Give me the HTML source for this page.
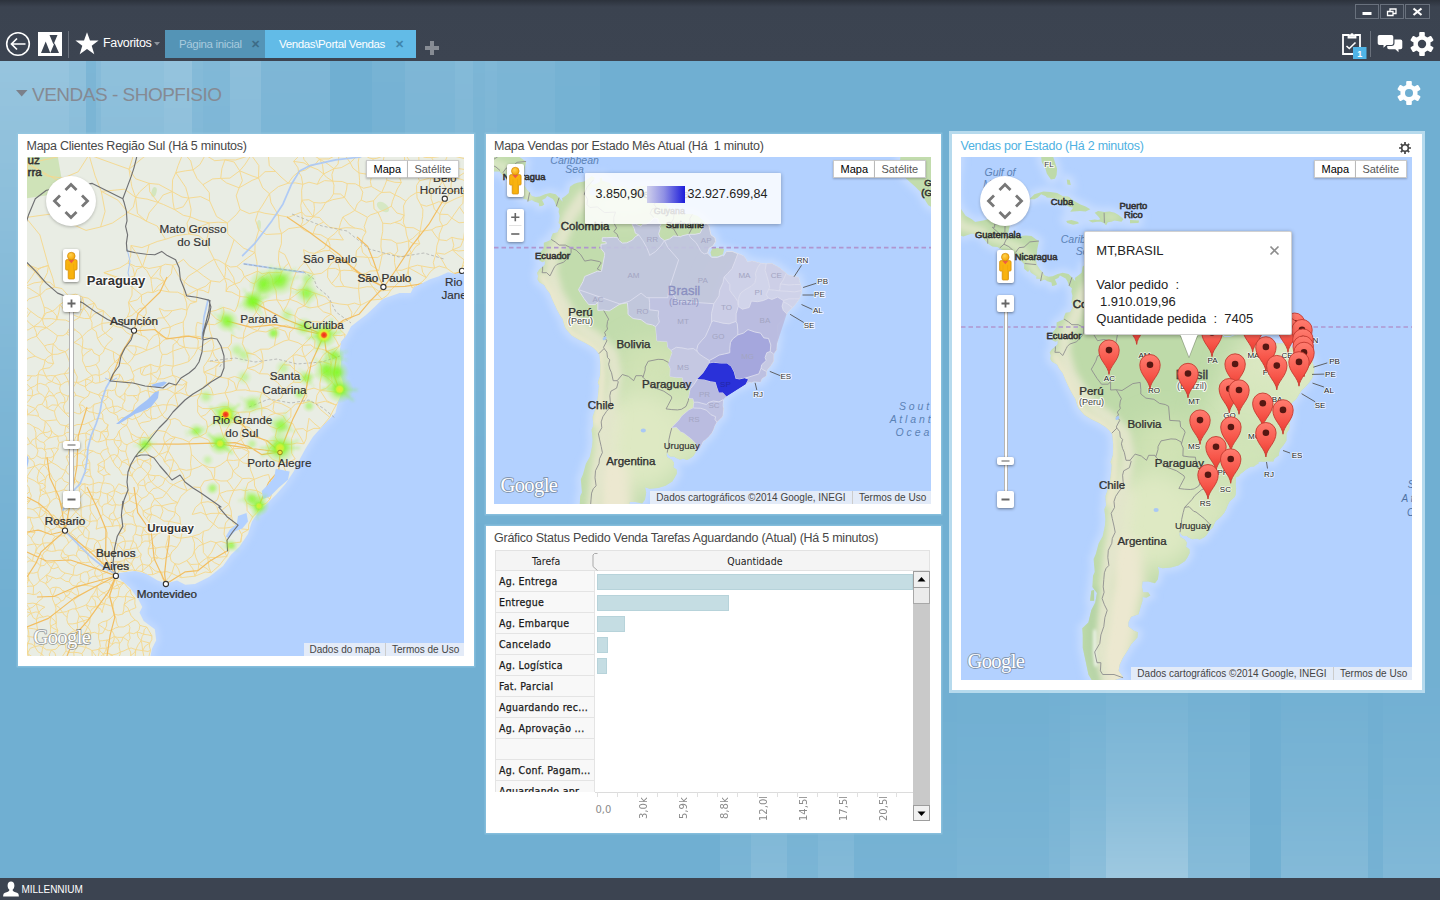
<!DOCTYPE html>
<html lang="pt-BR"><head><meta charset="utf-8"><title>Vendas - Portal Vendas</title>
<style>
*{box-sizing:border-box;margin:0;padding:0}
html,body{width:1440px;height:900px;overflow:hidden}
body{background:#70afd2;font-family:"Liberation Sans",sans-serif;position:relative}
#bgtl{position:absolute;left:0;top:61px;width:760px;height:560px;
 background:linear-gradient(90deg,rgba(255,255,255,0.27) 0px 69px,rgba(255,255,255,0.22) 69px 86px,rgba(255,255,255,0.09) 86px 96px,rgba(255,255,255,0.16) 96px 101px,rgba(255,255,255,0.22) 101px 164px,rgba(255,255,255,0.26) 164px 192px,rgba(255,255,255,0.15) 192px 203px,rgba(255,255,255,0.12) 203px 230px,rgba(255,255,255,0.2) 230px 261px,rgba(255,255,255,0.1) 261px 330px,rgba(255,255,255,0) 330px 372px,rgba(255,255,255,0.05) 372px 405px,rgba(255,255,255,0.1) 405px 455px,rgba(255,255,255,0.14) 455px 473px,rgba(255,255,255,0.09) 473px 485px,rgba(255,255,255,0.115) 485px 497px,rgba(255,255,255,0.085) 497px 555px,rgba(255,255,255,0.045) 555px 600px,rgba(255,255,255,0) 600px 760px);
 -webkit-mask-image:linear-gradient(180deg,#000 0,rgba(0,0,0,.75) 25%,rgba(0,0,0,.3) 65%,transparent 100%);mask-image:linear-gradient(180deg,#000 0,rgba(0,0,0,.75) 25%,rgba(0,0,0,.3) 65%,transparent 100%)}
#bgbr{position:absolute;left:700px;top:560px;width:740px;height:318px;
 background:linear-gradient(90deg,rgba(255,255,255,0) 0 20px,rgba(255,255,255,.08) 20px 51px,rgba(255,255,255,.16) 51px 87px,rgba(255,255,255,.08) 87px 118px,rgba(255,255,255,.14) 118px 154px,rgba(255,255,255,.05) 154px 257px,rgba(255,255,255,.08) 257px 349px,rgba(255,255,255,.12) 349px 370px,rgba(255,255,255,.2) 370px 406px,rgba(255,255,255,.32) 406px 488px,rgba(255,255,255,.16) 488px 550px,rgba(255,255,255,.02) 550px 581px,rgba(255,255,255,.14) 581px 668px,rgba(255,255,255,.04) 668px 683px,rgba(255,255,255,.12) 683px 740px);
 -webkit-mask-image:linear-gradient(0deg,#000 0,rgba(0,0,0,.55) 25%,rgba(0,0,0,.2) 55%,transparent 100%);mask-image:linear-gradient(0deg,#000 0,rgba(0,0,0,.55) 25%,rgba(0,0,0,.2) 55%,transparent 100%)}
#hdr{position:absolute;left:0;top:0;width:1440px;height:61px;background:linear-gradient(180deg,#2c323c 0,#3b4350 7px,#3c4451 100%)}
#hdr svg{position:absolute}
.tab{position:absolute;top:30px;height:28px;font-size:11.5px;line-height:28px;white-space:nowrap;letter-spacing:-.36px}
#tab1{left:165px;width:100px;background:#5494b6;color:#a9cbde}
#tab2{left:265px;width:151px;background:#62bbe7;color:#fff}
.tab span{position:absolute;top:0}
.tab i{position:absolute;top:0;font-style:normal;font-size:11px;color:#3d6c87;font-weight:bold}
#fav{position:absolute;left:103px;top:35px;color:#fff;font-size:12.5px;line-height:16px;letter-spacing:-.33px}
#ttl{position:absolute;left:32px;top:83px;font-size:19px;line-height:24px;color:#858a93;letter-spacing:-.5px;white-space:nowrap}
#footer{position:absolute;left:0;top:878px;width:1440px;height:22px;background:#3c4451;color:#fff;font-size:10px}
#footer svg{position:absolute;left:3px;top:3px}
#footer span{position:absolute;left:21.500px;top:6px;line-height:12px;letter-spacing:-0.05px}
.panel{position:absolute;background:#fff;box-shadow:0 0 0 1.5px rgba(150,200,228,.55)}
.panel.sel{box-shadow:0 0 0 3px rgba(205,232,245,.75)}
#p1{left:18px;top:133.500px;width:455.500px;height:532px}
#p2{left:485.500px;top:133.500px;width:455.500px;height:380px}
#p3{left:952px;top:133.500px;width:470px;height:556px}
#p4{left:485.500px;top:525.500px;width:455.500px;height:307px}
.ptitle{position:absolute;left:8.500px;top:4px;font-size:12.5px;line-height:16px;color:#484848;white-space:nowrap;letter-spacing:-0.25px}
#p3 .ptitle{color:#4eb1e2}
.map{position:absolute;overflow:hidden;background:#b3d1ff}
#m1{left:9px;top:23.500px;width:437px;height:499px}
#m2{left:8.500px;top:23.500px;width:437px;height:347px}
#m3{left:9px;top:23.500px;width:451px;height:523px}
.map>svg{position:absolute;left:0;top:0}
.gm{font-family:"Liberation Sans",sans-serif}
.mtype{position:absolute;top:3px;height:18px;background:#fff;border:1px solid #c9c9c9;box-shadow:0 1px 2px rgba(0,0,0,.25);font-size:11px;line-height:16px;text-align:center;color:#565656}
.mtype b{color:#000;font-weight:normal}
.attr{position:absolute;bottom:0;height:13.500px;background:rgba(245,245,245,.72);font-size:10px;line-height:13px;color:#444;white-space:nowrap;padding:0 6px}
.zb{position:absolute;width:17px;height:17px;background:#fff;border-radius:2px;box-shadow:0 1px 3px rgba(0,0,0,.45)}
.zb svg{position:absolute;left:0;top:0}
#iw{position:absolute;left:123.300px;top:74.300px;width:208px;height:103.500px;background:#fff;border-radius:2px;box-shadow:0 1px 4px rgba(0,0,0,.35);border:1px solid rgba(0,0,0,.18)}
#iwc{position:absolute;left:11px;top:9.700px;font-size:13px;line-height:17px;color:#222;white-space:nowrap;letter-spacing:0}
#lg{position:absolute;left:90.500px;top:15.500px;width:196px;height:51px;background:rgba(255,255,255,.84);box-shadow:0 1px 4px rgba(0,0,0,.3);border-radius:1px}
#lg span{position:absolute;top:13.500px;font-size:12.5px;line-height:16px;color:#222;white-space:nowrap}
#chart{position:absolute;width:434.500px;height:275px;font-family:"DejaVu Sans Condensed","DejaVu Sans","Liberation Sans",sans-serif;font-size:10.5px;color:#1a1a1a}
#chd{position:absolute;left:0;top:0;width:434.500px;height:21.500px;background:#f4f4f4;border:1px solid #e2e2e2}
#chd span{position:absolute;top:0;line-height:21px;text-align:center}
#crows{position:absolute;left:0;top:21.500px;width:434.500px;height:220.500px;overflow:hidden}
.crow{position:absolute;left:0;width:99.500px;height:21px;background:#f8f8f8;border:1px solid #e4e4e4;border-top:0}
.crow span{position:absolute;left:2.500px;top:0;line-height:20px;white-space:nowrap;letter-spacing:.3px;-webkit-text-stroke:.25px #1a1a1a}
.cbar{position:absolute;left:101.900px;height:16.500px;background:#c5dde3;border:1px solid #b7d3da}
#cax{position:absolute;left:99.500px;top:242px;width:318px;height:1px;background:#dcdcdc}
#chart>i{position:absolute;top:242px;width:1px;height:5px;background:#e0e0e0}
.xl0{position:absolute;top:254.500px;font-family:"DejaVu Sans","Liberation Sans",sans-serif;font-size:10px;color:#8a8a8a;line-height:12px}
.xl{position:absolute;top:247px;width:14px;height:24px;font-family:"DejaVu Sans","Liberation Sans",sans-serif;font-size:10px;color:#8a8a8a;line-height:14px;writing-mode:vertical-rl;transform:rotate(180deg);white-space:nowrap;overflow:hidden;text-align:right}
#csb{position:absolute;left:417.700px;top:21.700px;width:16.700px;height:250px;background:#c9c9c9}
.sbb{position:absolute;left:0;width:16.700px;height:16.500px;background:#f0f0f0;border:1px solid #9d9d9d}
.sbb svg{position:absolute;left:0;top:0}
.sbt{position:absolute;left:0;top:16.500px;width:16.700px;height:16px;background:#ebebeb;border:1px solid #a8a8a8;border-top:0}

</style></head><body>
<div id="bgtl"></div><div id="bgbr"></div>
<div id="hdr">
<svg style="left:5px;top:31px" width="26" height="26" viewBox="0 0 26 26"><circle cx="13" cy="13" r="11.300" fill="none" stroke="#fff" stroke-width="1.600"/><path d="M20.500 13H7M12 7.500L6.500 13l5.500 5.500" fill="none" stroke="#fff" stroke-width="1.700"/></svg>
<svg style="left:38px;top:32px" width="24" height="24" viewBox="0 0 24 24"><rect width="24" height="24" fill="#fff"/><path d="M11.500 3h8l-4 9.500zM3 21l4.700-11.500L12.300 21zM12.300 21l4.200-10 4.500 10z" fill="#3c4451"/></svg>
<svg style="left:67.500px;top:31px" width="1" height="27"><rect width="1" height="27" fill="#6a717c"/></svg>
<svg style="left:74px;top:31px" width="26" height="25" viewBox="0 0 26 25"><path d="M13 1.200l3 8.300h8.600l-6.900 5.200 2.600 8.500L13 18l-7.300 5.200 2.600-8.500L1.400 9.500H10z" fill="#fff"/></svg>
<div id="fav">Favoritos</div>
<svg style="left:153.500px;top:42px" width="6" height="4" viewBox="0 0 6 4"><path d="M0 0h6L3 3.500z" fill="#8e949c"/></svg>
<div class="tab" id="tab1"><span style="left:14px">Página inicial</span><i style="left:86px">✕</i></div>
<div class="tab" id="tab2"><span style="left:14px">Vendas\Portal Vendas</span><i style="left:130px;color:#3f86ad">✕</i></div>
<svg style="left:425px;top:41px" width="14" height="14" viewBox="0 0 14 14"><path d="M5 0h4v5h5v4H9v5H5V9H0V5h5z" fill="#878c94"/></svg>
<!-- window buttons -->
<svg style="left:1355px;top:4px" width="76" height="16" viewBox="0 0 76 16"><g fill="none" stroke="#69717d"><rect x=".5" y=".5" width="23" height="14"/><rect x="25.500" y=".5" width="23" height="14"/><rect x="50.500" y=".5" width="24" height="14"/></g><rect x="7.500" y="8" width="9" height="3" fill="#fff"/><path d="M32.500 7.500h5.500v4h-5.500zM35 7V5h6v4.500h-2.500" fill="none" stroke="#fff" stroke-width="1.300"/><path d="M58.500 4.500l8 6.500M66.500 4.500l-8 6.500" stroke="#fff" stroke-width="2.200"/></svg>
<!-- clipboard -->
<svg style="left:1341px;top:30px" width="28" height="30" viewBox="0 0 28 30"><path d="M2 5h5.500v2.500h7V5H19v19H2z" fill="none" stroke="#fff" stroke-width="1.800"/><path d="M8 4.500h1.300a1.800 1.800 0 0 1 3.400 0H14v2.300H8z" fill="#fff"/><path d="M5.500 16l2.800 2.500 6.200-6" fill="none" stroke="#fff" stroke-width="1.600"/><rect x="12" y="17" width="13.500" height="12" fill="#4fb4e6"/><text x="18.700" y="26.500" font-family="Liberation Sans,sans-serif" font-size="9" font-weight="bold" fill="#fff" text-anchor="middle">1</text></svg>
<svg style="left:1370px;top:31px" width="1" height="26"><rect width="1" height="26" fill="#6a717c"/></svg>
<!-- chat -->
<svg style="left:1377px;top:34px" width="26" height="20" viewBox="0 0 26 20"><path d="M2.500 1h12a1.800 1.800 0 0 1 1.800 1.800v6.400a1.800 1.800 0 0 1-1.800 1.800H9.500L6.500 13.800V11H2.500A1.800 1.800 0 0 1 .7 9.200V2.800A1.800 1.800 0 0 1 2.500 1z" fill="#fff"/><path d="M17.500 5.500h6a1.800 1.800 0 0 1 1.800 1.800v6.200a1.800 1.800 0 0 1-1.800 1.800h-2v2.900l-3.200-2.900H12a1.800 1.800 0 0 1-1.800-1.800V12h4.300a3 3 0 0 0 3-3z" fill="#fff"/></svg>
<!-- gear -->
<svg style="left:1410px;top:32px" width="24" height="24" viewBox="-12 -12 24 24"><g fill="#fff"><circle r="8.600"/><g id="tth"><rect x="-2.800" y="-12" width="5.600" height="6" rx="1"/></g><use href="#tth" transform="rotate(60)"/><use href="#tth" transform="rotate(120)"/><use href="#tth" transform="rotate(180)"/><use href="#tth" transform="rotate(240)"/><use href="#tth" transform="rotate(300)"/></g><circle r="4.200" fill="#3c4451"/></svg>
</div>
<svg style="position:absolute;left:16px;top:90px" width="12" height="7" viewBox="0 0 12 7"><path d="M0 0h11.500L5.700 6.500z" fill="#7b808a"/></svg>
<div id="ttl">VENDAS - SHOPFISIO</div>
<svg style="position:absolute;left:1397px;top:81px" width="24" height="24" viewBox="-12 -12 24 24"><g fill="#fff"><circle r="8.600"/><use href="#tth"/><use href="#tth" transform="rotate(60)"/><use href="#tth" transform="rotate(120)"/><use href="#tth" transform="rotate(180)"/><use href="#tth" transform="rotate(240)"/><use href="#tth" transform="rotate(300)"/></g><circle r="4" fill="#70afd2"/></svg>

<div class="panel" id="p1"><div class="ptitle">Mapa Clientes Região Sul (Há 5 minutos)</div><div class="map" id="m1"><svg width="437" height="499" viewBox="0 0 437 499" font-family="Liberation Sans,sans-serif"><defs><clipPath id="land1"><path d="M442.0 115.0L437.0 115.3L428.0 116.7L421.0 115.3L411.4 119.4L403.0 122.2L394.8 126.4L386.4 130.6L383.7 136.0L372.6 136.0L364.0 139.0L356.0 141.7L347.6 150.0L339.0 158.0L331.0 164.0L324.0 169.4L319.8 177.8L314.0 184.7L312.8 194.4L314.0 205.6L312.8 216.7L315.5 224.0L316.7 231.0L311.0 245.0L308.4 256.0L296.0 268.6L286.0 279.7L279.0 290.8L273.7 300.6L266.7 314.4L258.4 327.0L248.7 338.0L237.6 349.0L230.6 356.0L225.0 364.4L221.0 377.0L212.6 389.4L204.0 397.8L196.0 409.0L182.0 420.0L168.0 427.0L158.3 427.8L150.0 423.6L138.9 426.4L130.6 423.6L119.4 416.7L108.3 413.9L97.2 415.3L88.9 416.7L94.4 423.6L102.8 430.6L111.0 441.7L115.3 450.0L112.5 455.6L116.7 463.9L127.8 472.2L129.2 483.3L125.0 491.7L122.2 505.0L-5.0 505.0L-5.0 -5.0L442.0 -5.0Z"/></clipPath><radialGradient id="hg"><stop offset="0" stop-color="#7cff1c" stop-opacity="1"/><stop offset=".3" stop-color="#86f52c" stop-opacity=".85"/><stop offset=".65" stop-color="#97f446" stop-opacity=".35"/><stop offset="1" stop-color="#a4f25a" stop-opacity="0"/></radialGradient><radialGradient id="hy"><stop offset="0" stop-color="#ffe23a" stop-opacity="1"/><stop offset=".6" stop-color="#e6f23a" stop-opacity=".8"/><stop offset="1" stop-color="#b8f23a" stop-opacity="0"/></radialGradient><radialGradient id="hr"><stop offset="0" stop-color="#f0241a" stop-opacity="1"/><stop offset=".6" stop-color="#f5531f" stop-opacity=".95"/><stop offset="1" stop-color="#ffb52a" stop-opacity="0"/></radialGradient></defs><path d="M442.0 115.0L437.0 115.3L428.0 116.7L421.0 115.3L411.4 119.4L403.0 122.2L394.8 126.4L386.4 130.6L383.7 136.0L372.6 136.0L364.0 139.0L356.0 141.7L347.6 150.0L339.0 158.0L331.0 164.0L324.0 169.4L319.8 177.8L314.0 184.7L312.8 194.4L314.0 205.6L312.8 216.7L315.5 224.0L316.7 231.0L311.0 245.0L308.4 256.0L296.0 268.6L286.0 279.7L279.0 290.8L273.7 300.6L266.7 314.4L258.4 327.0L248.7 338.0L237.6 349.0L230.6 356.0L225.0 364.4L221.0 377.0L212.6 389.4L204.0 397.8L196.0 409.0L182.0 420.0L168.0 427.0L158.3 427.8L150.0 423.6L138.9 426.4L130.6 423.6L119.4 416.7L108.3 413.9L97.2 415.3L88.9 416.7L94.4 423.6L102.8 430.6L111.0 441.7L115.3 450.0L112.5 455.6L116.7 463.9L127.8 472.2L129.2 483.3L125.0 491.7L122.2 505.0L-5.0 505.0L-5.0 -5.0L442.0 -5.0Z" fill="none" stroke="#c3daff" stroke-width="7" filter="url(#blur3)"/><path d="M442.0 115.0L437.0 115.3L428.0 116.7L421.0 115.3L411.4 119.4L403.0 122.2L394.8 126.4L386.4 130.6L383.7 136.0L372.6 136.0L364.0 139.0L356.0 141.7L347.6 150.0L339.0 158.0L331.0 164.0L324.0 169.4L319.8 177.8L314.0 184.7L312.8 194.4L314.0 205.6L312.8 216.7L315.5 224.0L316.7 231.0L311.0 245.0L308.4 256.0L296.0 268.6L286.0 279.7L279.0 290.8L273.7 300.6L266.7 314.4L258.4 327.0L248.7 338.0L237.6 349.0L230.6 356.0L225.0 364.4L221.0 377.0L212.6 389.4L204.0 397.8L196.0 409.0L182.0 420.0L168.0 427.0L158.3 427.8L150.0 423.6L138.9 426.4L130.6 423.6L119.4 416.7L108.3 413.9L97.2 415.3L88.9 416.7L94.4 423.6L102.8 430.6L111.0 441.7L115.3 450.0L112.5 455.6L116.7 463.9L127.8 472.2L129.2 483.3L125.0 491.7L122.2 505.0L-5.0 505.0L-5.0 -5.0L442.0 -5.0Z" fill="#e9ede4"/><g clip-path="url(#land1)"><path d="M-5 -5H30L36 30 22 38-5 42z" fill="#cfe3b8"/><ellipse cx="127" cy="35" rx="2.500" ry="5" fill="#d3e6bf" transform="rotate(15 127 35)"/><ellipse cx="236" cy="125" rx="3" ry="5" fill="#d6e8c4"/><ellipse cx="356" cy="50" rx="7" ry="4" fill="#d6e8c4" transform="rotate(35 356 50)"/><ellipse cx="232" cy="68" rx="2" ry="5" fill="#d6e8c4"/><path d="M196.7 280.5L202.0 287.5 205.5 291.8M196.7 280.5L191.9 284.7 185.2 290.1M196.7 280.5L198.6 274.3 203.8 265.2M196.7 280.5L193.2 269.3 191.2 264.2M222.1 294.9L221.0 300.4 223.3 307.2M222.1 294.9L216.8 299.8 212.3 302.8M222.1 294.9L217.6 288.3 214.2 282.6M222.1 294.9L214.7 291.3 205.5 291.8M74.4 255.7L75.8 258.0 75.9 262.2M74.4 255.7L76.0 253.5 79.4 251.1M33.0 147.5L28.1 152.3 25.5 154.1M33.0 147.5L37.3 144.6 41.4 138.8M33.0 147.5L37.2 153.0 43.9 156.0M33.0 147.5L31.9 155.1 29.8 162.6M31.4 410.2L30.7 408.3 27.6 404.7M31.4 410.2L26.8 411.7 24.2 411.1M31.4 410.2L34.0 413.9 37.9 416.0M306.9 11.7L302.9 13.8 296.6 17.0M306.9 11.7L304.9 17.6 305.8 24.2M306.9 11.7L311.1 7.0 312.1 -3.4M62.0 -2.2L51.2 14.8 36.2 21.1M62.0 -2.2L68.0 18.5 74.3 34.4M62.0 -2.2L88.8 7.5 102.0 12.2M231.5 20.9L238.0 14.7 248.6 14.4M231.5 20.9L235.7 30.9 242.5 36.7M231.5 20.9L225.2 19.0 212.7 13.8M231.5 20.9L225.2 23.3 212.1 30.8M76.9 115.6L92.7 110.9 101.0 105.8M76.9 115.6L97.1 122.3 107.7 118.8M76.9 115.6L86.2 119.5 105.1 130.2M3.7 230.8L7.5 229.2 10.4 227.0M3.7 230.8L5.6 233.4 5.3 238.9M227.2 322.3L227.6 328.8 230.0 333.7M227.2 322.3L222.1 321.2 215.4 321.6M227.2 322.3L221.0 325.9 218.4 333.8M227.2 322.3L236.4 318.7 241.6 317.5M218.4 333.8L213.6 332.6 206.9 333.4M218.4 333.8L222.7 332.5 230.0 333.7M218.4 333.8L217.8 341.9 219.8 345.9M199.0 134.4L201.6 129.8 207.9 126.9M199.0 134.4L199.5 126.7 197.5 121.2M199.0 134.4L204.6 135.1 212.8 139.5M134.1 109.2L138.4 107.2 145.6 108.1M134.1 109.2L132.9 117.8 137.1 124.6M134.1 109.2L127.8 116.8 123.9 121.2M134.1 109.2L121.9 111.5 115.5 109.7M122.1 26.4L112.6 34.9 108.6 40.4M122.1 26.4L122.8 34.8 130.9 45.4M122.1 26.4L131.7 27.3 145.2 34.6M23.4 316.7L19.8 318.6 18.6 321.9M23.4 316.7L25.6 321.4 28.8 325.0M23.4 316.7L19.9 311.2 17.4 308.0M345.8 130.0L339.9 129.7 331.5 131.4M345.8 130.0L351.0 137.6 355.0 142.1M345.8 130.0L339.9 122.0 338.5 116.6M29.8 162.6L29.4 158.6 25.5 154.1M29.8 162.6L26.9 165.5 19.6 170.7M29.8 162.6L38.7 163.1 43.3 165.3M29.8 162.6L24.5 161.6 15.3 161.8M36.2 21.1L20.0 19.0 1.0 6.6M354.2 82.2L353.9 90.0 355.3 97.3M354.2 82.2L364.3 83.1 369.7 86.3M354.2 82.2L355.7 74.5 355.7 66.2M245.6 222.2L241.3 217.0 232.4 216.7M245.6 222.2L250.6 225.5 257.7 233.4M77.1 369.9L72.1 371.2 69.1 372.2M77.1 369.9L80.2 369.6 85.7 369.3M49.9 324.1L46.7 326.4 42.5 326.3M49.9 324.1L51.6 326.8 52.3 331.5M49.9 324.1L47.1 320.3 44.3 318.2M43.2 208.4L46.9 211.6 48.0 215.1M43.2 208.4L41.4 211.8 37.2 216.8M43.2 208.4L42.1 203.6 38.3 194.6M86.3 194.6L83.3 193.4 77.7 191.1M86.3 194.6L92.0 198.3 94.9 199.3M86.3 194.6L86.8 200.9 87.8 204.9M35.9 503.4L32.4 502.2 29.1 500.7M35.9 503.4L35.7 499.0 39.0 493.9M35.9 503.4L42.5 503.3 47.9 503.8M35.9 503.4L30.7 500.9 22.9 502.7M31.2 292.4L30.9 290.3 32.2 285.6M31.2 292.4L28.4 290.8 23.9 291.6M31.2 292.4L29.4 295.0 26.8 299.2M101.1 302.1L96.8 303.5 94.8 304.9M101.1 302.1L101.5 305.4 102.6 308.9M101.1 302.1L100.0 299.5 98.7 294.4M159.9 225.2L155.6 228.1 149.0 227.5M159.9 225.2L158.5 233.5 160.5 238.4M159.9 225.2L150.7 220.0 145.9 218.4M159.9 225.2L156.7 230.8 147.9 236.7M73.6 70.0L85.5 66.0 100.9 55.5M73.6 70.0L78.1 54.5 74.3 34.4M104.0 88.5L103.7 98.9 101.0 105.8M104.0 88.5L114.9 90.6 122.0 87.8M104.0 88.5L110.3 97.9 115.5 109.7M79.8 483.1L83.1 485.6 85.0 487.5M79.8 483.1L75.5 483.7 72.4 484.0M79.8 483.1L78.8 488.0 79.4 491.2M182.6 43.9L182.3 35.7 175.9 27.7M182.6 43.9L173.6 39.6 161.7 41.1M7.7 489.6L5.3 487.1 0.8 486.5M7.7 489.6L12.3 488.7 15.7 490.2M7.7 489.6L7.6 484.5 10.3 480.5M99.0 355.7L102.7 358.4 106.3 359.9M99.0 355.7L103.4 355.6 107.3 353.0M99.0 355.7L97.6 352.9 96.0 347.4M99.0 355.7L94.6 359.6 89.6 362.2M262.6 142.3L263.9 134.9 263.7 130.8M262.6 142.3L255.4 143.8 249.8 142.8M262.6 142.3L259.9 148.3 256.5 154.3M262.6 142.3L270.1 144.8 277.4 149.0M70.2 363.9L65.6 364.0 63.1 364.8M70.2 363.9L70.1 367.3 69.1 372.2M21.4 108.5L14.8 110.4 7.9 114.9M21.4 108.5L20.4 115.7 15.9 124.7M21.4 108.5L25.9 121.4 27.7 130.1M21.4 108.5L10.9 111.6 -1.9 106.6M409.2 95.9L409.9 88.7 411.9 82.7M409.2 95.9L406.3 105.5 407.6 111.1M-2.4 129.7L2.2 131.3 13.1 138.3M-2.4 129.7L4.9 119.7 7.9 114.9M-2.4 129.7L-3.6 136.2 -3.1 147.9M-2.4 129.7L7.0 125.9 15.9 124.7M193.7 21.4L185.7 21.9 175.9 27.7M193.7 21.4L194.9 11.6 197.9 2.8M193.7 21.4L202.9 21.1 212.7 13.8M193.7 21.4L199.5 25.9 212.1 30.8M70.5 181.4L75.4 177.7 78.4 176.2M70.5 181.4L69.2 174.7 64.9 171.5M70.5 181.4L74.7 188.3 77.7 191.1M251.5 58.3L252.3 70.3 254.5 76.7M251.5 58.3L237.8 56.3 231.3 54.5M251.5 58.3L244.0 45.8 242.5 36.7M251.5 58.3L261.9 60.2 274.7 55.0M-1.8 462.4L0.7 458.7 4.2 456.3M-1.8 462.4L-2.9 458.7 -2.3 453.6M-1.8 462.4L-1.8 466.4 0.7 471.1M-0.3 320.2L0.5 324.2 -0.9 326.9M-0.3 320.2L-0.8 316.4 -4.3 311.3M-0.3 320.2L7.1 323.5 11.2 326.3M-0.3 320.2L4.2 313.1 7.6 309.2M210.4 369.1L214.7 371.9 221.5 372.6M210.4 369.1L206.1 365.9 204.5 359.0M210.4 369.1L203.5 370.3 197.6 371.1M210.4 369.1L214.9 378.2 213.7 385.1M24.4 273.4L24.7 276.1 22.1 281.0M24.4 273.4L20.9 275.2 16.3 275.7M24.4 273.4L26.7 276.5 31.2 279.2M24.4 273.4L23.2 270.2 18.2 264.0M150.8 345.6L148.2 350.5 148.3 355.2M150.8 345.6L145.5 343.1 139.4 335.6M150.8 345.6L153.8 339.4 160.2 333.6M150.8 345.6L142.9 346.8 134.4 348.9M180.6 400.3L176.1 403.5 171.8 407.1M180.6 400.3L176.4 395.6 176.1 387.2M180.6 400.3L187.4 405.6 192.7 408.1M275.6 188.4L275.1 192.9 277.6 199.9M275.6 188.4L283.7 187.9 287.5 191.0M275.6 188.4L281.3 183.0 284.5 179.2M256.3 306.0L263.4 304.3 268.2 302.0M256.3 306.0L257.0 310.2 260.4 318.6M256.3 306.0L245.9 302.7 240.4 296.9M28.3 379.4L26.0 382.2 25.9 386.2M28.3 379.4L24.8 377.5 23.7 373.2M3.6 302.1L7.0 301.2 9.7 298.7M3.6 302.1L1.8 298.8 -2.1 296.9M3.6 302.1L7.0 305.1 7.6 309.2M3.6 302.1L0.1 301.3 -4.5 303.1M209.8 109.5L203.6 110.0 198.3 107.4M209.8 109.5L215.1 113.8 217.3 119.7M309.1 248.1L314.1 240.5 314.4 235.8M309.1 248.1L306.8 252.1 302.7 260.2M309.1 248.1L298.2 244.2 288.7 246.5M309.1 248.1L299.8 243.8 293.0 233.3M106.9 -4.1L105.2 2.4 102.0 12.2M106.9 -4.1L115.6 -2.6 125.3 -2.7M127.6 342.0L125.6 337.6 122.2 335.9M127.6 342.0L124.8 346.5 123.9 350.7M127.6 342.0L131.1 345.1 134.4 348.9M139.4 335.6L135.1 332.9 131.0 330.6M139.4 335.6L143.5 330.1 146.4 327.7M139.4 335.6L135.6 340.5 127.6 342.0M80.7 213.6L82.8 216.8 82.8 221.4M80.7 213.6L75.4 217.0 72.1 218.4M80.7 213.6L82.8 210.1 87.8 204.9M256.5 154.3L261.2 157.0 267.8 158.6M256.5 154.3L253.8 149.0 249.8 142.8M52.2 247.7L56.2 248.5 58.7 251.9M52.2 247.7L54.7 243.8 57.8 241.2M52.2 247.7L54.1 252.9 53.2 256.9M87.8 204.9L91.2 202.1 94.9 199.3M276.0 246.3L282.2 244.4 288.7 246.5M276.0 246.3L268.5 247.0 264.0 251.7M388.9 11.5L389.7 17.2 392.5 23.8M388.9 11.5L392.0 5.5 391.7 -2.0M388.9 11.5L382.5 11.0 374.2 11.7M131.2 400.8L126.8 400.5 124.5 401.3M131.2 400.8L128.2 396.9 128.8 391.1M131.2 400.8L126.6 402.9 122.1 408.3M131.2 400.8L135.6 402.0 143.1 398.9M-1.3 60.5L24.0 57.0 38.4 64.2M-1.3 60.5L-2.6 83.8 -1.9 106.6M-1.3 60.5L12.9 77.9 21.4 108.5M197.9 2.8L207.1 5.0 212.7 13.8M197.9 2.8L187.7 3.7 178.3 -2.0M369.2 113.2L373.1 118.9 376.7 122.9M369.2 113.2L374.7 113.3 381.5 110.7M277.5 221.7L280.4 227.3 279.2 233.1M277.5 221.7L278.7 218.2 281.5 210.9M277.5 221.7L273.9 225.5 266.5 225.2M277.5 221.7L274.0 217.1 267.5 212.8M302.8 93.5L302.9 87.6 300.9 82.0M302.8 93.5L305.7 95.7 312.8 102.1M207.1 82.7L200.8 77.0 200.4 65.9M207.1 82.7L216.8 91.3 227.9 95.5M207.1 82.7L201.9 97.8 198.3 107.4M316.4 83.0L312.1 76.4 312.0 71.8M316.4 83.0L308.9 82.4 300.9 82.0M114.5 169.4L113.0 172.8 114.8 178.6M114.5 169.4L115.8 165.3 117.0 160.1M114.5 169.4L119.4 167.7 126.3 165.1M404.2 35.3L404.1 41.5 406.0 47.1M404.2 35.3L398.9 36.0 389.7 35.4M404.2 35.3L402.1 28.6 403.8 20.8M404.2 35.3L410.2 32.6 415.5 24.3M49.4 225.4L46.8 225.2 41.5 224.4M49.4 225.4L47.1 229.0 44.7 233.2M49.4 225.4L52.9 225.1 58.5 222.3M162.2 285.2L165.9 281.2 172.9 279.6M162.2 285.2L163.8 292.0 164.4 297.2M287.7 96.3L282.4 95.7 276.6 92.7M287.7 96.3L283.9 100.7 278.0 104.6M287.7 96.3L296.8 93.8 302.8 93.5M287.7 96.3L297.6 90.8 300.9 82.0M87.5 457.1L89.1 461.5 89.2 464.0M87.5 457.1L86.5 452.6 86.0 449.2M87.5 457.1L91.0 458.1 95.7 457.1M87.5 457.1L83.0 462.0 79.9 463.7M27.8 218.8L26.5 221.3 24.9 224.6M27.8 218.8L23.7 218.5 18.9 219.2M27.8 218.8L34.1 217.1 37.2 216.8M359.8 23.2L359.1 15.7 359.4 11.0M359.8 23.2L357.8 28.4 354.7 35.5M143.1 398.9L144.0 403.8 148.0 406.8M143.1 398.9L141.0 396.2 138.6 390.0M143.1 398.9L144.8 394.9 149.7 390.3M423.8 34.6L419.2 41.9 418.9 46.4M423.8 34.6L430.9 34.3 436.3 38.7M423.8 34.6L418.6 30.6 415.5 24.3M423.8 34.6L424.2 26.0 426.9 20.6M91.2 263.3L90.4 258.7 86.8 256.4M91.2 263.3L95.4 267.5 99.5 268.2M91.2 263.3L94.3 260.7 100.6 260.8M122.6 368.3L119.7 370.2 116.2 370.6M122.6 368.3L121.6 364.3 119.6 361.9M122.6 368.3L121.8 373.2 122.0 377.6M122.6 368.3L122.4 363.7 124.6 357.4M282.0 261.3L281.0 267.2 279.8 274.6M282.0 261.3L286.9 266.2 293.4 271.4M132.4 187.9L133.0 193.1 135.2 197.4M132.4 187.9L135.7 183.8 140.6 181.1M85.2 431.6L83.7 428.2 81.6 425.4M85.2 431.6L88.1 431.8 92.5 430.8M85.2 431.6L83.9 435.2 82.4 440.1M85.2 431.6L79.6 434.3 77.0 435.8M251.9 94.3L257.8 97.5 261.8 106.2M251.9 94.3L254.4 86.8 254.5 76.7M251.9 94.3L251.4 103.6 254.5 115.6M234.9 251.1L234.6 258.4 238.3 262.8M234.9 251.1L229.6 252.2 222.8 254.9M234.9 251.1L242.3 248.6 247.2 244.8M266.6 4.4L271.0 10.8 271.5 14.9M266.6 4.4L270.3 0.7 275.7 -4.9M266.6 4.4L277.0 5.9 283.3 9.7M247.2 244.8L246.0 252.6 248.4 256.4M247.2 244.8L254.2 241.1 257.7 233.4M305.8 24.2L299.6 20.3 296.6 17.0M305.8 24.2L307.0 28.3 306.5 36.8M305.8 24.2L315.2 24.5 320.2 26.6M236.2 204.7L235.6 211.0 232.4 216.7M236.2 204.7L235.1 196.9 233.6 192.2M236.2 204.7L227.7 209.3 220.3 211.2M236.2 204.7L228.3 197.9 219.7 195.9M113.0 235.6L110.2 238.5 105.8 238.6M113.0 235.6L113.1 231.6 110.5 227.8M113.0 235.6L118.5 233.5 121.1 234.0M48.0 215.1L50.3 219.8 49.4 225.4M48.0 215.1L44.5 215.4 37.2 216.8M207.8 154.6L203.7 152.4 196.5 150.3M207.8 154.6L210.4 149.1 212.8 139.5M77.5 310.7L77.2 307.4 77.4 303.7M77.5 310.7L74.4 309.8 70.7 307.4M77.5 310.7L74.9 313.2 70.9 314.9M412.8 57.2L412.7 63.7 415.7 68.9M412.8 57.2L407.3 52.1 406.0 47.1M346.1 1.8L349.7 1.4 357.3 -1.5M346.1 1.8L342.1 1.0 333.1 -4.9M346.1 1.8L345.0 9.9 344.9 17.7M304.0 157.2L307.2 159.9 312.2 165.9M304.0 157.2L303.4 150.3 303.2 145.1M304.0 157.2L298.9 160.2 294.4 165.3M304.0 157.2L296.4 154.8 290.9 149.7M152.4 311.7L149.4 313.4 143.6 314.1M152.4 311.7L150.3 307.4 146.7 302.9M152.4 311.7L156.1 317.3 157.6 322.1M37.9 369.3L39.6 367.1 41.9 362.7M37.9 369.3L35.2 365.4 32.3 363.2M37.9 369.3L34.3 371.0 29.5 369.9M46.1 254.9L46.4 258.2 45.0 261.4M46.1 254.9L50.7 256.7 53.2 256.9M232.4 216.7L227.6 213.4 220.3 211.2M161.7 204.6L162.2 199.3 157.5 190.2M161.7 204.6L154.9 206.8 146.2 209.2M161.7 204.6L167.4 197.7 170.8 191.2M231.9 72.9L228.5 63.2 231.3 54.5M231.9 72.9L239.1 77.5 254.5 76.7M231.9 72.9L228.1 85.1 227.9 95.5M83.3 317.7L80.8 317.3 76.8 318.7M83.3 317.7L79.1 314.9 77.5 310.7M381.5 110.7L380.5 116.2 376.7 122.9M381.5 110.7L390.3 108.2 394.6 109.0M395.6 59.5L395.9 52.7 393.7 47.6M395.6 59.5L394.0 68.8 393.1 74.4M99.4 367.1L96.5 366.8 92.7 368.7M99.4 367.1L97.9 370.0 98.1 374.1M108.6 40.4L106.3 50.0 100.9 55.5M108.6 40.4L120.1 42.1 130.9 45.4M108.6 40.4L110.5 56.5 119.3 64.2M351.0 55.4L343.7 57.8 340.4 60.3M351.0 55.4L353.8 61.6 355.7 66.2M351.0 55.4L347.0 51.8 346.5 43.8M351.0 55.4L358.2 52.6 364.3 49.2M174.1 345.6L181.0 344.7 186.2 345.9M174.1 345.6L176.4 350.2 178.8 357.7M174.1 345.6L168.5 350.3 165.2 357.5M432.5 49.9L435.9 46.3 436.3 38.7M432.5 49.9L427.1 57.6 424.7 61.1M219.8 345.9L225.0 348.7 233.2 348.5M219.8 345.9L220.1 353.5 225.6 360.1M18.3 483.8L17.7 486.4 15.7 490.2M18.3 483.8L19.6 480.0 23.2 478.4M201.2 386.9L194.2 384.4 189.0 385.7M201.2 386.9L201.9 394.7 199.8 399.5M201.2 386.9L209.2 385.6 213.7 385.1M201.2 386.9L197.0 377.2 197.6 371.1M139.4 232.4L142.7 233.5 147.9 236.7M139.4 232.4L132.3 233.1 129.0 234.9M139.4 232.4L145.7 228.9 149.0 227.5M72.8 225.6L72.6 221.0 72.1 218.4M72.8 225.6L68.2 226.3 65.3 224.9M224.2 -2.0L230.3 -4.8 241.3 -2.4M224.2 -2.0L217.7 7.9 212.7 13.8M224.2 -2.0L231.9 8.6 231.5 20.9M224.2 -2.0L208.5 3.0 197.9 2.8M277.6 199.9L280.1 204.8 281.5 210.9M277.6 199.9L269.7 197.7 265.9 198.4M264.0 251.7L263.8 260.0 259.5 264.5M264.0 251.7L258.9 256.0 248.4 256.4M264.0 251.7L254.5 246.6 247.2 244.8M108.0 463.0L110.7 464.4 112.9 468.3M108.0 463.0L104.2 465.0 101.5 467.2M108.0 463.0L104.1 458.6 102.1 453.8M320.2 26.6L328.4 26.8 332.6 29.2M320.2 26.6L319.6 32.1 317.5 40.4M96.1 480.3L98.5 482.0 101.5 484.1M96.1 480.3L94.6 484.3 92.6 486.2M96.1 480.3L99.6 476.8 102.1 475.7M96.1 480.3L90.4 480.4 87.3 479.4M294.4 165.3L287.6 164.5 280.4 165.2M233.6 192.2L241.7 192.1 247.4 188.7M233.6 192.2L225.4 196.5 219.7 195.9M437.9 1.8L441.0 7.0 441.2 13.1M437.9 1.8L429.6 -0.3 420.9 -2.2M107.3 198.4L109.3 193.2 108.7 189.1M107.3 198.4L104.6 202.8 100.4 206.9M161.7 41.1L155.0 40.0 145.2 34.6M161.7 41.1L156.2 49.8 147.4 52.5M161.7 41.1L164.1 52.5 163.2 59.8M10.6 472.7L9.1 477.0 10.3 480.5M10.6 472.7L6.5 471.7 0.7 471.1M10.6 472.7L9.8 468.2 9.4 462.6M63.1 234.8L59.7 233.1 58.3 229.7M63.1 234.8L61.0 239.2 57.8 241.2M63.1 234.8L66.4 236.1 71.4 237.8M67.3 247.2L71.2 246.2 75.1 244.8M67.3 247.2L66.1 250.1 66.0 255.4M67.3 247.2L63.6 250.8 58.7 251.9M157.1 138.3L156.9 130.2 157.2 124.7M157.1 138.3L163.9 144.0 169.6 144.7M157.1 138.3L161.7 137.3 170.5 132.6M157.1 138.3L150.7 135.2 142.3 135.0M119.6 361.9L121.6 358.6 124.6 357.4M119.6 361.9L116.3 358.2 116.1 353.9M125.3 -2.7L117.1 -0.2 102.0 12.2M102.0 12.2L108.7 21.8 122.1 26.4M102.0 12.2L104.8 29.7 108.6 40.4M61.6 381.7L57.5 379.9 55.8 377.1M61.6 381.7L60.0 385.5 58.8 389.8M61.6 381.7L66.5 381.8 70.7 383.9M61.6 381.7L62.2 374.8 58.7 370.5M332.0 16.0L340.7 17.3 344.9 17.7M332.0 16.0L332.6 23.5 332.6 29.2M23.6 460.0L27.0 456.8 28.5 455.4M23.6 460.0L20.9 458.8 16.3 460.0M23.6 460.0L27.5 463.5 29.3 466.1M186.3 237.9L190.4 237.0 198.0 235.8M186.3 237.9L181.1 237.4 173.9 236.6M186.3 237.9L184.1 231.2 179.6 226.6M231.3 54.5L222.3 56.6 213.1 52.5M192.4 336.6L190.4 342.7 186.2 345.9M192.4 336.6L196.5 343.4 202.0 347.4M192.4 336.6L199.8 334.0 206.9 333.4M256.1 207.7L263.1 208.1 267.5 212.8M256.1 207.7L260.6 202.6 265.9 198.4M256.1 207.7L249.7 216.9 245.6 222.2M325.6 113.7L317.1 113.2 313.1 113.9M325.6 113.7L334.4 117.4 338.5 116.6M325.6 113.7L329.1 107.7 328.9 99.7M325.6 113.7L320.9 104.9 312.8 102.1M42.0 453.3L45.6 451.9 48.7 451.9M42.0 453.3L39.5 454.6 35.4 455.3M42.0 453.3L40.4 457.5 40.2 460.2M260.4 318.6L252.1 321.7 248.4 329.6M334.3 88.5L329.4 93.8 328.9 99.7M334.3 88.5L335.6 95.5 341.3 100.6M103.8 498.5L104.4 502.5 105.8 504.9M103.8 498.5L103.6 494.9 101.6 491.6M103.8 498.5L107.7 495.4 108.8 492.6M113.8 210.7L113.4 215.3 114.6 217.6M113.8 210.7L109.7 212.5 105.2 214.8M274.9 43.2L273.7 48.5 274.7 55.0M274.9 43.2L281.8 42.7 286.8 45.5M274.9 43.2L274.6 33.3 275.8 27.3M274.9 43.2L279.4 50.5 286.3 59.8M29.5 341.0L29.0 337.4 28.4 334.1M29.5 341.0L32.3 342.9 34.3 346.7M29.5 341.0L25.8 342.5 22.8 345.9M241.6 317.5L243.8 325.2 248.4 329.6M160.5 238.4L153.5 235.8 147.9 236.7M160.5 238.4L165.3 239.4 173.9 236.6M86.3 168.4L90.2 169.8 95.4 170.9M86.3 168.4L81.9 173.1 78.4 176.2M341.3 100.6L337.0 100.0 328.9 99.7M341.3 100.6L350.8 100.4 355.3 97.3M183.9 123.9L182.9 127.9 181.5 136.0M183.9 123.9L192.9 125.1 197.5 121.2M183.9 123.9L179.0 129.1 170.5 132.6M183.9 123.9L176.6 118.9 170.0 113.7M138.7 274.7L132.0 273.6 128.3 273.9M138.7 274.7L136.5 281.1 137.6 285.8M138.7 274.7L144.7 279.3 148.6 280.3M185.4 181.6L186.9 189.6 185.5 193.7M185.4 181.6L182.7 173.3 182.2 167.3M185.4 181.6L175.1 180.2 168.9 179.1M185.4 181.6L175.2 188.9 170.8 191.2M34.3 444.2L37.0 442.8 38.9 439.1M34.3 444.2L30.5 447.1 28.0 448.0M34.3 444.2L31.6 440.6 25.7 438.8M303.2 145.1L299.2 146.5 290.9 149.7M303.2 145.1L312.7 147.0 320.7 147.8M303.2 145.1L298.6 139.9 287.7 136.0M344.4 29.5L343.4 24.6 344.9 17.7M344.4 29.5L336.6 31.2 332.6 29.2M344.4 29.5L347.5 31.4 354.7 35.5M87.5 333.6L87.0 337.3 85.7 340.3M87.5 333.6L91.1 335.3 94.3 337.0M87.5 333.6L86.4 329.3 83.4 327.1M119.3 64.2L112.8 60.4 100.9 55.5M119.3 64.2L122.1 55.9 130.9 45.4M153.5 366.8L148.9 365.8 142.3 364.3M153.5 366.8L152.8 359.9 148.3 355.2M153.5 366.8L156.0 371.6 154.0 381.1M135.2 197.4L140.0 197.3 145.8 194.1M135.2 197.4L134.2 201.4 132.7 210.1M103.5 177.7L99.4 175.4 95.4 170.9M103.5 177.7L109.5 176.2 114.8 178.6M157.1 178.6L152.6 180.2 150.0 184.9M157.1 178.6L156.3 182.6 157.5 190.2M157.1 178.6L162.6 179.4 168.9 179.1M170.8 191.2L171.3 183.8 168.9 179.1M170.8 191.2L162.7 191.1 157.5 190.2M170.8 191.2L176.4 194.6 185.5 193.7M79.1 282.6L82.5 282.8 86.7 282.4M79.1 282.6L75.5 284.0 71.4 285.0M79.1 282.6L81.5 277.8 80.9 274.3M79.1 282.6L79.6 288.4 81.1 291.4M70.7 383.9L73.1 388.2 73.6 391.0M70.7 383.9L74.6 383.3 80.0 379.7M70.7 383.9L67.7 387.5 66.7 394.2M0.2 257.6L-0.7 260.6 -2.3 266.1M0.2 257.6L0.5 253.6 -1.9 247.5M0.2 257.6L2.5 256.3 8.6 251.6M0.2 257.6L7.5 258.4 11.4 259.2M238.7 284.5L245.5 283.5 250.5 284.3M238.7 284.5L241.5 291.2 240.4 296.9M238.7 284.5L233.3 281.0 226.2 275.4M55.8 377.1L57.2 372.8 58.7 370.5M55.8 377.1L51.9 378.9 49.8 381.9M286.6 117.4L294.5 116.3 300.8 111.7M286.6 117.4L282.7 111.7 278.0 104.6M286.6 117.4L276.2 114.0 269.0 115.5M286.6 117.4L280.4 123.4 275.8 132.2M90.7 387.2L88.5 386.0 83.9 385.6M90.7 387.2L95.9 384.5 98.2 384.2M90.7 387.2L95.2 392.3 96.5 394.2M170.2 165.3L175.3 166.9 182.2 167.3M170.2 165.3L169.0 170.3 168.9 179.1M215.6 268.9L211.5 266.1 203.8 265.2M215.6 268.9L222.5 270.5 226.2 275.4M215.6 268.9L213.5 276.3 214.2 282.6M182.1 65.9L191.5 65.2 200.4 65.9M182.1 65.9L182.0 72.3 179.2 85.1M182.1 65.9L172.7 63.7 163.2 59.8M161.6 77.0L160.0 66.1 163.2 59.8M161.6 77.0L172.0 78.7 179.2 85.1M161.6 77.0L169.4 71.3 182.1 65.9M161.6 77.0L149.5 78.6 138.5 82.3M123.5 493.3L122.3 489.1 122.9 486.1M123.5 493.3L120.9 494.5 115.7 493.6M123.5 493.3L121.8 499.8 115.5 503.9M17.1 150.1L20.9 151.4 25.5 154.1M17.1 150.1L17.7 155.9 15.3 161.8M17.1 150.1L15.5 145.1 13.1 138.3M42.5 326.3L42.4 322.8 44.3 318.2M42.5 326.3L40.0 328.0 36.9 332.7M42.5 326.3L37.1 324.2 34.7 320.7M18.5 228.1L21.4 230.7 22.1 233.8M18.5 228.1L20.8 225.7 24.9 224.6M261.8 106.2L264.3 112.3 269.0 115.5M261.8 106.2L258.0 109.4 254.5 115.6M109.0 450.6L104.4 452.5 102.1 453.8M109.0 450.6L107.8 446.7 108.0 441.2M115.5 503.9L110.4 505.4 105.8 504.9M115.5 503.9L116.8 499.0 115.7 493.6M159.8 403.5L165.6 398.8 167.3 394.1M159.8 403.5L152.1 407.3 148.0 406.8M159.8 403.5L163.9 407.5 171.8 407.1M137.1 124.6L138.1 128.6 142.3 135.0M137.1 124.6L129.9 121.1 123.9 121.2M137.1 124.6L131.1 128.9 125.9 135.6M111.8 267.4L111.1 265.4 108.9 261.3M111.8 267.4L114.8 265.5 119.0 264.8M111.8 267.4L114.4 271.9 117.5 274.5M58.8 389.8L59.1 394.2 60.7 397.4M58.8 389.8L56.2 390.0 51.3 392.8M58.8 389.8L62.5 391.9 66.7 394.2M27.7 130.1L23.2 125.3 15.9 124.7M27.7 130.1L35.1 131.6 41.4 138.8M317.5 40.4L313.5 37.0 306.5 36.8M209.4 233.2L204.1 234.9 198.0 235.8M209.4 233.2L211.6 225.3 214.4 221.7M209.4 233.2L218.5 232.9 223.0 234.0M367.6 98.2L370.8 93.9 369.7 86.3M367.6 98.2L363.3 95.8 355.3 97.3M367.6 98.2L367.5 105.4 369.2 113.2M367.6 98.2L375.6 99.8 384.3 96.2M238.3 262.8L243.4 257.9 248.4 256.4M238.3 262.8L242.3 269.0 250.0 271.9M62.0 421.8L66.0 419.4 68.7 419.3M62.0 421.8L60.9 426.3 59.3 428.5M62.0 421.8L62.0 419.4 60.3 414.8M132.3 151.3L133.8 155.3 136.7 160.8M132.3 151.3L137.6 153.8 145.2 153.7M38.3 194.6L42.2 191.7 47.2 185.6M38.3 194.6L30.8 197.2 25.1 197.4M38.3 194.6L31.9 192.7 26.3 186.9M-4.4 185.7L-3.7 188.9 -3.9 195.3M-4.4 185.7L-4.3 177.7 -4.6 172.9M-4.4 185.7L4.4 181.0 9.6 179.3M-4.4 185.7L1.0 193.2 8.1 199.2M161.8 270.1L155.3 268.2 152.4 263.5M161.8 270.1L167.0 272.4 172.9 279.6M126.3 165.1L121.9 164.5 117.0 160.1M126.3 165.1L131.2 161.1 136.7 160.8M324.3 161.0L316.0 165.2 312.2 165.9M324.3 161.0L324.8 155.4 320.7 147.8M324.3 161.0L327.3 156.9 333.6 148.2M367.9 37.9L365.4 44.4 364.3 49.2M367.9 37.9L372.8 40.1 378.8 44.2M367.9 37.9L363.1 35.1 354.7 35.5M367.9 37.9L370.2 32.1 374.3 25.5M72.2 198.8L72.3 204.2 69.1 207.5M72.2 198.8L76.4 195.1 77.7 191.1M72.2 198.8L66.9 196.1 65.0 192.2M175.9 27.7L170.1 21.6 166.0 12.9M178.3 -2.0L172.9 7.6 166.0 12.9M-1.5 161.8L0.7 158.9 3.8 154.4M-1.5 161.8L2.7 166.4 6.8 169.5M-1.5 161.8L-2.7 168.2 -4.6 172.9M146.4 327.7L142.6 326.3 138.2 321.8M146.4 327.7L150.2 325.6 157.6 322.1M151.1 249.7L145.0 247.7 140.0 248.0M151.1 249.7L149.7 244.4 147.9 236.7M54.8 360.3L51.2 357.1 48.8 354.7M54.8 360.3L59.4 363.0 63.1 364.8M276.6 92.7L277.5 98.3 278.0 104.6M46.7 495.3L41.7 495.5 39.0 493.9M46.7 495.3L47.9 493.3 51.1 488.8M46.7 495.3L50.9 495.6 54.9 496.6M52.0 459.2L54.5 461.1 56.6 463.8M52.0 459.2L51.1 462.7 50.2 466.0M52.0 459.2L51.4 456.4 48.7 451.9M52.0 459.2L58.6 459.7 63.1 461.2M246.1 127.2L245.4 121.7 242.2 115.4M246.1 127.2L251.6 122.9 254.5 115.6M246.1 127.2L249.0 133.8 249.8 142.8M46.1 418.0L43.3 421.0 42.2 424.7M46.1 418.0L50.0 418.4 53.8 416.8M46.1 418.0L43.3 417.2 37.9 416.0M100.1 287.7L99.6 290.4 98.7 294.4M100.1 287.7L97.2 286.9 94.3 283.7M369.7 86.3L373.8 86.0 381.6 83.9M290.9 149.7L282.9 150.9 277.4 149.0M290.9 149.7L290.3 142.8 287.7 136.0M164.4 297.2L163.5 306.2 164.3 312.6M164.4 297.2L171.8 304.8 175.7 307.7M357.3 -1.5L356.3 3.2 359.4 11.0M81.2 232.9L84.6 233.8 88.0 232.7M81.2 232.9L80.3 237.5 81.0 240.0M81.2 232.9L75.4 234.3 71.4 237.8M55.3 190.5L54.8 194.9 55.8 199.6M55.3 190.5L52.6 188.1 47.2 185.6M55.3 190.5L60.6 192.1 65.0 192.2M55.3 190.5L55.9 183.3 55.0 179.8M227.5 126.8L223.4 125.3 217.3 119.7M227.5 126.8L229.3 122.2 230.5 114.1M227.5 126.8L226.2 133.1 224.1 142.6M283.3 9.7L288.4 7.1 292.5 2.0M283.3 9.7L278.6 12.9 271.5 14.9M283.3 9.7L291.0 12.7 296.6 17.0M296.6 65.1L292.5 60.5 286.3 59.8M296.6 65.1L288.9 68.8 286.1 76.7M296.6 65.1L303.2 70.4 312.0 71.8M204.7 203.5L199.9 204.0 192.8 205.9M204.7 203.5L203.5 194.7 201.0 190.7M176.9 215.2L176.7 209.6 180.5 204.2M176.9 215.2L179.3 219.1 179.6 226.6M176.9 215.2L183.1 217.0 188.6 219.2M176.9 215.2L186.5 210.9 192.8 205.9M333.6 148.2L327.5 146.1 320.7 147.8M333.6 148.2L332.6 142.7 331.5 131.4M261.2 26.2L268.4 25.9 275.8 27.3M261.2 26.2L266.2 19.3 271.5 14.9M261.2 26.2L254.0 20.0 248.6 14.4M219.7 195.9L215.4 186.7 216.4 181.0M219.7 195.9L221.6 203.8 220.3 211.2M13.7 350.7L15.4 353.3 18.6 355.0M13.7 350.7L10.7 350.5 6.0 352.5M230.5 114.1L235.2 116.8 242.2 115.4M230.5 114.1L223.2 117.4 217.3 119.7M91.4 377.5L95.4 376.0 98.1 374.1M91.4 377.5L93.5 374.3 92.7 368.7M91.4 377.5L96.1 379.6 98.2 384.2M35.0 401.2L38.1 403.0 40.7 405.3M35.0 401.2L39.4 400.5 41.8 398.7M35.0 401.2L33.9 398.5 35.7 393.1M46.6 269.0L45.2 272.4 43.9 275.1M46.6 269.0L50.0 267.6 53.5 267.4M101.5 145.3L104.9 150.0 108.9 154.9M101.5 145.3L102.8 154.1 100.3 160.0M101.5 145.3L110.4 142.8 114.6 137.9M4.2 456.3L0.8 455.1 -2.3 453.6M4.2 456.3L8.5 455.0 11.9 455.2M4.2 456.3L6.1 460.6 9.4 462.6M130.7 248.7L127.3 249.3 123.8 250.3M130.7 248.7L126.9 244.6 123.2 243.5M130.7 248.7L135.8 247.7 140.0 248.0M77.5 446.8L78.8 442.1 82.4 440.1M77.5 446.8L74.6 445.3 71.2 440.6M315.9 60.0L313.7 65.5 312.0 71.8M315.9 60.0L322.5 56.6 327.8 53.4M160.2 333.6L157.1 326.7 157.6 322.1M160.2 333.6L166.5 330.0 173.4 330.5M160.2 333.6L152.7 330.9 146.4 327.7M116.5 322.1L118.2 319.7 120.8 316.8M116.5 322.1L117.8 324.8 118.0 328.8M191.2 264.2L186.1 266.3 180.6 270.3M191.2 264.2L199.4 265.8 203.8 265.2M191.2 264.2L189.3 258.8 184.1 251.7M104.7 406.9L105.2 404.7 107.6 400.7M104.7 406.9L101.8 409.9 101.4 413.5M104.7 406.9L106.8 411.6 108.4 413.8M104.7 406.9L100.4 404.3 98.7 401.5M117.5 274.5L115.9 276.5 113.7 280.6M117.5 274.5L119.0 276.6 122.1 281.3M75.2 455.6L73.5 451.8 68.9 449.6M75.2 455.6L76.0 451.3 77.5 446.8M302.7 260.2L299.0 264.8 293.4 271.4M302.7 260.2L293.3 252.4 288.7 246.5M424.8 80.3L430.9 81.8 436.5 82.4M424.8 80.3L426.8 88.2 425.5 92.9M97.8 243.9L94.2 241.0 92.1 240.1M97.8 243.9L98.0 240.7 97.6 236.0M97.8 243.9L95.7 247.4 95.9 251.5M91.1 291.1L91.6 295.1 90.4 298.8M91.1 291.1L93.8 287.9 94.3 283.7M-1.9 247.5L1.6 244.0 5.3 238.9M-1.9 247.5L1.5 248.7 8.6 251.6M188.6 219.2L183.3 224.9 179.6 226.6M250.0 271.9L255.0 268.6 259.5 264.5M250.0 271.9L248.2 279.8 250.5 284.3M351.8 113.5L342.8 114.1 338.5 116.6M351.8 113.5L344.1 108.2 341.3 100.6M351.8 113.5L353.9 103.5 355.3 97.3M56.8 151.4L53.8 156.5 52.5 160.4M56.8 151.4L56.7 145.5 55.6 140.0M56.8 151.4L61.4 148.0 67.5 146.2M111.0 295.5L109.5 298.9 110.4 302.2M111.0 295.5L115.6 295.5 118.1 293.2M63.0 348.5L63.8 345.1 64.0 341.7M63.0 348.5L63.3 352.8 64.3 355.4M63.0 348.5L58.7 349.2 54.1 350.7M63.0 348.5L69.2 346.5 71.7 342.8M17.9 203.1L17.6 206.3 15.6 211.9M17.9 203.1L20.1 200.6 25.1 197.4M17.9 203.1L21.1 205.8 26.6 206.6M156.5 102.3L149.6 107.1 145.6 108.1M156.5 102.3L162.3 108.9 170.0 113.7M213.7 385.1L215.0 376.3 221.5 372.6M440.7 65.0L432.0 65.8 424.7 61.1M440.7 65.0L438.7 59.1 432.5 49.9M440.7 65.0L437.9 72.2 436.5 82.4M7.9 114.9L10.8 118.3 15.9 124.7M7.9 114.9L2.9 110.5 -1.9 106.6M169.6 144.7L169.9 139.0 170.5 132.6M169.6 144.7L163.0 146.8 160.0 153.2M242.2 115.4L248.2 115.6 254.5 115.6M242.2 115.4L233.6 120.7 227.5 126.8M156.3 164.9L159.2 158.4 160.0 153.2M156.3 164.9L156.3 169.3 157.1 178.6M8.1 199.2L14.2 202.0 17.9 203.1M8.1 199.2L0.7 201.3 -2.4 206.0M73.9 275.2L77.1 274.7 80.9 274.3M73.9 275.2L71.3 274.1 65.8 272.2M73.9 275.2L76.7 278.0 79.1 282.6M88.0 232.7L89.5 229.0 89.5 224.4M131.0 222.1L126.4 218.3 123.7 216.6M131.0 222.1L128.5 226.0 122.6 226.5M384.3 96.2L381.9 91.6 381.6 83.9M384.3 96.2L388.6 89.7 392.8 86.9M384.3 96.2L382.3 105.1 381.5 110.7M305.9 178.3L313.8 178.6 318.1 177.5M305.9 178.3L309.3 183.4 312.1 189.2M305.9 178.3L309.4 174.3 312.2 165.9M316.8 129.4L308.5 129.7 304.6 126.7M316.8 129.4L326.7 131.0 331.5 131.4M316.8 129.4L313.4 123.2 313.1 113.9M404.5 0.6L398.3 0.5 391.7 -2.0M404.5 0.6L411.0 -0.2 420.9 -2.2M404.5 0.6L409.1 7.9 417.4 12.7M28.0 448.0L29.0 451.3 28.5 455.4M28.0 448.0L25.5 442.1 25.7 438.8M138.6 390.0L134.4 390.0 128.8 391.1M138.6 390.0L144.3 388.7 149.7 390.3M170.0 113.7L161.3 119.1 157.2 124.7M132.7 210.1L127.5 208.9 123.6 207.4M132.7 210.1L130.0 214.9 123.7 216.6M132.7 210.1L133.6 216.0 131.0 222.1M88.8 347.7L92.5 348.2 96.0 347.4M88.8 347.7L87.5 352.4 86.6 355.1M88.8 347.7L86.3 342.8 85.7 340.3M88.8 347.7L85.1 348.4 80.7 346.6M185.5 193.7L183.4 199.6 180.5 204.2M185.5 193.7L187.5 199.1 192.8 205.9M17.5 189.0L20.4 187.8 26.3 186.9M17.5 189.0L20.4 193.9 25.1 197.4M17.5 189.0L13.4 184.0 9.6 179.3M140.0 248.0L139.1 253.2 135.2 257.9M140.0 248.0L142.2 242.8 147.9 236.7M173.9 236.6L174.9 231.9 179.6 226.6M173.9 236.6L170.5 242.8 170.7 248.5M66.2 335.2L66.0 338.7 64.0 341.7M66.2 335.2L69.1 336.0 73.6 334.3M66.2 335.2L66.0 330.6 66.3 326.8M66.2 335.2L62.1 335.1 57.5 335.9M146.2 209.2L144.8 212.5 145.9 218.4M146.2 209.2L137.5 207.9 132.7 210.1M146.2 209.2L146.3 202.3 145.8 194.1M58.9 292.4L61.7 293.1 66.1 294.0M58.9 292.4L55.7 293.5 52.6 296.4M58.9 292.4L58.5 288.3 58.4 284.9M15.0 247.2L16.4 248.8 20.1 251.2M15.0 247.2L17.0 244.1 18.2 241.0M257.7 233.4L262.8 227.5 266.5 225.2M109.7 336.7L111.3 338.6 114.9 341.5M109.7 336.7L105.6 336.9 101.1 335.7M109.7 336.7L111.5 331.3 110.6 327.7M109.7 336.7L104.9 339.3 102.4 343.5M131.0 177.0L135.2 179.6 140.6 181.1M131.0 177.0L132.7 182.2 132.4 187.9M131.0 177.0L126.6 178.7 122.2 184.0M131.0 177.0L126.9 169.3 126.3 165.1M300.8 111.7L308.4 111.3 313.1 113.9M133.2 361.6L137.0 364.1 142.3 364.3M133.2 361.6L129.2 359.1 124.6 357.4M62.9 312.6L62.8 310.3 62.8 305.8M62.9 312.6L63.4 317.4 64.3 319.9M62.9 312.6L61.2 314.4 56.8 317.6M214.2 282.6L210.3 285.1 205.5 291.8M138.5 82.3L130.2 84.5 122.0 87.8M138.5 82.3L130.2 69.0 119.3 64.2M36.7 355.8L40.0 357.7 41.9 362.7M36.7 355.8L34.2 358.9 32.3 363.2M36.7 355.8L35.9 351.7 34.3 346.7M41.5 224.4L38.2 225.1 33.7 228.1M41.5 224.4L38.9 219.3 37.2 216.8M41.5 224.4L42.4 228.8 44.7 233.2M64.3 439.6L68.0 439.0 71.2 440.6M64.3 439.6L62.2 444.0 59.4 447.7M64.3 439.6L67.3 435.8 69.9 430.2M64.3 439.6L68.1 443.9 68.9 449.6M106.0 253.4L107.4 257.8 108.9 261.3M106.0 253.4L102.4 258.7 100.6 260.8M106.0 253.4L100.6 254.3 95.9 251.5M47.2 185.6L52.0 182.0 55.0 179.8M304.2 207.6L298.8 205.7 292.5 204.0M304.2 207.6L301.6 213.2 294.7 217.5M304.2 207.6L302.0 198.7 301.2 194.0M304.2 207.6L303.4 214.3 305.3 225.2M12.3 360.2L15.9 358.8 18.6 355.0M12.3 360.2L6.9 361.0 3.0 360.3M12.3 360.2L12.7 356.0 13.7 350.7M12.3 360.2L10.2 356.3 6.0 352.5M119.7 193.3L119.8 190.1 122.2 184.0M119.7 193.3L115.5 191.2 108.7 189.1M119.7 193.3L113.4 196.1 107.3 198.4M119.7 193.3L125.4 191.3 132.4 187.9M355.7 66.2L363.6 66.8 367.8 65.4M213.1 52.5L209.6 57.4 200.4 65.9M275.8 132.2L270.3 133.2 263.7 130.8M275.8 132.2L282.3 134.3 287.7 136.0M275.8 132.2L267.5 138.6 262.6 142.3M275.8 132.2L276.9 140.3 277.4 149.0M157.2 124.7L162.0 128.6 170.5 132.6M82.4 440.1L79.4 438.0 77.0 435.8M16.3 275.7L18.2 278.8 22.1 281.0M16.3 275.7L12.4 277.3 8.9 281.1M116.6 477.3L115.2 479.3 114.1 483.7M116.6 477.3L113.1 475.8 110.0 475.0M154.0 381.1L153.4 384.4 149.7 390.3M154.0 381.1L160.9 380.2 165.1 379.4M154.0 381.1L150.0 380.6 141.7 376.0M300.9 82.0L308.1 76.3 312.0 71.8M300.9 82.0L293.9 77.8 286.1 76.7M38.4 64.2L59.0 73.4 73.6 70.0M114.9 341.5L113.2 343.8 110.8 347.1M114.9 341.5L119.7 339.2 122.2 335.9M42.2 424.7L45.4 428.4 49.4 429.1M42.2 424.7L38.9 424.4 33.4 420.9M305.3 225.2L299.7 220.2 294.7 217.5M305.3 225.2L309.8 231.7 314.4 235.8M305.3 225.2L298.9 231.6 293.0 233.3M264.5 287.3L269.9 286.0 276.9 286.8M264.5 287.3L255.6 287.3 250.5 284.3M264.5 287.3L264.7 296.4 268.2 302.0M264.5 287.3L264.6 281.6 268.5 272.2M415.7 68.9L408.9 70.2 404.7 72.8M415.7 68.9L420.1 67.1 424.7 61.1M415.7 68.9L412.3 77.3 411.9 82.7M47.9 503.8L52.7 503.0 56.2 504.0M47.9 503.8L47.2 500.3 46.7 495.3M6.8 169.5L9.3 175.5 9.6 179.3M6.8 169.5L12.5 165.4 15.3 161.8M6.8 169.5L1.2 172.9 -4.6 172.9M22.9 502.7L25.6 500.8 29.1 500.7M22.9 502.7L22.4 497.2 24.5 493.0M22.9 502.7L18.0 501.1 14.6 496.7M80.1 336.9L82.0 338.0 85.7 340.3M80.1 336.9L75.8 335.9 73.6 334.3M80.1 336.9L84.6 334.5 87.5 333.6M145.2 153.7L141.1 158.3 136.7 160.8M56.8 317.6L59.5 318.8 64.3 319.9M184.1 415.7L186.6 413.5 192.7 408.1M184.1 415.7L179.9 411.6 171.8 407.1M184.1 415.7L182.1 410.8 180.6 400.3M148.3 355.2L146.9 359.3 142.3 364.3M148.3 355.2L141.3 353.5 134.4 348.9M181.5 136.0L176.3 133.5 170.5 132.6M123.9 350.7L123.6 353.8 124.6 357.4M123.9 350.7L119.6 352.6 116.1 353.9M399.2 120.6L395.6 115.1 394.6 109.0M399.2 120.6L403.4 114.7 407.6 111.1M399.2 120.6L395.2 124.8 385.4 131.0M399.2 120.6L386.9 113.6 381.5 110.7M182.2 167.3L181.1 160.4 182.4 154.9M182.2 167.3L187.6 167.7 194.4 164.2M35.4 455.3L37.5 458.2 40.2 460.2M35.4 455.3L31.1 455.9 28.5 455.4M35.4 455.3L32.3 450.5 28.0 448.0M30.4 178.7L28.7 184.0 26.3 186.9M30.4 178.7L36.1 178.7 39.3 176.6M30.4 178.7L26.2 175.4 19.6 170.7M204.4 177.7L211.0 181.1 216.4 181.0M204.4 177.7L204.4 186.0 201.0 190.7M173.4 330.5L175.2 340.4 174.1 345.6M173.4 330.5L177.2 324.1 186.7 322.1M89.7 503.7L88.5 502.0 84.9 498.0M89.7 503.7L92.9 505.3 98.2 504.4M89.7 503.7L93.0 497.7 93.3 495.1M85.7 182.0L80.9 178.6 78.4 176.2M85.7 182.0L80.0 187.5 77.7 191.1M66.3 326.8L66.1 322.9 64.3 319.9M66.3 326.8L62.1 328.1 58.0 326.8M44.7 233.2L47.3 234.9 49.0 238.3M44.7 233.2L44.1 235.3 41.2 239.3M-2.8 436.2L-1.7 433.1 -0.5 429.6M-2.8 436.2L2.8 436.7 6.2 437.6M-2.8 436.2L-3.7 441.9 -1.2 447.0M46.9 284.7L42.6 283.4 39.8 283.7M46.9 284.7L48.7 279.9 50.8 277.7M46.9 284.7L43.6 289.4 42.1 292.3M224.1 142.6L220.0 140.2 212.8 139.5M224.1 142.6L229.6 142.3 236.1 145.5M224.1 142.6L228.1 151.2 229.2 155.2M89.5 224.4L94.0 223.9 96.7 225.0M89.5 224.4L87.1 223.6 82.8 221.4M89.5 224.4L92.3 220.6 92.6 217.0M378.8 44.2L376.5 48.9 377.1 58.0M378.8 44.2L382.8 39.7 389.7 35.4M378.5 70.4L373.2 66.9 367.8 65.4M378.5 70.4L376.3 65.8 377.1 58.0M378.5 70.4L379.6 77.9 381.6 83.9M378.5 70.4L386.7 70.8 393.1 74.4M175.7 307.7L181.8 310.3 187.8 310.6M175.7 307.7L171.8 309.9 164.3 312.6M175.7 307.7L183.9 314.5 186.7 322.1M60.3 414.8L57.4 414.9 53.8 416.8M60.3 414.8L64.6 412.6 68.8 411.0M61.5 265.6L63.8 264.6 67.7 262.5M61.5 265.6L64.0 269.6 65.8 272.2M61.5 265.6L57.2 267.5 53.5 267.4M41.1 466.9L39.8 462.8 40.2 460.2M41.1 466.9L45.8 466.9 50.2 466.0M41.1 466.9L45.0 471.3 48.4 473.7M12.7 423.7L14.6 424.5 18.6 426.5M12.7 423.7L10.1 426.8 6.6 429.1M12.7 423.7L16.6 420.5 19.3 418.1M18.2 264.0L14.2 262.2 11.4 259.2M18.2 264.0L25.0 263.3 29.8 262.9M18.2 264.0L17.9 268.7 16.3 275.7M160.0 153.2L154.7 151.7 145.2 153.7M160.0 153.2L159.6 145.9 157.1 138.3M105.1 130.2L105.9 123.4 107.7 118.8M105.1 130.2L109.3 133.7 114.6 137.9M105.1 130.2L105.0 138.2 101.5 145.3M135.0 415.2L131.4 415.4 125.7 417.6M135.0 415.2L139.9 414.6 144.8 416.4M135.0 415.2L135.3 421.2 137.8 424.8M135.0 415.2L128.2 414.0 122.1 408.3M15.9 386.3L12.6 388.0 7.7 386.9M15.9 386.3L17.7 390.9 20.1 393.5M15.9 386.3L15.5 381.9 18.2 377.0M15.9 386.3L19.9 385.8 25.9 386.2M11.9 314.2L10.3 311.5 7.6 309.2M11.9 314.2L14.6 310.0 17.4 308.0M11.9 314.2L16.0 317.6 18.6 321.9M43.9 156.0L44.8 162.0 43.3 165.3M43.9 156.0L48.1 158.7 52.5 160.4M43.9 156.0L51.1 154.1 56.8 151.4M46.4 443.5L48.2 442.2 51.5 438.7M46.4 443.5L43.8 441.7 38.9 439.1M46.4 443.5L49.1 449.2 48.7 451.9M167.3 394.1L171.7 388.9 176.1 387.2M167.3 394.1L169.0 400.8 171.8 407.1M66.1 294.0L69.5 295.9 73.3 296.9M66.1 294.0L61.6 296.7 58.6 300.1M64.9 171.5L65.0 165.5 63.3 161.5M64.9 171.5L71.7 168.1 74.8 166.4M64.9 171.5L60.1 174.6 55.0 179.8M109.4 369.1L112.8 369.1 116.2 370.6M109.4 369.1L109.0 374.0 108.1 377.0M109.4 369.1L107.5 365.8 106.3 359.9M109.4 369.1L104.5 367.0 99.4 367.1M19.3 418.1L21.9 419.1 25.7 420.4M19.3 418.1L20.5 423.2 18.6 426.5M19.3 418.1L22.7 415.3 24.2 411.1M187.8 310.6L187.7 317.9 186.7 322.1M187.8 310.6L193.4 308.0 200.1 303.0M334.2 43.1L330.3 46.9 327.8 53.4M334.2 43.1L339.2 45.2 346.5 43.8M6.0 352.5L2.3 351.7 -0.4 351.7M81.1 267.7L80.2 271.6 80.9 274.3M81.1 267.7L77.6 265.8 75.9 262.2M81.1 267.7L78.9 272.4 73.9 275.2M123.9 121.2L119.8 113.6 115.5 109.7M114.6 137.9L120.8 135.1 125.9 135.6M114.6 137.9L114.4 145.3 118.8 150.6M116.9 254.3L120.8 253.4 123.8 250.3M116.9 254.3L113.7 258.8 108.9 261.3M268.5 272.2L276.2 271.6 279.8 274.6M268.5 272.2L265.9 266.6 259.5 264.5M96.7 225.0L100.6 226.1 102.2 229.1M96.7 225.0L95.2 220.7 92.6 217.0M96.7 225.0L99.9 224.1 106.4 221.7M248.7 171.0L241.7 167.1 238.4 164.8M248.7 171.0L258.3 174.2 261.8 182.9M248.7 171.0L249.3 177.3 247.4 188.7M248.7 171.0L239.0 175.0 230.7 173.8M40.4 478.1L42.8 480.7 45.5 483.0M40.4 478.1L45.1 474.7 48.4 473.7M40.4 478.1L40.8 481.3 38.1 487.0M290.3 27.3L292.9 21.8 296.6 17.0M290.3 27.3L282.0 25.2 275.8 27.3M290.3 27.3L297.6 23.6 305.8 24.2M3.6 286.3L-0.8 288.2 -3.0 289.1M3.6 286.3L5.0 283.2 8.9 281.1M230.7 173.8L233.9 168.9 238.4 164.8M230.7 173.8L224.2 171.2 219.9 167.7M230.7 173.8L224.2 176.4 216.4 181.0M212.1 30.8L215.4 23.7 212.7 13.8M212.1 30.8L209.2 38.8 213.1 52.5M1.0 6.6L-1.9 38.9 -1.3 60.5M1.0 6.6L38.9 -2.1 62.0 -2.2M1.0 6.6L31.0 23.6 38.4 64.2M143.3 170.0L140.2 165.5 136.7 160.8M143.3 170.0L142.3 176.3 140.6 181.1M143.3 170.0L147.6 167.8 156.3 164.9M143.3 170.0L134.8 171.8 131.0 177.0M-3.2 389.7L-3.7 394.6 -4.2 397.1M-3.2 389.7L1.6 388.0 7.7 386.9M97.1 447.7L100.9 450.9 102.1 453.8M97.1 447.7L98.3 444.3 98.6 439.3M97.1 447.7L96.8 452.2 95.7 457.1M105.8 238.6L108.1 240.0 110.8 243.8M105.8 238.6L100.2 238.7 97.6 236.0M98.9 329.6L100.9 332.5 101.1 335.7M98.9 329.6L95.7 328.7 91.7 326.8M108.9 261.3L105.2 262.5 100.6 260.8M25.9 386.2L27.4 389.8 28.4 394.0M25.9 386.2L22.6 388.6 20.1 393.5M52.0 342.0L55.1 338.2 57.5 335.9M52.0 342.0L54.1 347.6 54.1 350.7M52.0 342.0L52.4 335.6 52.3 331.5M148.8 15.6L158.7 13.8 166.0 12.9M148.8 15.6L145.6 22.9 145.2 34.6M148.8 15.6L151.1 8.6 156.4 -4.5M148.8 15.6L158.7 30.3 161.7 41.1M63.3 161.5L57.6 161.5 52.5 160.4M63.3 161.5L60.3 155.7 56.8 151.4M249.8 142.8L240.7 143.7 236.1 145.5M200.1 303.0L206.5 303.5 212.3 302.8M200.1 303.0L204.6 310.5 206.1 313.8M200.1 303.0L201.7 296.1 205.5 291.8M90.4 404.8L87.6 404.8 83.9 405.2M90.4 404.8L92.7 405.8 96.7 408.0M90.4 404.8L95.3 404.0 98.7 401.5M-3.1 147.9L-1.2 149.8 3.8 154.4M-3.1 147.9L0.0 155.1 -1.5 161.8M-3.1 147.9L1.8 141.9 13.1 138.3M206.1 313.8L204.8 320.7 200.1 323.9M206.1 313.8L209.7 317.5 215.4 321.6M180.6 270.3L178.9 276.1 172.9 279.6M180.6 270.3L179.4 263.8 173.8 259.6M407.6 111.1L412.1 109.1 419.6 111.2M407.6 111.1L403.0 110.5 394.6 109.0M393.1 74.4L397.6 73.8 404.7 72.8M393.1 74.4L390.9 82.2 392.8 86.9M393.1 74.4L385.7 81.4 381.6 83.9M34.3 346.7L38.9 344.6 41.4 343.4M148.6 280.3L142.7 282.0 137.6 285.8M148.6 280.3L155.6 282.2 162.2 285.2M148.6 280.3L144.7 284.7 141.2 294.1M113.0 288.0L109.2 285.7 106.6 284.5M113.0 288.0L116.6 291.8 118.1 293.2M113.0 288.0L113.1 283.6 113.7 280.6M31.1 248.2L28.5 251.8 27.5 254.3M31.1 248.2L33.5 245.9 38.0 245.4M31.1 248.2L29.5 242.4 26.9 239.0M220.3 211.2L216.3 218.1 214.4 221.7M219.9 167.7L216.9 175.5 216.4 181.0M219.9 167.7L226.1 159.9 229.2 155.2M101.5 467.2L102.9 470.5 102.1 475.7M101.5 467.2L96.8 469.9 91.8 470.0M19.5 336.3L17.7 332.6 18.4 329.4M19.5 336.3L15.1 333.7 13.0 333.0M19.5 336.3L14.8 337.7 12.5 340.5M19.5 336.3L24.1 335.4 28.4 334.1M75.0 350.3L76.9 347.3 80.7 346.6M75.0 350.3L75.6 354.8 76.0 357.2M274.7 55.0L278.5 59.0 286.3 59.8M274.7 55.0L275.7 64.7 273.2 70.0M75.6 326.2L77.0 322.8 76.8 318.7M75.6 326.2L78.4 326.0 83.4 327.1M75.6 326.2L74.6 329.7 73.6 334.3M75.6 326.2L71.8 325.3 66.3 326.8M142.3 135.0L131.7 133.0 125.9 135.6M6.2 437.6L9.3 437.1 12.9 434.4M6.2 437.6L6.4 433.0 6.6 429.1M234.7 235.5L229.1 234.4 223.0 234.0M234.7 235.5L238.6 238.4 247.2 244.8M234.7 235.5L232.9 241.8 234.9 251.1M81.1 291.4L81.1 294.6 83.3 298.5M81.1 291.4L75.7 293.4 73.3 296.9M100.3 160.0L104.8 158.5 108.9 154.9M100.3 160.0L96.3 163.5 95.4 170.9M152.4 263.5L147.8 261.4 143.4 262.6M97.6 236.0L94.9 238.8 92.1 240.1M97.6 236.0L99.1 232.7 102.2 229.1M58.7 276.1L61.8 273.3 65.8 272.2M58.7 276.1L54.3 276.7 50.8 277.7M58.7 276.1L59.3 281.8 58.4 284.9M58.7 276.1L63.3 277.9 65.2 282.2M91.0 439.3L96.0 440.0 98.6 439.3M91.0 439.3L87.5 440.9 82.4 440.1M91.0 439.3L91.9 433.5 92.5 430.8M107.6 400.7L110.9 400.3 114.3 397.3M107.6 400.7L104.3 401.3 98.7 401.5M128.8 391.1L125.2 391.3 121.2 391.9M128.8 391.1L124.7 386.3 122.3 384.2M198.0 235.8L201.6 244.2 201.2 249.7M198.0 235.8L201.5 228.2 201.1 221.5M-2.4 206.0L-4.7 199.7 -3.9 195.3M-2.4 206.0L-2.5 210.0 -2.9 218.4M79.9 463.7L79.5 469.1 77.9 472.1M79.9 463.7L75.4 464.9 71.4 467.4M17.3 292.6L20.5 291.9 23.9 291.6M17.3 292.6L18.1 288.4 16.9 285.6M17.3 292.6L14.8 291.2 9.9 291.3M17.3 292.6L19.0 295.5 18.5 301.1M122.1 408.3L119.3 408.1 115.3 407.0M122.1 408.3L124.5 405.4 124.5 401.3M122.1 408.3L117.2 412.2 115.2 414.7M110.8 243.8L111.3 238.9 113.0 235.6M110.8 243.8L107.5 247.4 106.0 253.4M86.6 355.1L87.1 357.3 89.6 362.2M441.1 105.9L435.9 109.0 433.6 115.7M441.1 105.9L438.8 100.0 441.1 93.1M441.1 105.9L431.2 98.2 425.5 92.9M91.8 311.6L93.6 314.4 95.5 317.9M91.8 311.6L93.9 308.5 94.8 304.9M91.8 311.6L88.9 309.3 86.1 304.8M58.7 490.4L62.7 492.2 64.9 493.5M58.7 490.4L59.1 487.8 61.6 484.0M58.7 490.4L57.2 493.1 54.9 496.6M58.7 490.4L54.4 489.4 51.1 488.8M145.9 218.4L148.9 221.4 149.0 227.5M145.9 218.4L136.9 221.7 131.0 222.1M312.8 102.1L311.0 106.3 313.1 113.9M312.8 102.1L304.6 106.1 300.8 111.7M18.6 426.5L19.8 428.4 22.9 432.5M-0.4 351.7L-3.5 348.6 -4.7 346.1M122.1 281.3L121.9 283.6 124.0 288.3M131.9 297.3L128.9 299.8 123.9 300.6M131.9 297.3L135.7 300.6 137.5 304.9M131.9 297.3L135.5 296.5 141.2 294.1M131.9 297.3L127.8 292.3 124.0 288.3M189.0 385.7L183.8 384.1 176.1 387.2M189.0 385.7L184.6 395.2 180.6 400.3M5.6 404.1L2.0 403.9 -0.8 405.8M5.6 404.1L6.1 400.2 8.4 395.5M5.6 404.1L10.3 405.8 13.5 408.9M417.4 12.7L414.8 19.6 415.5 24.3M417.4 12.7L422.2 14.9 426.9 20.6M417.4 12.7L418.5 3.4 420.9 -2.2M417.4 12.7L412.5 16.1 403.8 20.8M247.4 188.7L257.2 183.9 261.8 182.9M25.7 438.8L24.2 436.6 22.9 432.5M25.7 438.8L27.3 435.5 29.4 430.1M41.4 138.8L48.4 137.2 55.6 140.0M58.4 284.9L60.7 282.4 65.2 282.2M165.2 357.5L173.8 355.4 178.8 357.7M137.5 304.9L141.3 303.0 146.7 302.9M182.4 154.9L189.0 153.3 196.5 150.3M182.4 154.9L189.4 162.1 194.4 164.2M179.2 85.1L182.3 92.6 187.2 102.3M147.4 52.5L156.3 58.3 163.2 59.8M147.4 52.5L136.5 47.5 130.9 45.4M147.4 52.5L146.0 45.1 145.2 34.6M121.2 391.9L123.1 387.8 122.3 384.2M279.2 233.1L279.9 239.5 276.0 246.3M110.4 302.2L113.1 302.3 116.9 303.9M110.4 302.2L110.9 306.2 114.1 310.1M222.8 254.9L215.1 255.1 211.3 255.4M222.8 254.9L221.5 262.9 215.6 268.9M122.6 226.5L120.9 229.0 121.1 234.0M122.6 226.5L124.2 222.9 123.7 216.6M58.2 209.7L55.5 203.8 55.8 199.6M58.2 209.7L59.8 213.9 64.9 218.3M58.2 209.7L63.1 209.3 69.1 207.5M23.6 469.3L25.8 467.9 29.3 466.1M23.6 469.3L26.0 471.1 30.9 473.5M23.6 469.3L23.5 472.3 23.2 478.4M23.6 469.3L23.0 466.1 23.6 460.0M8.6 251.6L10.6 248.1 15.0 247.2M8.6 251.6L11.1 256.3 11.4 259.2M103.7 276.4L105.0 281.5 106.6 284.5M103.7 276.4L101.4 271.5 99.5 268.2M103.7 276.4L109.9 280.1 113.7 280.6M284.5 179.2L288.0 183.7 287.5 191.0M284.5 179.2L284.5 169.8 280.4 165.2M48.8 354.7L50.8 352.5 54.1 350.7M48.8 354.7L46.7 352.2 44.3 349.7M106.4 384.0L106.1 379.4 108.1 377.0M106.4 384.0L109.0 386.8 110.2 391.0M106.4 384.0L103.4 384.0 98.2 384.2M323.2 5.7L325.9 11.1 332.0 16.0M323.2 5.7L318.3 -1.3 312.1 -3.4M323.2 5.7L327.2 1.9 333.1 -4.9M323.2 5.7L314.3 10.6 306.9 11.7M-3.1 225.3L-3.9 221.9 -2.9 218.4M-3.1 225.3L-0.7 226.6 3.7 230.8M-3.1 225.3L2.0 222.8 4.7 218.9M47.6 409.3L50.0 406.6 54.4 405.3M47.6 409.3L43.6 407.5 40.7 405.3M47.6 409.3L46.9 412.1 46.1 418.0M31.2 279.2L30.8 282.0 32.2 285.6M31.2 279.2L35.2 278.7 37.5 277.4M225.6 360.1L221.7 367.4 221.5 372.6M225.6 360.1L230.4 355.0 233.2 348.5M227.9 95.5L229.8 104.5 230.5 114.1M227.9 95.5L216.3 104.1 209.8 109.5M298.7 45.4L303.1 42.3 306.5 36.8M298.7 45.4L293.4 46.0 286.8 45.5M298.7 45.4L294.8 52.3 286.3 59.8M298.7 45.4L305.6 42.7 317.5 40.4M436.5 82.4L439.7 86.7 441.1 93.1M95.7 457.1L98.0 454.9 102.1 453.8M48.3 173.0L45.6 169.9 43.3 165.3M48.3 173.0L53.3 176.7 55.0 179.8M3.8 154.4L11.1 159.8 15.3 161.8M52.6 296.4L55.8 297.1 58.6 300.1M52.6 296.4L48.8 297.8 46.8 300.4M52.6 296.4L46.6 296.1 42.1 292.3M76.3 153.7L70.1 151.5 67.5 146.2M76.3 153.7L76.2 158.2 74.8 166.4M76.3 153.7L67.3 156.8 63.3 161.5M76.3 153.7L84.2 161.3 86.3 168.4M13.1 138.3L13.1 129.3 15.9 124.7M13.1 138.3L19.0 132.4 27.7 130.1M123.6 207.4L124.2 213.2 123.7 216.6M123.6 207.4L120.3 208.7 113.8 210.7M123.6 207.4L117.7 210.8 114.6 217.6M145.6 108.1L144.3 116.7 137.1 124.6M145.6 108.1L151.5 118.9 157.2 124.7M12.7 236.6L15.2 237.6 18.2 241.0M12.7 236.6L10.0 237.0 5.3 238.9M65.2 282.2L69.1 284.7 71.4 285.0M65.2 282.2L66.4 278.1 65.8 272.2M27.0 358.1L23.8 361.0 22.3 363.5M27.0 358.1L28.9 360.7 32.3 363.2M27.0 358.1L23.1 358.1 18.6 355.0M5.3 238.9L1.1 238.4 -4.8 236.4M200.1 323.9L203.0 327.6 206.9 333.4M200.1 323.9L193.9 324.0 186.7 322.1M267.1 171.4L262.8 175.1 261.8 182.9M267.1 171.4L268.5 164.8 267.8 158.6M267.1 171.4L275.1 170.3 280.4 165.2M267.1 171.4L259.2 168.0 248.7 171.0M85.7 369.3L88.5 368.7 92.7 368.7M85.7 369.3L86.4 364.5 89.6 362.2M85.7 369.3L84.4 365.4 81.7 361.4M374.2 11.7L371.8 18.6 374.3 25.5M374.2 11.7L365.5 9.3 359.4 11.0M230.0 333.7L233.5 343.8 233.2 348.5M138.2 321.8L142.1 318.9 143.6 314.1M138.2 321.8L132.6 318.5 128.2 318.7M138.2 321.8L135.8 327.4 131.0 330.6M18.0 369.2L22.0 370.8 23.7 373.2M18.0 369.2L19.0 367.5 22.3 363.5M18.0 369.2L17.9 372.3 18.2 377.0M18.0 369.2L14.6 363.6 12.3 360.2M46.8 300.4L44.0 300.5 39.0 299.7M46.8 300.4L45.8 304.0 41.9 307.1M123.2 243.5L124.1 246.9 123.8 250.3M123.2 243.5L122.3 239.0 121.1 234.0M123.2 243.5L126.8 239.0 129.0 234.9M17.8 450.2L14.8 451.9 11.9 455.2M17.8 450.2L13.6 448.5 9.3 446.9M9.3 446.9L11.2 444.7 15.5 441.2M9.3 446.9L10.5 451.9 11.9 455.2M81.0 240.0L78.5 243.0 75.1 244.8M114.1 310.1L110.2 311.3 108.3 313.3M114.1 310.1L114.9 307.4 116.9 303.9M114.1 310.1L118.8 314.5 120.8 316.8M26.6 206.6L25.3 201.5 25.1 197.4M26.6 206.6L22.8 210.7 15.6 211.9M-3.0 289.1L-1.4 292.3 -2.1 296.9M-3.0 289.1L-4.0 284.3 -2.2 278.5M102.6 308.9L106.7 311.8 108.3 313.3M102.6 308.9L97.8 305.5 94.8 304.9M102.6 308.9L107.0 305.3 110.4 302.2M122.3 384.2L122.0 381.0 122.0 377.6M122.3 384.2L117.8 384.0 114.6 386.1M108.0 441.2L103.5 440.1 98.6 439.3M108.0 441.2L104.1 437.0 103.3 432.7M108.0 441.2L101.8 443.9 97.1 447.7M269.0 115.5L273.3 109.5 278.0 104.6M35.7 393.1L30.9 393.2 28.4 394.0M35.7 393.1L37.7 397.3 41.8 398.7M35.7 393.1L37.7 390.0 41.6 386.0M114.8 178.6L118.4 179.9 122.2 184.0M124.0 288.3L120.7 289.6 118.1 293.2M124.0 288.3L118.5 286.5 113.0 288.0M71.5 399.6L74.3 397.2 77.5 396.4M71.5 399.6L70.2 397.4 66.7 394.2M71.5 399.6L73.6 403.6 76.1 405.7M202.0 347.4L204.2 353.9 204.5 359.0M202.0 347.4L195.2 352.9 191.9 356.3M-2.1 296.9L-2.5 299.5 -4.5 303.1M279.8 274.6L279.1 281.9 276.9 286.8M279.8 274.6L286.8 271.4 293.4 271.4M66.0 255.4L67.1 258.8 67.7 262.5M66.0 255.4L61.9 254.7 58.7 251.9M66.0 255.4L71.0 256.9 74.4 255.7M263.7 130.8L266.6 121.3 269.0 115.5M11.2 326.3L13.2 328.8 13.0 333.0M11.2 326.3L16.1 326.5 18.4 329.4M11.2 326.3L15.0 323.6 18.6 321.9M11.2 326.3L10.2 320.9 11.9 314.2M212.8 139.5L212.6 133.4 207.9 126.9M106.3 359.9L105.6 357.2 107.3 353.0M364.0 133.0L360.4 138.2 355.0 142.1M364.0 133.0L371.5 125.6 376.7 122.9M364.0 133.0L351.6 134.1 345.8 130.0M28.8 325.0L31.7 322.2 34.7 320.7M28.8 325.0L28.4 329.7 28.4 334.1M346.5 43.8L351.5 37.8 354.7 35.5M38.0 245.4L40.2 243.6 41.2 239.3M38.0 245.4L36.2 249.9 38.2 256.2M38.0 245.4L37.7 240.9 33.5 235.1M327.7 71.0L335.2 72.3 339.0 75.1M327.7 71.0L318.8 70.7 312.0 71.8M327.7 71.0L322.3 67.9 315.9 60.0M-4.2 370.9L-2.9 372.6 -0.6 376.6M-4.2 370.9L-4.0 366.4 -3.6 364.0M96.5 394.2L98.8 392.7 103.3 392.3M96.5 394.2L98.5 396.9 98.7 401.5M96.5 394.2L98.2 387.6 98.2 384.2M75.9 262.2L72.2 261.4 67.7 262.5M267.5 212.8L267.8 219.7 266.5 225.2M156.4 -4.5L163.7 3.9 166.0 12.9M424.7 61.1L420.9 57.5 412.8 57.2M-1.2 447.0L-2.5 449.1 -2.3 453.6M-1.2 447.0L5.8 446.1 9.3 446.9M-1.2 447.0L1.9 450.3 4.2 456.3M122.2 335.9L119.6 333.6 118.0 328.8M83.9 385.6L83.2 382.8 80.0 379.7M83.9 385.6L85.9 390.8 86.0 395.7M101.5 484.1L100.7 487.5 101.6 491.6M101.5 484.1L103.2 481.3 102.1 475.7M57.5 335.9L55.0 332.6 52.3 331.5M57.5 335.9L62.1 339.1 64.0 341.7M2.7 416.0L1.2 418.4 1.9 422.5M2.7 416.0L0.3 416.2 -4.7 414.1M2.7 416.0L6.7 416.2 10.8 415.0M168.0 419.2L171.3 411.7 171.8 407.1M168.0 419.2L161.8 419.8 154.3 420.7M168.0 419.2L178.2 415.0 184.1 415.7M168.0 419.2L165.9 411.9 159.8 403.5M41.6 386.0L40.4 382.4 37.3 378.9M41.6 386.0L44.9 382.6 49.8 381.9M7.6 309.2L12.9 307.0 17.4 308.0M72.4 484.0L71.6 481.4 71.6 477.1M72.4 484.0L73.4 489.6 71.8 492.2M43.5 376.3L39.5 376.6 37.3 378.9M43.5 376.3L46.4 378.1 49.8 381.9M43.5 376.3L40.0 372.9 37.9 369.3M333.1 -4.9L331.2 5.1 332.0 16.0M201.1 221.5L193.1 220.2 188.6 219.2M201.1 221.5L207.5 219.5 214.4 221.7M201.1 221.5L207.3 225.5 209.4 233.2M294.7 217.5L294.3 209.6 292.5 204.0M15.3 398.7L17.1 395.1 20.1 393.5M15.3 398.7L11.1 396.3 8.4 395.5M15.3 398.7L17.1 403.5 19.7 405.4M125.7 417.6L125.0 413.8 122.1 408.3M125.7 417.6L120.7 417.8 115.2 414.7M22.1 281.0L18.3 283.8 16.9 285.6M22.1 281.0L28.0 279.4 31.2 279.2M108.1 377.0L111.6 378.2 114.4 378.8M83.3 298.5L84.8 302.6 86.1 304.8M83.3 298.5L87.4 297.5 90.4 298.8M287.5 191.0L280.3 197.5 277.6 199.9M90.4 298.8L87.4 302.1 86.1 304.8M90.4 298.8L93.1 302.2 94.8 304.9M69.1 207.5L72.1 213.3 72.1 218.4M41.9 362.7L36.9 363.5 32.3 363.2M41.9 362.7L44.2 360.2 48.8 354.7M32.0 309.8L34.1 311.7 38.6 313.6M32.0 309.8L29.0 307.7 24.5 305.4M436.3 38.7L439.3 30.2 440.4 25.0M436.3 38.7L429.3 41.4 418.9 46.4M48.0 309.6L45.9 308.6 41.9 307.1M48.0 309.6L51.2 308.4 55.7 308.6M48.0 309.6L46.8 314.4 44.3 318.2M205.5 291.8L207.9 296.3 212.3 302.8M197.5 121.2L202.0 122.5 207.9 126.9M69.9 430.2L73.1 426.4 74.9 424.2M69.9 430.2L73.7 434.5 77.0 435.8M69.9 430.2L70.2 436.1 71.2 440.6M69.9 430.2L62.9 428.9 59.3 428.5M85.0 487.5L82.7 490.0 79.4 491.2M292.5 2.0L295.5 7.7 296.6 17.0M292.5 2.0L301.1 7.2 306.9 11.7M292.5 2.0L286.8 -1.5 275.7 -4.9M110.2 391.0L112.9 389.2 114.6 386.1M110.2 391.0L107.0 391.1 103.3 392.3M110.2 391.0L111.6 394.1 114.3 397.3M185.2 290.1L181.6 283.1 172.9 279.6M7.0 269.9L2.7 267.0 -2.3 266.1M7.0 269.9L11.8 271.8 16.3 275.7M7.0 269.9L8.9 275.7 8.9 281.1M385.4 131.0L382.5 125.7 376.7 122.9M385.4 131.0L381.4 121.8 381.5 110.7M95.5 317.9L101.7 317.9 105.0 319.1M355.0 142.1L343.6 143.1 333.6 148.2M147.9 236.7L148.4 231.2 149.0 227.5M45.5 483.0L49.6 487.1 51.1 488.8M391.7 -2.0L384.5 -4.0 377.5 -3.6M58.0 326.8L54.6 327.9 52.3 331.5M58.0 326.8L54.8 327.0 49.9 324.1M58.0 326.8L58.2 332.8 57.5 335.9M377.5 -3.6L377.6 5.7 374.2 11.7M377.5 -3.6L384.7 6.8 388.9 11.5M63.1 461.2L64.3 457.7 63.4 454.5M63.1 461.2L60.8 462.4 56.6 463.8M63.1 461.2L62.6 466.2 60.6 469.9M88.5 422.5L85.2 423.1 81.6 425.4M88.5 422.5L91.7 424.5 96.9 425.9M88.5 422.5L90.5 428.1 92.5 430.8M22.1 233.8L24.9 235.8 26.9 239.0M22.1 233.8L19.5 238.1 18.2 241.0M173.8 259.6L170.6 254.9 170.7 248.5M114.1 483.7L119.9 485.3 122.9 486.1M114.1 483.7L111.1 480.0 110.0 475.0M71.4 285.0L73.2 281.2 73.9 275.2M71.7 342.8L68.3 342.2 64.0 341.7M71.7 342.8L72.0 347.8 75.0 350.3M112.9 468.3L115.8 469.2 119.8 470.0M112.9 468.3L112.1 472.8 110.0 475.0M286.1 76.7L277.7 73.6 273.2 70.0M392.5 23.8L396.9 22.7 403.8 20.8M392.5 23.8L389.5 28.5 389.7 35.4M105.0 319.1L106.0 315.7 108.3 313.3M105.0 319.1L108.4 324.4 110.6 327.7M105.0 319.1L102.1 312.6 102.6 308.9M50.2 466.0L53.7 464.6 56.6 463.8M102.1 475.7L106.7 476.7 110.0 475.0M87.3 479.4L86.7 476.8 84.6 473.2M87.3 479.4L82.2 482.6 79.8 483.1M87.3 479.4L87.1 482.5 85.0 487.5M180.5 204.2L184.7 204.3 192.8 205.9M128.3 273.9L124.2 278.0 122.1 281.3M178.8 357.7L181.3 362.6 186.6 367.0M184.1 251.7L178.9 257.6 173.8 259.6M184.1 251.7L175.6 251.5 170.7 248.5M86.7 282.4L89.3 283.5 94.3 283.7M86.7 282.4L87.8 286.2 91.1 291.1M286.3 59.8L287.5 51.6 286.8 45.5M2.5 334.6L-1.3 338.1 -3.7 339.1M2.5 334.6L2.0 330.7 -0.9 326.9M2.5 334.6L4.3 338.7 2.9 343.9M304.6 126.7L310.8 119.1 313.1 113.9M304.6 126.7L300.6 120.3 300.8 111.7M110.6 327.7L114.5 328.5 118.0 328.8M110.6 327.7L113.4 324.0 116.5 322.1M293.0 233.3L287.0 231.1 279.2 233.1M293.0 233.3L289.9 238.3 288.7 246.5M293.0 233.3L292.9 226.3 294.7 217.5M59.3 428.5L57.9 426.2 54.2 424.3M59.3 428.5L55.8 428.2 49.4 429.1M9.5 501.2L13.2 500.1 14.6 496.7M9.5 501.2L6.0 503.0 3.1 504.1M9.5 501.2L6.2 500.6 0.6 496.5M33.4 420.9L36.8 417.6 37.9 416.0M33.4 420.9L29.3 421.8 25.7 420.4M314.4 235.8L302.1 234.3 293.0 233.3M176.5 374.3L182.0 372.7 186.6 367.0M176.5 374.3L172.4 377.2 165.1 379.4M176.5 374.3L175.3 381.8 176.1 387.2M45.0 261.4L45.7 264.5 46.6 269.0M45.0 261.4L42.3 260.3 38.2 256.2M154.3 420.7L149.9 418.8 144.8 416.4M122.0 87.8L120.2 95.8 115.5 109.7M71.6 477.1L67.6 475.3 63.9 476.0M71.6 477.1L75.9 476.0 77.9 472.1M140.6 181.1L146.4 182.3 150.0 184.9M118.8 150.6L119.3 156.4 117.0 160.1M118.8 150.6L112.5 151.5 108.9 154.9M135.2 257.9L137.6 260.8 143.4 262.6M135.2 257.9L132.9 253.8 130.7 248.7M135.2 257.9L129.6 261.4 124.9 262.0M24.9 224.6L20.5 222.3 18.9 219.2M128.2 318.7L127.4 321.9 124.3 324.7M128.2 318.7L123.2 318.1 120.8 316.8M-0.6 376.6L1.0 377.7 4.4 381.2M-0.6 376.6L3.1 375.2 8.0 375.6M-0.6 376.6L3.0 374.8 5.9 369.4M42.1 292.3L41.5 297.4 39.0 299.7M42.1 292.3L42.3 289.4 39.8 283.7M42.1 292.3L45.1 295.3 46.8 300.4M273.2 70.0L278.8 66.7 286.3 59.8M2.9 343.9L-1.9 345.0 -4.7 346.1M2.9 343.9L-1.1 341.8 -3.7 339.1M2.9 343.9L-0.2 347.4 -0.4 351.7M86.0 249.4L81.9 251.2 79.4 251.1M86.0 249.4L87.2 251.9 86.8 256.4M86.0 249.4L90.4 249.2 95.9 251.5M86.0 249.4L85.3 243.4 81.0 240.0M248.4 329.6L245.3 334.6 243.1 341.9M115.5 109.7L109.9 112.3 107.7 118.8M86.0 395.7L83.1 397.2 77.5 396.4M86.0 395.7L89.7 391.9 90.7 387.2M86.0 395.7L84.6 401.4 83.9 405.2M134.4 348.9L127.7 348.1 123.9 350.7M134.4 348.9L136.0 354.2 133.2 361.6M70.7 501.2L67.9 503.7 64.2 503.7M70.7 501.2L74.1 499.0 76.5 497.1M70.7 501.2L72.1 495.6 71.8 492.2M42.8 336.9L40.9 339.3 41.4 343.4M42.8 336.9L40.9 334.3 36.9 332.7M9.7 298.7L11.0 293.9 9.9 291.3M9.7 298.7L14.5 301.3 18.5 301.1M201.2 249.7L204.3 254.2 211.3 255.4M201.2 249.7L200.0 257.2 203.8 265.2M201.2 249.7L195.1 249.7 184.1 251.7M114.6 217.6L117.7 218.4 123.7 216.6M77.5 396.4L74.9 392.7 73.6 391.0M77.5 396.4L75.5 400.5 76.1 405.7M70.9 314.9L74.5 317.5 76.8 318.7M70.9 314.9L71.8 310.0 70.7 307.4M84.9 498.0L80.3 496.0 76.5 497.1M84.9 498.0L80.7 496.0 79.4 491.2M84.9 498.0L89.6 497.0 93.3 495.1M-4.2 397.1L-2.9 401.6 -0.8 405.8M-4.2 397.1L-0.1 399.5 5.6 404.1M74.9 424.2L77.0 425.2 81.6 425.4M74.9 424.2L75.7 421.6 75.6 417.0M74.9 424.2L71.5 422.1 68.7 419.3M192.7 408.1L196.9 402.5 199.8 399.5M-4.7 477.6L-2.4 477.9 1.9 479.6M-4.7 477.6L-1.0 472.9 0.7 471.1M129.0 234.9L126.1 235.4 121.1 234.0M129.0 234.9L124.6 231.4 122.6 226.5M96.7 408.0L97.2 404.1 98.7 401.5M91.7 326.8L89.1 331.0 87.5 333.6M23.2 478.4L26.4 481.6 29.1 482.6M23.2 478.4L28.3 474.6 30.9 473.5M240.4 296.9L243.0 291.1 250.5 284.3M64.3 355.4L62.9 359.0 63.1 364.8M64.3 355.4L66.0 357.8 70.2 363.9M68.8 411.0L66.5 408.8 63.3 405.0M68.8 411.0L67.6 416.0 68.7 419.3M68.8 411.0L71.6 408.6 76.1 405.7M68.8 411.0L73.4 414.2 75.6 417.0M98.2 189.6L95.6 193.2 94.9 199.3M98.2 189.6L103.0 188.7 108.7 189.1M98.2 189.6L101.0 192.7 107.3 198.4M8.0 375.6L5.9 371.8 5.9 369.4M8.0 375.6L6.1 378.4 4.4 381.2M130.9 45.4L136.1 38.0 145.2 34.6M12.5 340.5L13.6 336.2 13.0 333.0M12.5 340.5L11.4 347.2 13.7 350.7M275.8 27.3L274.3 19.3 271.5 14.9M58.5 222.3L61.8 222.6 65.3 224.9M58.5 222.3L58.8 226.3 58.3 229.7M58.5 222.3L62.4 220.1 64.9 218.3M203.8 265.2L207.4 258.3 211.3 255.4M18.2 377.0L20.7 375.6 23.7 373.2M17.4 308.0L17.7 304.0 18.5 301.1M17.4 308.0L20.2 307.1 24.5 305.4M86.8 256.4L82.7 255.0 79.4 251.1M86.8 256.4L90.4 254.9 95.9 251.5M29.4 430.1L33.1 431.0 35.3 433.4M29.4 430.1L25.3 430.6 22.9 432.5M141.7 376.0L137.7 374.5 130.8 376.6M141.7 376.0L139.9 370.6 142.3 364.3M141.7 376.0L140.8 381.5 138.6 390.0M8.4 395.5L9.4 390.2 7.7 386.9M8.4 395.5L10.6 390.7 15.9 386.3M59.4 447.7L60.8 452.1 63.4 454.5M59.4 447.7L62.6 449.7 68.9 449.6M59.4 447.7L56.1 449.2 48.7 451.9M226.2 275.4L222.0 277.1 214.2 282.6M194.4 164.2L197.0 155.2 196.5 150.3M92.6 217.0L87.9 218.2 82.8 221.4M419.6 111.2L426.6 116.1 433.6 115.7M419.6 111.2L414.8 102.6 409.2 95.9M43.9 275.1L39.5 275.5 37.5 277.4M43.9 275.1L48.3 277.7 50.8 277.7M123.9 300.6L121.7 302.8 116.9 303.9M123.9 300.6L123.0 305.8 124.1 309.0M19.6 170.7L16.7 167.9 15.3 161.8M19.6 170.7L13.8 169.8 6.8 169.5M19.6 170.7L13.4 173.6 9.6 179.3M426.9 20.6L421.6 21.5 415.5 24.3M426.9 20.6L435.3 22.6 440.4 25.0M33.5 235.1L32.6 231.0 33.7 228.1M33.5 235.1L28.9 236.6 26.9 239.0M33.5 235.1L35.9 237.1 41.2 239.3M241.3 -2.4L242.3 8.8 248.6 14.4M327.8 53.4L334.6 57.0 340.4 60.3M327.8 53.4L322.5 47.5 317.5 40.4M43.6 434.2L41.8 437.8 38.9 439.1M43.6 434.2L46.9 430.6 49.4 429.1M84.6 473.2L81.5 473.7 77.9 472.1M84.6 473.2L88.3 471.0 91.8 470.0M406.0 47.1L399.5 49.2 393.7 47.6M406.0 47.1L411.8 44.7 418.9 46.4M38.9 439.1L38.1 437.2 35.3 433.4M137.6 285.8L140.9 289.8 141.2 294.1M137.6 285.8L134.9 292.6 131.9 297.3M165.1 379.4L171.0 381.9 176.1 387.2M165.1 379.4L167.5 386.2 167.3 394.1M102.4 343.5L99.0 345.6 96.0 347.4M102.4 343.5L102.7 339.8 101.1 335.7M102.4 343.5L107.6 346.2 110.8 347.1M38.2 256.2L42.3 256.1 46.1 254.9M38.2 256.2L33.9 251.5 31.1 248.2M186.7 322.1L192.2 327.8 192.4 336.6M81.7 361.4L78.9 359.5 76.0 357.2M81.7 361.4L86.2 363.0 89.6 362.2M81.7 361.4L83.3 357.2 86.6 355.1M60.7 397.4L63.3 394.8 66.7 394.2M60.7 397.4L61.1 401.0 63.3 405.0M18.6 355.0L20.0 359.8 22.3 363.5M0.7 471.1L1.7 475.0 1.9 479.6M-4.3 311.3L-4.9 306.0 -4.5 303.1M-4.3 311.3L1.8 311.1 7.6 309.2M56.7 477.7L60.5 475.7 63.9 476.0M56.7 477.7L60.2 481.0 61.6 484.0M56.7 477.7L58.6 474.1 60.6 469.9M41.2 239.3L46.0 240.0 49.0 238.3M124.6 357.4L120.9 357.1 116.1 353.9M312.1 -3.4L301.9 1.9 292.5 2.0M79.4 251.1L78.2 246.7 75.1 244.8M49.8 399.2L49.5 396.1 51.3 392.8M49.8 399.2L51.7 401.6 54.4 405.3M49.8 399.2L46.8 397.9 41.8 398.7M76.1 405.7L79.5 406.6 83.9 405.2M76.1 405.7L78.2 409.2 81.3 412.7M101.0 105.8L105.8 110.3 107.7 118.8M101.0 105.8L108.6 109.5 115.5 109.7M58.7 370.5L61.7 368.5 63.1 364.8M96.9 425.9L93.9 428.9 92.5 430.8M96.9 425.9L101.1 431.0 103.3 432.7M96.9 425.9L89.1 428.7 85.2 431.6M66.7 394.2L69.0 392.7 73.6 391.0M74.8 166.4L75.3 173.0 78.4 176.2M74.8 166.4L82.2 165.6 86.3 168.4M131.0 330.6L127.5 328.2 124.3 324.7M131.0 330.6L126.1 331.7 122.2 335.9M120.8 316.8L123.5 312.2 124.1 309.0M120.8 316.8L122.2 321.5 124.3 324.7M101.6 491.6L104.2 491.0 108.8 492.6M101.6 491.6L97.0 493.8 93.3 495.1M119.0 264.8L122.7 264.0 124.9 262.0M261.8 182.9L271.1 185.7 275.6 188.4M201.0 190.7L193.6 190.9 185.5 193.7M280.4 165.2L271.8 161.9 267.8 158.6M223.3 307.2L216.3 305.9 212.3 302.8M223.3 307.2L223.3 312.3 227.2 322.3M242.5 36.7L234.9 49.2 231.3 54.5M242.5 36.7L251.4 29.6 261.2 26.2M37.3 378.9L32.2 378.8 28.3 379.4M37.3 378.9L37.4 374.6 37.9 369.3M197.6 371.1L191.3 371.0 186.6 367.0M197.6 371.1L198.6 366.0 204.5 359.0M94.3 337.0L96.9 336.2 101.1 335.7M-4.7 357.4L-4.2 361.3 -3.6 364.0M-4.7 357.4L-3.4 355.5 -0.4 351.7M-4.7 357.4L-1.0 359.9 3.0 360.3M-4.7 357.4L-5.6 350.1 -4.7 346.1M24.5 493.0L29.0 492.1 31.8 489.0M24.5 493.0L28.0 496.2 29.1 500.7M24.5 493.0L19.6 492.8 15.7 490.2M229.2 155.2L232.0 149.3 236.1 145.5M229.2 155.2L234.5 160.5 238.4 164.8M41.8 398.7L41.3 401.9 40.7 405.3M243.1 341.9L239.2 346.4 233.2 348.5M243.1 341.9L238.7 339.0 230.0 333.7M287.7 136.0L283.8 139.5 277.4 149.0M-4.5 424.3L-1.4 427.5 -0.5 429.6M-4.5 424.3L-0.5 423.5 1.9 422.5M68.9 449.6L65.3 451.7 63.4 454.5M68.9 449.6L72.7 447.8 77.5 446.8M55.7 308.6L57.9 307.6 62.8 305.8M55.7 308.6L57.9 312.1 62.9 312.6M55.7 308.6L55.5 305.0 58.6 300.1M441.2 13.1L440.7 19.4 440.4 25.0M441.2 13.1L432.0 19.2 426.9 20.6M441.2 13.1L428.9 11.1 417.4 12.7M277.4 149.0L270.8 151.4 267.8 158.6M223.0 234.0L219.3 226.4 214.4 221.7M15.6 211.9L12.4 213.8 11.2 217.5M15.6 211.9L16.6 214.3 18.9 219.2M92.0 274.0L95.5 270.6 99.5 268.2M92.0 274.0L89.9 278.9 86.7 282.4M92.0 274.0L92.8 279.2 94.3 283.7M4.7 218.9L8.8 218.9 11.2 217.5M4.7 218.9L-0.0 218.6 -2.9 218.4M164.3 312.6L163.0 319.0 157.6 322.1M164.3 312.6L159.3 313.3 152.4 311.7M51.5 438.7L48.3 437.6 43.6 434.2M52.5 160.4L49.7 162.2 43.3 165.3M32.2 285.6L35.9 284.9 39.8 283.7M65.0 192.2L59.1 196.1 55.8 199.6M403.8 20.8L408.6 22.8 415.5 24.3M301.2 194.0L306.9 192.0 312.1 189.2M301.2 194.0L296.3 197.9 292.5 204.0M301.2 194.0L294.8 192.2 287.5 191.0M83.9 405.2L82.4 408.3 81.3 412.7M187.2 102.3L191.7 103.3 198.3 107.4M187.2 102.3L180.8 106.3 170.0 113.7M187.2 102.3L190.2 108.8 197.5 121.2M89.2 464.0L90.4 468.1 91.8 470.0M0.8 486.5L2.3 482.8 1.9 479.6M0.8 486.5L0.2 490.0 0.6 496.5M0.8 486.5L-3.7 481.0 -4.7 477.6M-2.3 266.1L-0.7 271.8 -2.2 278.5M389.7 35.4L390.1 41.0 393.7 47.6M10.3 480.5L6.1 480.2 1.9 479.6M144.8 416.4L146.8 409.8 148.0 406.8M63.9 476.0L62.7 472.7 60.6 469.9M63.9 476.0L62.7 481.4 61.6 484.0M27.6 404.7L26.3 407.5 24.2 411.1M27.6 404.7L22.5 405.9 19.7 405.4M39.0 299.7L40.9 304.1 41.9 307.1M265.9 198.4L272.2 191.7 275.6 188.4M265.9 198.4L267.3 207.5 267.5 212.8M145.8 194.1L146.1 187.9 150.0 184.9M26.8 299.2L26.1 302.6 24.5 305.4M26.8 299.2L26.7 296.7 23.9 291.6M26.8 299.2L23.4 300.7 18.5 301.1M25.1 197.4L25.7 191.1 26.3 186.9M5.9 369.4L3.9 364.3 3.0 360.3M56.2 504.0L55.7 499.2 54.9 496.6M56.2 504.0L60.8 503.0 64.2 503.7M33.7 228.1L27.8 226.1 24.9 224.6M33.7 228.1L32.4 224.8 27.8 218.8M70.7 307.4L75.3 304.5 77.4 303.7M34.7 320.7L36.4 317.7 38.6 313.6M37.5 277.4L39.6 280.7 39.8 283.7M89.6 362.2L91.9 365.9 92.7 368.7M331.5 131.4L332.3 123.9 338.5 116.6M73.3 296.9L75.6 301.2 77.4 303.7M392.8 86.9L386.2 86.5 381.6 83.9M211.3 255.4L214.1 263.6 215.6 268.9M124.9 478.9L124.8 482.6 122.9 486.1M124.9 478.9L120.9 477.8 116.6 477.3M124.9 478.9L121.7 473.4 119.8 470.0M110.5 227.8L107.2 225.8 106.4 221.7M340.4 60.3L337.2 69.6 339.0 75.1M19.7 405.4L17.4 408.4 13.5 408.9M19.7 405.4L23.1 409.5 24.2 411.1M425.5 92.9L433.6 89.6 436.5 82.4M425.5 92.9L431.4 94.0 441.1 93.1M425.5 92.9L417.7 97.2 409.2 95.9M-2.2 278.5L0.7 280.9 3.6 286.3M29.8 262.9L28.1 258.1 27.5 254.3M29.8 262.9L33.3 267.7 38.8 268.8M98.2 504.4L100.7 503.6 105.8 504.9M98.2 504.4L101.0 502.8 103.8 498.5M115.3 407.0L115.9 410.4 115.2 414.7M115.3 407.0L111.1 410.2 108.4 413.8M115.3 407.0L113.3 401.4 114.3 397.3M38.6 313.6L40.9 316.9 44.3 318.2M38.6 313.6L39.6 309.2 41.9 307.1M53.2 256.9L56.2 254.0 58.7 251.9M105.2 214.8L107.0 218.9 106.4 221.7M105.2 214.8L103.2 209.2 100.4 206.9M0.6 496.5L-0.2 498.9 -3.3 502.4M0.6 496.5L3.1 501.1 3.1 504.1M0.6 496.5L3.1 491.4 7.7 489.6M92.1 413.7L93.8 412.1 96.7 408.0M92.1 413.7L90.6 409.8 90.4 404.8M92.1 413.7L98.1 414.8 101.4 413.5M92.1 413.7L89.7 417.6 88.5 422.5M103.3 432.7L99.5 436.8 98.6 439.3M71.2 440.6L73.3 438.4 77.0 435.8M74.3 34.4L91.0 43.2 100.9 55.5M74.3 34.4L97.6 32.2 108.6 40.4M11.2 217.5L16.2 218.3 18.9 219.2M157.5 190.2L152.3 188.3 150.0 184.9M157.5 190.2L152.6 191.8 145.8 194.1M32.3 363.2L30.2 366.1 29.5 369.9M12.9 434.4L14.6 437.5 15.5 441.2M62.8 305.8L61.3 302.4 58.6 300.1M108.8 492.6L112.0 493.1 115.7 493.6M108.8 492.6L111.2 487.7 114.1 483.7M49.0 238.3L54.0 239.8 57.8 241.2M318.1 177.5L313.2 172.9 312.2 165.9M24.5 305.4L21.9 303.1 18.5 301.1M8.9 281.1L13.1 284.5 16.9 285.6M8.9 281.1L8.8 285.5 9.9 291.3M377.1 58.0L374.0 63.1 367.8 65.4M377.1 58.0L369.9 56.0 364.3 49.2M99.5 268.2L100.8 264.6 100.6 260.8M44.3 349.7L42.6 346.7 41.4 343.4M44.3 349.7L41.5 351.9 36.7 355.8M107.3 353.0L109.8 350.2 110.8 347.1M186.6 367.0L188.2 363.0 191.9 356.3M93.3 495.1L92.1 490.2 92.6 486.2M7.7 386.9L5.1 383.4 4.4 381.2M80.0 379.7L80.3 375.6 77.1 369.9M29.1 482.6L30.0 486.4 31.8 489.0M29.1 482.6L29.1 479.3 30.9 473.5M130.8 376.6L125.6 377.8 122.0 377.6M130.8 376.6L125.3 382.1 122.3 384.2M27.5 254.3L23.2 252.7 20.1 251.2M-1.9 106.6L-1.9 120.1 -2.4 129.7M-1.9 106.6L9.8 112.9 15.9 124.7M148.0 406.8L151.5 412.1 154.3 420.7M39.0 493.9L38.9 491.4 38.1 487.0M-0.8 405.8L-4.1 408.7 -4.7 414.1M54.4 405.3L58.4 405.7 63.3 405.0M125.9 135.6L124.5 126.4 123.9 121.2M114.4 378.8L115.2 382.6 114.6 386.1M114.4 378.8L117.6 377.6 122.0 377.6M82.8 221.4L76.5 224.2 72.8 225.6M20.1 251.2L19.7 245.0 18.2 241.0M20.1 251.2L25.0 247.9 31.1 248.2M30.9 473.5L29.1 469.2 29.3 466.1M374.3 25.5L367.8 25.3 359.8 23.2M98.1 374.1L96.7 371.6 92.7 368.7M143.6 314.1L142.5 310.3 137.5 304.9M143.6 314.1L145.1 309.7 146.7 302.9M236.1 145.5L239.1 158.4 238.4 164.8M339.0 75.1L336.0 79.9 334.3 88.5M25.7 420.4L21.8 424.7 18.6 426.5M71.8 492.2L74.2 495.3 76.5 497.1M71.8 492.2L69.0 492.9 64.9 493.5M71.8 492.2L75.1 491.2 79.4 491.2M80.7 346.6L83.0 344.0 85.7 340.3M80.7 346.6L80.9 342.9 80.1 336.9M18.4 329.4L16.3 331.7 13.0 333.0M18.4 329.4L17.9 327.0 18.6 321.9M16.3 460.0L13.6 458.0 11.9 455.2M22.8 345.9L19.9 351.0 18.6 355.0M22.8 345.9L18.8 349.6 13.7 350.7M22.8 345.9L22.7 342.2 19.5 336.3M29.3 466.1L29.2 460.7 28.5 455.4M31.8 489.0L34.3 487.5 38.1 487.0M108.9 154.9L112.5 157.5 117.0 160.1M100.4 206.9L96.5 202.1 94.9 199.3M100.4 206.9L93.7 206.3 87.8 204.9M411.9 82.7L408.2 78.1 404.7 72.8M411.9 82.7L419.6 83.6 424.8 80.3M332.6 29.2L335.8 35.1 334.2 43.1M26.9 239.0L22.4 238.5 18.2 241.0M71.4 467.4L75.9 470.5 77.9 472.1M71.4 467.4L72.2 472.9 71.6 477.1M54.2 424.3L50.9 426.0 49.4 429.1M54.2 424.3L53.1 421.2 53.8 416.8M92.1 240.1L89.2 238.0 88.0 232.7M6.6 429.1L2.3 429.2 -0.5 429.6M6.6 429.1L3.3 424.6 1.9 422.5M64.9 493.5L67.1 496.6 70.7 501.2M14.6 496.7L15.4 492.5 15.7 490.2M14.6 496.7L11.1 494.9 7.7 489.6M58.3 229.7L61.6 226.6 65.3 224.9M58.3 229.7L52.7 227.4 49.4 225.4M92.6 486.2L88.2 485.6 85.0 487.5M92.6 486.2L91.0 482.4 87.3 479.4M72.1 218.4L69.0 217.7 64.9 218.3M13.5 408.9L12.3 411.2 10.8 415.0M13.5 408.9L13.9 404.6 15.3 398.7M204.5 359.0L200.4 357.8 191.9 356.3M38.8 268.8L44.0 269.8 46.6 269.0M38.8 268.8L42.1 271.8 43.9 275.1M38.8 268.8L37.9 274.2 37.5 277.4M38.8 268.8L43.6 266.1 45.0 261.4M9.4 462.6L12.3 460.4 16.3 460.0M9.4 462.6L10.8 457.8 11.9 455.2M79.0 504.9L77.7 501.8 76.5 497.1M79.0 504.9L81.5 500.4 84.9 498.0M79.0 504.9L73.9 502.1 70.7 501.2M124.9 262.0L120.2 259.5 116.9 254.3M124.9 262.0L123.7 257.4 123.8 250.3M23.7 373.2L27.4 371.6 29.5 369.9M146.7 302.9L144.7 299.3 141.2 294.1M71.4 237.8L74.0 241.9 75.1 244.8M71.4 237.8L74.7 238.3 81.0 240.0M124.5 401.3L121.4 396.9 121.2 391.9M115.7 493.6L114.9 486.9 114.1 483.7M115.7 493.6L118.2 489.0 122.9 486.1M-3.7 339.1L-5.4 343.8 -4.7 346.1M124.3 324.7L120.4 325.7 118.0 328.8M106.6 284.5L102.6 286.3 100.1 287.7M276.9 286.8L274.1 281.3 268.5 272.2M54.1 350.7L54.1 356.9 54.8 360.3M418.9 46.4L415.6 50.8 412.8 57.2M217.3 119.7L213.3 125.1 207.9 126.9M81.3 412.7L79.6 415.5 75.6 417.0M124.1 309.0L121.8 306.3 116.9 303.9M76.5 497.1L78.3 494.5 79.4 491.2M86.0 449.2L83.3 448.7 77.5 446.8M86.0 449.2L84.5 445.0 82.4 440.1M86.0 449.2L86.6 445.0 91.0 439.3M192.8 205.9L188.9 210.6 188.6 219.2M73.6 334.3L73.6 337.9 71.7 342.8M199.8 399.5L197.3 394.0 189.0 385.7M199.8 399.5L188.2 400.5 180.6 400.3M-2.3 453.6L5.7 450.2 9.3 446.9M115.2 414.7L112.3 414.0 108.4 413.8M206.9 333.4L212.1 326.5 215.4 321.6M206.9 333.4L203.2 341.7 202.0 347.4M28.4 334.1L31.4 334.4 36.9 332.7M49.4 429.1L51.6 435.6 51.5 438.7M254.5 76.7L261.6 71.6 273.2 70.0M116.1 353.9L113.7 349.5 110.8 347.1M64.9 218.3L65.9 221.5 65.3 224.9M119.8 470.0L117.2 472.8 116.6 477.3M433.6 115.7L437.5 101.8 441.1 93.1M50.6 370.5L55.1 369.0 58.7 370.5M50.6 370.5L54.1 374.8 55.8 377.1M50.6 370.5L45.6 373.5 43.5 376.3M50.6 370.5L54.1 364.9 54.8 360.3M48.4 473.7L50.6 471.1 50.2 466.0M48.4 473.7L51.0 476.8 56.7 477.7M186.2 345.9L189.9 349.7 191.9 356.3M113.7 280.6L111.1 282.3 106.6 284.5M113.7 280.6L116.8 280.4 122.1 281.3M60.6 469.9L57.9 468.1 56.6 463.8M10.4 227.0L13.5 226.4 18.5 228.1M10.4 227.0L10.8 221.9 11.2 217.5M10.4 227.0L10.2 233.2 12.7 236.6M118.1 293.2L122.6 298.5 123.9 300.6M248.4 256.4L255.8 258.4 259.5 264.5M248.4 256.4L240.1 251.6 234.9 251.1M200.4 65.9L189.6 59.5 182.6 43.9M101.4 413.5L105.4 412.9 108.4 413.8M101.4 413.5L100.0 410.3 96.7 408.0M98.7 294.4L93.9 293.9 91.1 291.1M198.3 107.4L198.6 114.4 197.5 121.2M198.3 107.4L206.6 120.5 207.9 126.9M55.6 140.0L61.2 141.2 67.5 146.2M55.6 140.0L52.9 150.9 43.9 156.0M10.8 415.0L11.3 419.2 12.7 423.7M292.5 204.0L288.7 207.6 281.5 210.9M9.9 291.3L6.9 288.7 3.6 286.3M106.4 221.7L103.4 226.3 102.2 229.1M20.1 393.5L24.4 394.4 28.4 394.0M191.9 356.3L184.0 356.4 178.8 357.7M103.3 392.3L104.2 389.0 106.4 384.0M64.2 503.7L65.2 499.2 64.9 493.5M68.7 419.3L72.4 419.0 75.6 417.0M1.9 422.5L-0.0 426.8 -0.5 429.6M-4.8 236.4L1.0 233.2 3.7 230.8M-4.8 236.4L-2.3 228.9 -3.1 225.3M76.0 357.2L72.1 361.4 70.2 363.9M141.2 294.1L138.5 299.9 137.5 304.9M51.3 392.8L57.2 394.4 60.7 397.4M51.3 392.8L51.1 387.8 49.8 381.9M-4.7 414.1L-5.4 418.5 -4.5 424.3M-4.7 414.1L-1.9 419.0 1.9 422.5M39.3 176.6L43.5 174.2 48.3 173.0M39.3 176.6L45.1 180.2 47.2 185.6M39.3 176.6L43.3 170.0 43.3 165.3M35.3 433.4L39.6 435.1 43.6 434.2M312.1 189.2L317.5 181.5 318.1 177.5M312.1 189.2L306.5 196.2 304.2 207.6M116.2 370.6L116.0 373.9 114.4 378.8M116.2 370.6L118.0 374.2 122.0 377.6M275.7 -4.9L276.9 2.4 283.3 9.7M105.8 504.9L108.1 500.6 108.8 492.6M3.0 360.3L-1.2 361.6 -3.6 364.0M143.4 262.6L143.3 266.8 138.7 274.7M67.5 146.2L64.2 154.9 63.3 161.5M212.3 302.8L211.3 309.6 206.1 313.8M25.5 154.1L19.1 155.9 15.3 161.8M58.6 300.1L57.5 296.6 58.9 292.4M77.4 303.7L81.6 301.0 83.3 298.5M137.8 424.8L141.9 420.5 144.8 416.4M3.1 504.1L-1.2 503.3 -3.3 502.4M-3.3 502.4L1.3 503.1 9.5 501.2M-3.3 502.4L-2.8 493.7 0.8 486.5" fill="none" stroke="#f4d88e" stroke-width=".95" stroke-linejoin="round"/><path d="M89.0 419.0L75.5 406.4L62.7 394.5L53.3 386.5L38.0 374.0M89.0 419.0L67.1 425.0L49.3 429.8L27.4 439.3L10.0 440.0M89.0 419.0L81.5 434.8L60.6 463.8L49.3 476.5L40.0 499.0M89.0 419.0L82.6 438.3L87.8 460.4L83.1 478.1L80.0 499.0M89.0 419.0L78.6 401.5L79.0 372.4L70.3 351.3L60.0 330.0M89.0 419.0L70.9 412.1L43.4 403.0L19.6 404.0L0.0 395.0M89.0 419.0L69.3 429.3L47.0 441.4L21.4 461.4L0.0 470.0M38.0 374.0L32.6 369.7L21.4 354.5L11.7 346.2L0.0 340.0M38.0 374.0L34.8 352.0L31.7 339.4L22.8 320.4L20.0 300.0M38.0 374.0L44.8 338.0L49.9 309.5L51.2 279.1L60.0 250.0M38.0 374.0L24.1 386.0L14.0 395.1L8.8 406.4L0.0 420.0M38.0 374.0L23.7 377.5L14.9 374.2L11.1 373.1L0.0 375.0M357.0 130.0L343.1 144.1L331.9 157.3L316.3 163.3L297.0 178.0M357.0 130.0L352.8 122.4L346.3 103.3L340.7 89.5L330.0 80.0M357.0 130.0L371.2 109.5L384.5 89.1L402.5 66.3L417.0 42.0M357.0 130.0L378.0 129.4L397.1 126.5L412.8 122.9L435.0 114.0M357.0 130.0L343.7 123.7L330.8 114.4L317.4 104.1L300.0 100.0M357.0 130.0L329.8 114.9L312.7 97.8L280.7 74.1L260.0 60.0M297.0 178.0L277.7 169.9L258.5 162.2L246.5 156.1L226.0 145.0M297.0 178.0L284.3 205.9L277.9 238.0L265.8 262.2L253.0 295.0M297.0 178.0L299.1 194.0L309.4 200.5L306.7 217.4L312.0 232.0M297.0 178.0L270.1 171.9L248.2 167.6L223.0 170.2L200.0 164.0M253.0 295.0L239.8 283.5L224.8 278.6L215.0 266.9L198.0 257.0M253.0 295.0L234.6 297.6L221.4 289.3L207.9 285.6L193.0 286.0M253.0 295.0L251.8 313.5L241.5 325.6L236.5 338.0L232.0 349.0M253.0 295.0L219.3 290.8L187.1 286.2L151.2 287.2L118.0 287.0M107.0 174.0L127.5 172.5L139.6 181.9L161.8 179.2L175.0 182.0M107.0 174.0L111.0 156.6L118.7 149.1L132.9 135.2L140.0 120.0M107.0 174.0L103.0 182.0L93.3 198.4L87.6 213.6L84.0 224.0M139.0 427.0L137.6 416.9L139.1 402.1L141.7 386.5L143.0 370.0M139.0 427.0L158.3 414.8L170.8 413.7L182.6 404.2L200.0 394.0M139.0 427.0L127.3 402.0L124.2 375.0L110.7 355.6L107.0 330.0" fill="none" stroke="#f2be62" stroke-width="1.200" stroke-linejoin="round"/></g><path d="M248.7 311.7L262.6 314.4L261.0 322.8L251.4 331.0L243.0 339.4L236.0 342.0L234.8 334.0L241.7 327.0L247.3 320.0ZM211.0 359.0L219.5 356.0L221.0 364.4L215.3 371.4L208.4 374.0L201.4 381.0L198.7 379.7L202.8 372.8L209.8 367.0Z" fill="#b3d1ff"/><path d="M89.0 267.0L96.0 261.0L104.0 256.0L112.0 249.0L120.0 243.0L128.0 235.0L132.0 234.0L131.0 241.0L124.0 250.0L116.0 254.0L108.0 257.0L100.0 262.0L92.0 267.0ZM124.0 228.0L130.0 226.0L137.0 224.5L140.0 225.5L136.0 229.0L130.0 231.0Z" fill="#a3c3f7"/><path d="M-2 297q5 2 3 10t-3 10z" fill="#a3c3f7"/><path d="M215.6 98.6L228.1 86.1L244.8 63.9L255.9 47.2L264.2 27.8L272.6 13.9L283.7 8.3L308.7 2.8L333.7 0.0M217.0 106.9L244.8 111.1L276.7 115.3M83.0 224.0L79.0 231.0L75.0 243.0L73.0 255.0L69.0 267.0L64.0 279.0L61.0 291.0L60.0 303.0L58.0 315.0L53.0 327.0L47.0 333.0L40.0 345.0L36.0 353.0M38.9 375.0L50.0 386.1L63.9 400.0L77.8 411.1L88.3 416.7M175.0 182.0L177.0 160.0L181.0 143.0" fill="none" stroke="#a9c7f7" stroke-width="1.700" stroke-linejoin="round" stroke-linecap="round" stroke-opacity=".9"/><path d="M78 221l6 3 6-3M100 92l3 12 -2 12 4 14" fill="none" stroke="#a9c7f7" stroke-width="1"/><path d="M109.7 0.0L106.9 11.1L104.2 19.4L100.0 30.6L95.8 41.7L97.2 45.8L99.4 54.2L100.0 63.9L98.6 69.4L100.6 77.8L99.4 86.1L100.0 93.9L108.3 95.8L119.4 97.2L127.8 97.8L134.7 94.4L140.3 98.6L148.6 102.8L152.2 111.1L153.3 122.2L157.8 133.3L159.7 138.9L169.4 140.3L181.9 143.1L183.9 150.0L181.9 161.1L177.8 172.2L175.6 181.9M95.8 41.7L65.3 26.4L19.4 33.3L8.3 41.7L1.4 58.3L-2.8 72.2M-2.8 102.8L8.3 113.9L19.4 126.4L30.6 136.1L44.4 141.7L55.6 145.8L69.4 155.6L80.6 162.5L94.4 168.1L106.9 173.6M107.0 174.0L104.0 183.0L98.0 191.0L94.0 199.0L92.0 209.0L86.0 217.0L83.0 224.0L94.0 225.0L106.0 226.0L118.0 229.0L128.0 230.0L136.0 231.0L142.0 226.0L149.0 228.0L154.0 221.0L162.0 216.0L168.0 211.0L172.0 205.0L175.0 195.0L176.0 183.0M183.0 143.0L182.0 153.0L179.0 165.0L176.0 176.0L176.0 183.0M176.0 183.0L184.0 181.0L190.0 182.0L194.0 189.0L197.0 199.0L197.0 211.0L194.0 219.0L184.0 225.0L176.0 231.0L166.0 237.0L158.0 243.0L150.0 251.0L146.0 255.0L140.0 263.0L132.0 271.0L124.0 281.0L118.0 289.0L112.0 295.0L108.0 300.0M108.0 300.0L104.0 307.0L101.0 315.0L100.0 325.0L101.0 333.0L97.0 343.0L95.0 353.0L95.8 344.4L94.4 358.3L95.8 369.4L90.3 379.2L87.5 391.7L86.1 405.6L88.3 416.1M108.0 300.0L114.0 298.0L121.0 298.0L127.0 301.0L133.0 309.0L140.0 317.0L145.0 323.0L153.0 318.0L158.0 325.0L166.0 331.0L174.0 336.0L184.0 343.0L194.0 350.0L191.7 350.0L200.0 359.7L211.1 368.1L205.6 375.0L200.0 383.3L200.6 394.4" fill="none" stroke="#6f7072" stroke-width="1.150" stroke-linejoin="round"/><path d="M217 107l28 4 32 4 10 7 3 8 11 9 8 16 15 11M183 204l25 -3 20 4 22 -3 20 5 25 -2 18 -6M197 203l-5 8M222 250l20 -8 22 4 18 -3 14 8 12 10M265 57l30 12 25 5 22 18 30 8 25-4 20 6" fill="none" stroke="#9a9a9a" stroke-width=".8" stroke-dasharray="3 2" stroke-opacity=".75"/><circle cx="237" cy="127.2" r="15.8" fill="url(#hg)" opacity="0.85"/><path d="M244.4 109.0L229.6 145.4" stroke="#86f52c" stroke-width="1.600" stroke-opacity="0.38" stroke-linecap="round" filter="url(#blur1)"/><path d="M250.5 112.9L223.5 141.5" stroke="#86f52c" stroke-width="1.600" stroke-opacity="0.38" stroke-linecap="round" filter="url(#blur1)"/><circle cx="252.6" cy="123.6" r="15.8" fill="url(#hg)" opacity="0.85"/><path d="M268.3 111.8L236.9 135.4" stroke="#86f52c" stroke-width="1.600" stroke-opacity="0.38" stroke-linecap="round" filter="url(#blur1)"/><path d="M272.0 120.0L233.2 127.2" stroke="#86f52c" stroke-width="1.600" stroke-opacity="0.38" stroke-linecap="round" filter="url(#blur1)"/><circle cx="225.3" cy="143.6" r="10.5" fill="url(#hg)" opacity="0.70"/><path d="M234.3 134.0L216.3 153.2" stroke="#86f52c" stroke-width="1.600" stroke-opacity="0.30" stroke-linecap="round" filter="url(#blur1)"/><path d="M238.0 140.4L212.6 146.8" stroke="#86f52c" stroke-width="1.600" stroke-opacity="0.30" stroke-linecap="round" filter="url(#blur1)"/><circle cx="279.5" cy="136" r="12.2" fill="url(#hg)" opacity="0.70"/><path d="M264.3 134.6L294.7 137.4" stroke="#86f52c" stroke-width="1.600" stroke-opacity="0.30" stroke-linecap="round" filter="url(#blur1)"/><path d="M277.8 120.8L281.2 151.2" stroke="#86f52c" stroke-width="1.600" stroke-opacity="0.30" stroke-linecap="round" filter="url(#blur1)"/><circle cx="281" cy="122" r="8.8" fill="url(#hg)" opacity="0.40"/><circle cx="246" cy="176.4" r="7.0" fill="url(#hg)" opacity="0.50"/><circle cx="260" cy="158" r="8.8" fill="url(#hg)" opacity="0.35"/><circle cx="297" cy="178" r="14.0" fill="url(#hg)" opacity="1.00"/><path d="M314.2 174.9L279.8 181.1" stroke="#86f52c" stroke-width="1.600" stroke-opacity="0.55" stroke-linecap="round" filter="url(#blur1)"/><path d="M304.9 162.4L289.1 193.6" stroke="#86f52c" stroke-width="1.600" stroke-opacity="0.55" stroke-linecap="round" filter="url(#blur1)"/><circle cx="307.3" cy="198.6" r="10.5" fill="url(#hg)" opacity="0.70"/><path d="M319.8 194.6L294.8 202.6" stroke="#86f52c" stroke-width="1.600" stroke-opacity="0.30" stroke-linecap="round" filter="url(#blur1)"/><path d="M295.0 194.0L319.6 203.2" stroke="#86f52c" stroke-width="1.600" stroke-opacity="0.30" stroke-linecap="round" filter="url(#blur1)"/><circle cx="300.3" cy="213.9" r="14.0" fill="url(#hg)" opacity="0.88"/><path d="M298.6 196.5L302.0 231.3" stroke="#86f52c" stroke-width="1.600" stroke-opacity="0.39" stroke-linecap="round" filter="url(#blur1)"/><path d="M287.8 201.7L312.8 226.1" stroke="#86f52c" stroke-width="1.600" stroke-opacity="0.39" stroke-linecap="round" filter="url(#blur1)"/><circle cx="310" cy="215.5" r="12.2" fill="url(#hg)" opacity="0.88"/><path d="M312.1 200.3L307.9 230.7" stroke="#86f52c" stroke-width="1.600" stroke-opacity="0.39" stroke-linecap="round" filter="url(#blur1)"/><path d="M313.5 200.6L306.5 230.4" stroke="#86f52c" stroke-width="1.600" stroke-opacity="0.39" stroke-linecap="round" filter="url(#blur1)"/><circle cx="312.6" cy="232.3" r="14.0" fill="url(#hg)" opacity="1.00"/><path d="M295.1 231.6L330.1 233.0" stroke="#86f52c" stroke-width="1.600" stroke-opacity="0.50" stroke-linecap="round" filter="url(#blur1)"/><path d="M299.0 221.3L326.2 243.3" stroke="#86f52c" stroke-width="1.600" stroke-opacity="0.50" stroke-linecap="round" filter="url(#blur1)"/><circle cx="279.5" cy="220.8" r="8.8" fill="url(#hg)" opacity="0.60"/><path d="M272.5 212.4L286.5 229.2" stroke="#86f52c" stroke-width="1.600" stroke-opacity="0.25" stroke-linecap="round" filter="url(#blur1)"/><path d="M290.1 217.9L268.9 223.7" stroke="#86f52c" stroke-width="1.600" stroke-opacity="0.25" stroke-linecap="round" filter="url(#blur1)"/><circle cx="256" cy="211" r="8.8" fill="url(#hg)" opacity="0.35"/><circle cx="225" cy="247" r="10.5" fill="url(#hg)" opacity="0.60"/><path d="M234.7 238.2L215.3 255.8" stroke="#86f52c" stroke-width="1.600" stroke-opacity="0.25" stroke-linecap="round" filter="url(#blur1)"/><path d="M213.5 240.7L236.5 253.3" stroke="#86f52c" stroke-width="1.600" stroke-opacity="0.25" stroke-linecap="round" filter="url(#blur1)"/><circle cx="272.5" cy="237" r="7.0" fill="url(#hg)" opacity="0.50"/><circle cx="198.7" cy="257.5" r="14.0" fill="url(#hg)" opacity="1.00"/><path d="M212.8 247.1L184.6 267.9" stroke="#86f52c" stroke-width="1.600" stroke-opacity="0.55" stroke-linecap="round" filter="url(#blur1)"/><path d="M182.8 250.1L214.6 264.9" stroke="#86f52c" stroke-width="1.600" stroke-opacity="0.55" stroke-linecap="round" filter="url(#blur1)"/><circle cx="179" cy="239.4" r="8.8" fill="url(#hg)" opacity="0.40"/><circle cx="282" cy="249" r="7.0" fill="url(#hg)" opacity="0.50"/><circle cx="254" cy="268.6" r="12.2" fill="url(#hg)" opacity="0.70"/><path d="M259.5 254.3L248.5 282.9" stroke="#86f52c" stroke-width="1.600" stroke-opacity="0.30" stroke-linecap="round" filter="url(#blur1)"/><path d="M239.9 262.7L268.1 274.5" stroke="#86f52c" stroke-width="1.600" stroke-opacity="0.30" stroke-linecap="round" filter="url(#blur1)"/><circle cx="253" cy="291" r="15.8" fill="url(#hg)" opacity="1.00"/><path d="M233.3 290.9L272.7 291.1" stroke="#86f52c" stroke-width="1.600" stroke-opacity="0.45" stroke-linecap="round" filter="url(#blur1)"/><path d="M271.1 283.2L234.9 298.8" stroke="#86f52c" stroke-width="1.600" stroke-opacity="0.45" stroke-linecap="round" filter="url(#blur1)"/><circle cx="193" cy="286.5" r="12.2" fill="url(#hg)" opacity="0.95"/><path d="M180.9 277.1L205.1 295.9" stroke="#86f52c" stroke-width="1.600" stroke-opacity="0.42" stroke-linecap="round" filter="url(#blur1)"/><path d="M181.1 276.9L204.9 296.1" stroke="#86f52c" stroke-width="1.600" stroke-opacity="0.42" stroke-linecap="round" filter="url(#blur1)"/><circle cx="169.5" cy="274" r="8.8" fill="url(#hg)" opacity="0.60"/><path d="M180.4 273.4L158.6 274.6" stroke="#86f52c" stroke-width="1.600" stroke-opacity="0.25" stroke-linecap="round" filter="url(#blur1)"/><path d="M179.6 269.7L159.4 278.3" stroke="#86f52c" stroke-width="1.600" stroke-opacity="0.25" stroke-linecap="round" filter="url(#blur1)"/><circle cx="225" cy="342" r="10.5" fill="url(#hg)" opacity="0.70"/><path d="M216.9 331.7L233.1 352.3" stroke="#86f52c" stroke-width="1.600" stroke-opacity="0.30" stroke-linecap="round" filter="url(#blur1)"/><path d="M238.0 340.4L212.0 343.6" stroke="#86f52c" stroke-width="1.600" stroke-opacity="0.30" stroke-linecap="round" filter="url(#blur1)"/><circle cx="232" cy="349" r="10.5" fill="url(#hg)" opacity="0.90"/><path d="M233.6 336.0L230.4 362.0" stroke="#86f52c" stroke-width="1.600" stroke-opacity="0.40" stroke-linecap="round" filter="url(#blur1)"/><path d="M238.9 337.9L225.1 360.1" stroke="#86f52c" stroke-width="1.600" stroke-opacity="0.40" stroke-linecap="round" filter="url(#blur1)"/><circle cx="204" cy="388.5" r="7.0" fill="url(#hg)" opacity="0.60"/><path d="M197.0 383.3L211.0 393.7" stroke="#86f52c" stroke-width="1.600" stroke-opacity="0.25" stroke-linecap="round" filter="url(#blur1)"/><path d="M212.6 386.9L195.4 390.1" stroke="#86f52c" stroke-width="1.600" stroke-opacity="0.25" stroke-linecap="round" filter="url(#blur1)"/><circle cx="184.8" cy="332" r="7.0" fill="url(#hg)" opacity="0.35"/><circle cx="180.6" cy="303" r="7.0" fill="url(#hg)" opacity="0.30"/><circle cx="118" cy="287.5" r="8.8" fill="url(#hg)" opacity="0.70"/><path d="M124.2 278.5L111.8 296.5" stroke="#86f52c" stroke-width="1.600" stroke-opacity="0.30" stroke-linecap="round" filter="url(#blur1)"/><path d="M128.9 286.3L107.1 288.7" stroke="#86f52c" stroke-width="1.600" stroke-opacity="0.30" stroke-linecap="round" filter="url(#blur1)"/><circle cx="226" cy="145" r="12.2" fill="url(#hg)" opacity="0.80"/><path d="M240.5 140.0L211.5 150.0" stroke="#86f52c" stroke-width="1.600" stroke-opacity="0.35" stroke-linecap="round" filter="url(#blur1)"/><path d="M216.9 132.7L235.1 157.3" stroke="#86f52c" stroke-width="1.600" stroke-opacity="0.35" stroke-linecap="round" filter="url(#blur1)"/><circle cx="200" cy="164" r="12.2" fill="url(#hg)" opacity="0.80"/><path d="M193.5 150.1L206.5 177.9" stroke="#86f52c" stroke-width="1.600" stroke-opacity="0.35" stroke-linecap="round" filter="url(#blur1)"/><path d="M186.7 156.4L213.3 171.6" stroke="#86f52c" stroke-width="1.600" stroke-opacity="0.35" stroke-linecap="round" filter="url(#blur1)"/><circle cx="277" cy="170" r="10.5" fill="url(#hg)" opacity="0.60"/><path d="M265.2 164.2L288.8 175.8" stroke="#86f52c" stroke-width="1.600" stroke-opacity="0.25" stroke-linecap="round" filter="url(#blur1)"/><path d="M264.1 167.3L289.9 172.7" stroke="#86f52c" stroke-width="1.600" stroke-opacity="0.25" stroke-linecap="round" filter="url(#blur1)"/><circle cx="210" cy="193" r="8.8" fill="url(#hg)" opacity="0.35"/><circle cx="217" cy="198" r="8.8" fill="url(#hg)" opacity="0.35"/><circle cx="217" cy="220" r="8.8" fill="url(#hg)" opacity="0.35"/><circle cx="225" cy="287" r="7.0" fill="url(#hg)" opacity="0.35"/><circle cx="186" cy="330.6" r="7.0" fill="url(#hg)" opacity="0.35"/><circle cx="247" cy="176" r="7.0" fill="url(#hg)" opacity="0.50"/><circle cx="297" cy="178" r="7.6" fill="url(#hy)" opacity="1.00"/><circle cx="297" cy="178" r="4.0" fill="url(#hr)"/><circle cx="312.6" cy="232.3" r="5.0" fill="url(#hy)" opacity="0.90"/><circle cx="198.7" cy="257.5" r="7.6" fill="url(#hy)" opacity="1.00"/><circle cx="198.7" cy="257.5" r="4.0" fill="url(#hr)"/><circle cx="253" cy="291" r="5.6" fill="url(#hy)" opacity="0.80"/><circle cx="193" cy="286.5" r="4.3" fill="url(#hy)" opacity="0.75"/><circle cx="232" cy="349" r="3.7" fill="url(#hy)" opacity="0.70"/><text x="0.5" y="6.5" font-size="11.7" font-weight="normal" text-anchor="start" stroke="#333" stroke-width=".35" fill="none" stroke="#fff" stroke-width="2.2" stroke-linejoin="round" stroke-opacity="0.8">uz</text><text x="0.5" y="6.5" font-size="11.7" font-weight="normal" text-anchor="start" stroke="#333" stroke-width=".35" fill="#333">uz</text><text x="0.5" y="19.0" font-size="11.7" font-weight="normal" text-anchor="start" stroke="#333" stroke-width=".35" fill="none" stroke="#fff" stroke-width="2.2" stroke-linejoin="round" stroke-opacity="0.8">rra</text><text x="0.5" y="19.0" font-size="11.7" font-weight="normal" text-anchor="start" stroke="#333" stroke-width=".35" fill="#333">rra</text><text x="166.0" y="76.0" font-size="11.7" font-weight="normal" text-anchor="middle" stroke="#333" stroke-width=".1" fill="none" stroke="#fff" stroke-width="2.2" stroke-linejoin="round" stroke-opacity="0.8">Mato Grosso</text><text x="166.0" y="76.0" font-size="11.7" font-weight="normal" text-anchor="middle" stroke="#333" stroke-width=".1" fill="#333">Mato Grosso</text><text x="166.7" y="88.5" font-size="11.7" font-weight="normal" text-anchor="middle" stroke="#333" stroke-width=".1" fill="none" stroke="#fff" stroke-width="2.2" stroke-linejoin="round" stroke-opacity="0.8">do Sul</text><text x="166.7" y="88.5" font-size="11.7" font-weight="normal" text-anchor="middle" stroke="#333" stroke-width=".1" fill="#333">do Sul</text><text x="89.0" y="128.0" font-size="13" font-weight="bold" text-anchor="middle"  fill="none" stroke="#fff" stroke-width="2.6" stroke-linejoin="round" stroke-opacity="0.8">Paraguay</text><text x="89.0" y="128.0" font-size="13" font-weight="bold" text-anchor="middle"  fill="#333">Paraguay</text><text x="143.6" y="375.0" font-size="11.5" font-weight="bold" text-anchor="middle"  fill="none" stroke="#fff" stroke-width="2.6" stroke-linejoin="round" stroke-opacity="0.8">Uruguay</text><text x="143.6" y="375.0" font-size="11.5" font-weight="bold" text-anchor="middle"  fill="#333">Uruguay</text><text x="303.0" y="106.0" font-size="11.7" font-weight="normal" text-anchor="middle" stroke="#333" stroke-width=".1" fill="none" stroke="#fff" stroke-width="2.2" stroke-linejoin="round" stroke-opacity="0.8">São Paulo</text><text x="303.0" y="106.0" font-size="11.7" font-weight="normal" text-anchor="middle" stroke="#333" stroke-width=".1" fill="#333">São Paulo</text><text x="232.0" y="165.5" font-size="11.7" font-weight="normal" text-anchor="middle" stroke="#333" stroke-width=".1" fill="none" stroke="#fff" stroke-width="2.2" stroke-linejoin="round" stroke-opacity="0.8">Paraná</text><text x="232.0" y="165.5" font-size="11.7" font-weight="normal" text-anchor="middle" stroke="#333" stroke-width=".1" fill="#333">Paraná</text><text x="258.0" y="223.0" font-size="11.7" font-weight="normal" text-anchor="middle" stroke="#333" stroke-width=".1" fill="none" stroke="#fff" stroke-width="2.2" stroke-linejoin="round" stroke-opacity="0.8">Santa</text><text x="258.0" y="223.0" font-size="11.7" font-weight="normal" text-anchor="middle" stroke="#333" stroke-width=".1" fill="#333">Santa</text><text x="257.3" y="236.5" font-size="11.7" font-weight="normal" text-anchor="middle" stroke="#333" stroke-width=".1" fill="none" stroke="#fff" stroke-width="2.2" stroke-linejoin="round" stroke-opacity="0.8">Catarina</text><text x="257.3" y="236.5" font-size="11.7" font-weight="normal" text-anchor="middle" stroke="#333" stroke-width=".1" fill="#333">Catarina</text><text x="215.4" y="266.5" font-size="11.7" font-weight="normal" text-anchor="middle" stroke="#333" stroke-width=".1" fill="none" stroke="#fff" stroke-width="2.2" stroke-linejoin="round" stroke-opacity="0.8">Rio Grande</text><text x="215.4" y="266.5" font-size="11.7" font-weight="normal" text-anchor="middle" stroke="#333" stroke-width=".1" fill="#333">Rio Grande</text><text x="214.7" y="280.0" font-size="11.7" font-weight="normal" text-anchor="middle" stroke="#333" stroke-width=".1" fill="none" stroke="#fff" stroke-width="2.2" stroke-linejoin="round" stroke-opacity="0.8">do Sul</text><text x="214.7" y="280.0" font-size="11.7" font-weight="normal" text-anchor="middle" stroke="#333" stroke-width=".1" fill="#333">do Sul</text><text x="417.8" y="24.5" font-size="11.7" font-weight="normal" text-anchor="middle" stroke="#333" stroke-width=".1" fill="none" stroke="#fff" stroke-width="2.2" stroke-linejoin="round" stroke-opacity="0.8">Belo</text><text x="417.8" y="24.5" font-size="11.7" font-weight="normal" text-anchor="middle" stroke="#333" stroke-width=".1" fill="#333">Belo</text><text x="417.8" y="37.0" font-size="11.7" font-weight="normal" text-anchor="middle" stroke="#333" stroke-width=".1" fill="none" stroke="#fff" stroke-width="2.2" stroke-linejoin="round" stroke-opacity="0.8">Horizonte</text><text x="417.8" y="37.0" font-size="11.7" font-weight="normal" text-anchor="middle" stroke="#333" stroke-width=".1" fill="#333">Horizonte</text><circle cx="417.800" cy="41.700" r="2.600" fill="#fff" stroke="#333" stroke-width="1.100"/><circle cx="107" cy="173.6" r="2.600" fill="#fff" stroke="#333" stroke-width="1.100"/><text x="107.0" y="168.1" font-size="11.7" font-weight="normal" text-anchor="middle" stroke="#333" stroke-width=".2" fill="none" stroke="#fff" stroke-width="2.4" stroke-linejoin="round" stroke-opacity="0.8">Asunción</text><text x="107.0" y="168.1" font-size="11.7" font-weight="normal" text-anchor="middle" stroke="#333" stroke-width=".2" fill="#333">Asunción</text><circle cx="356.4" cy="130" r="2.600" fill="#fff" stroke="#333" stroke-width="1.100"/><text x="357.4" y="125.0" font-size="11.7" font-weight="normal" text-anchor="middle" stroke="#333" stroke-width=".2" fill="none" stroke="#fff" stroke-width="2.4" stroke-linejoin="round" stroke-opacity="0.8">São Paulo</text><text x="357.4" y="125.0" font-size="11.7" font-weight="normal" text-anchor="middle" stroke="#333" stroke-width=".2" fill="#333">São Paulo</text><circle cx="435" cy="113.9" r="2.600" fill="#fff" stroke="#333" stroke-width="1.100"/><text x="435.0" y="113.9" font-size="11.7" font-weight="normal" text-anchor="middle" stroke="#333" stroke-width=".2" fill="none" stroke="#fff" stroke-width="2.4" stroke-linejoin="round" stroke-opacity="0.8"></text><text x="435.0" y="113.9" font-size="11.7" font-weight="normal" text-anchor="middle" stroke="#333" stroke-width=".2" fill="#333"></text><text x="418.0" y="129.0" font-size="11.7" font-weight="normal" text-anchor="start" stroke="#333" stroke-width=".1" fill="none" stroke="#fff" stroke-width="2.2" stroke-linejoin="round" stroke-opacity="0.8">Rio de</text><text x="418.0" y="129.0" font-size="11.7" font-weight="normal" text-anchor="start" stroke="#333" stroke-width=".1" fill="#333">Rio de</text><text x="414.5" y="142.0" font-size="11.7" font-weight="normal" text-anchor="start" stroke="#333" stroke-width=".1" fill="none" stroke="#fff" stroke-width="2.2" stroke-linejoin="round" stroke-opacity="0.8">Janeiro</text><text x="414.5" y="142.0" font-size="11.7" font-weight="normal" text-anchor="start" stroke="#333" stroke-width=".1" fill="#333">Janeiro</text><text x="296.7" y="172.0" font-size="11.7" font-weight="normal" text-anchor="middle" stroke="#333" stroke-width=".1" fill="none" stroke="#fff" stroke-width="2.2" stroke-linejoin="round" stroke-opacity="0.8">Curitiba</text><text x="296.7" y="172.0" font-size="11.7" font-weight="normal" text-anchor="middle" stroke="#333" stroke-width=".1" fill="#333">Curitiba</text><circle cx="253" cy="295.500" r="2.300" fill="#f2e23a" stroke="#8a7a1a" stroke-width=".9"/><text x="252.3" y="309.5" font-size="11.7" font-weight="normal" text-anchor="middle" stroke="#333" stroke-width=".1" fill="none" stroke="#fff" stroke-width="2.2" stroke-linejoin="round" stroke-opacity="0.8">Porto Alegre</text><text x="252.3" y="309.5" font-size="11.7" font-weight="normal" text-anchor="middle" stroke="#333" stroke-width=".1" fill="#333">Porto Alegre</text><circle cx="38" cy="373.6" r="2.600" fill="#fff" stroke="#333" stroke-width="1.100"/><text x="38.0" y="368.1" font-size="11.7" font-weight="normal" text-anchor="middle" stroke="#333" stroke-width=".2" fill="none" stroke="#fff" stroke-width="2.4" stroke-linejoin="round" stroke-opacity="0.8">Rosario</text><text x="38.0" y="368.1" font-size="11.7" font-weight="normal" text-anchor="middle" stroke="#333" stroke-width=".2" fill="#333">Rosario</text><circle cx="88.9" cy="418.9" r="2.600" fill="#fff" stroke="#333" stroke-width="1.100"/><text x="88.9" y="400.1" font-size="11.7" font-weight="normal" text-anchor="middle" stroke="#333" stroke-width=".2" fill="none" stroke="#fff" stroke-width="2.4" stroke-linejoin="round" stroke-opacity="0.8">Buenos</text><text x="88.9" y="400.1" font-size="11.7" font-weight="normal" text-anchor="middle" stroke="#333" stroke-width=".2" fill="#333">Buenos</text><text x="88.9" y="412.9" font-size="11.7" font-weight="normal" text-anchor="middle" stroke="#333" stroke-width=".2" fill="none" stroke="#fff" stroke-width="2.4" stroke-linejoin="round" stroke-opacity="0.8">Aires</text><text x="88.9" y="412.9" font-size="11.7" font-weight="normal" text-anchor="middle" stroke="#333" stroke-width=".2" fill="#333">Aires</text><circle cx="138.9" cy="427" r="2.600" fill="#fff" stroke="#333" stroke-width="1.100"/><text x="139.9" y="440.5" font-size="11.7" font-weight="normal" text-anchor="middle" stroke="#333" stroke-width=".2" fill="none" stroke="#fff" stroke-width="2.4" stroke-linejoin="round" stroke-opacity="0.8">Montevideo</text><text x="139.9" y="440.5" font-size="11.7" font-weight="normal" text-anchor="middle" stroke="#333" stroke-width=".2" fill="#333">Montevideo</text></svg><svg style="position:absolute;left:16px;top:16px" width="56" height="58" viewBox="-28 -28 56 58"><circle r="25" cy="1.200" fill="rgba(0,0,0,.22)" filter="url(#blur1)"/><circle r="25" fill="#fff"/><g fill="none" stroke="#777" stroke-width="2.800"><path d="M-5.500 -11l5.500-5.500 5.500 5.500"/><path d="M-5.500 11l5.500 5.500 5.500-5.500"/><path d="M-11 -5.500l-5.500 5.500 5.500 5.500"/><path d="M11 -5.500l5.500 5.500-5.500 5.500"/></g></svg><div style="position:absolute;left:35.5px;top:92px;width:16.500px;height:33px;background:#fff;border-radius:2px;box-shadow:0 1px 3px rgba(0,0,0,.45)"><svg width="17" height="33" viewBox="0 0 17 33" style="position:absolute;left:0;top:0"><defs><radialGradient id="pgh" cx=".4" cy=".35" r=".7"><stop offset="0" stop-color="#ffd34d"/><stop offset="1" stop-color="#f5a000"/></radialGradient></defs><path d="M2.600 12.100q0-1.500 1.500-1.500h8.500q1.500 0 1.500 1.500v7.900q0 1.100-1.100 1.100h-1.500v8q0 .9-.9.900H6.100q-.9 0-.9-.9v-8H3.700q-1.100 0-1.100-1.100z" fill="#f9b30f" stroke="#d18a06" stroke-width=".7"/><path d="M5.300 10.800h6L8.300 14.200z" fill="#ee5a48"/><circle cx="8.300" cy="7.100" r="3.800" fill="url(#pgh)" stroke="#d18a06" stroke-width=".7"/><path d="M6 15v14M10.600 15v14" stroke="#e39c08" stroke-width=".6" opacity=".6"/></svg></div><div style="position:absolute;left:42.5px;top:153.5px;width:2.400px;height:181px;background:#fff;border-left:1px solid #b5b5b5;border-right:1px solid #b5b5b5;box-sizing:content-box;margin-left:-.2px"></div><div class="zb" style="left:35.5px;top:137.5px"><svg width="17" height="17"><path d="M4.500 8.500h8M8.500 4.500v8" stroke="#666" stroke-width="1.800"/></svg></div><div class="zb" style="left:35.5px;top:333.5px"><svg width="17" height="17"><path d="M4.500 8.500h8" stroke="#666" stroke-width="2"/></svg></div><div class="zb" style="left:35.5px;top:283.5px;height:8px"><svg width="17" height="8"><path d="M4.500 4h8" stroke="#777" stroke-width="1.200"/></svg></div><div class="mtype" style="left:339.3px;width:42px"><b>Mapa</b></div><div class="mtype" style="left:380.5px;width:51.500px;border-left:0">Satélite</div><div class="attr" style="right:79.500px;width:81px">Dados do mapa</div><div class="attr" style="right:0;width:79px;border-left:1px solid #ccc">Termos de Uso</div><svg style="position:absolute;left:4px;top:463px" width="70" height="34" viewBox="0 0 70 34"><text x="2.500" y="23.500" font-family="Liberation Serif,serif" font-size="20.500" fill="#fff" stroke="rgba(90,100,110,.55)" stroke-width="1.800" stroke-linejoin="round" paint-order="stroke" letter-spacing="-.6">Google</text></svg></div></div>
<div class="panel" id="p2"><div class="ptitle">Mapa Vendas por Estado Mês Atual (Há&nbsp;&nbsp;1 minuto)</div><div class="map" id="m2"><svg width="437" height="347" viewBox="0 0 437 347" font-family="Liberation Sans,sans-serif"><defs><clipPath id="land2"><path d="M65.1 40.7L68.6 44.7L68.0 41.3L71.4 39.0L74.8 36.1L75.9 29.8L79.9 26.9L83.3 25.7L90.2 24.5L94.7 21.6L97.6 19.0L101.0 21.0L99.6 22.8L96.1 24.0L98.1 27.7L101.5 26.9L105.5 25.1L106.1 23.7L105.5 21.6L107.8 20.5L108.4 24.0L111.2 24.5L116.3 26.3L117.5 29.8L124.3 29.8L129.4 29.8L135.1 32.6L139.7 31.5L142.5 29.5L148.8 29.2L153.3 29.2L149.3 31.5L151.0 33.8L155.0 34.4L159.6 37.3L164.1 41.9L165.3 43.0L172.7 48.8L174.4 51.6L180.1 56.2L186.9 56.8L192.0 56.8L198.3 57.3L203.9 59.1L207.9 62.5L211.3 65.9L214.8 68.2L217.0 77.9L221.0 80.7L221.6 84.7L218.7 89.3L215.3 91.0L213.6 96.1L217.6 100.4L223.3 100.4L228.4 98.4L229.5 98.9L232.4 94.4L238.1 94.4L243.8 96.7L249.5 98.9L251.7 101.8L253.4 105.2L258.0 104.1L266.5 106.3L272.2 106.9L277.9 106.6L283.6 109.8L286.4 111.5L292.1 116.6L295.0 118.6L300.7 119.5L304.6 120.6L305.2 123.5L306.3 127.5L307.5 130.9L307.2 136.1L305.2 141.8L302.4 145.8L298.4 150.5L295.0 153.4L292.7 156.8L289.3 162.7L286.4 165.0L283.6 167.9L283.6 175.5L284.2 181.4L283.0 185.6L282.5 192.7L279.6 196.9L279.6 204.1L276.8 208.4L273.4 212.6L272.2 216.3L272.2 218.7L267.7 221.8L266.5 224.9L260.3 224.6L257.4 225.2L255.1 224.9L252.9 224.9L251.2 226.1L251.7 227.1L249.5 228.0L247.2 229.9L244.3 229.9L242.1 231.1L239.2 233.0L236.9 234.9L233.5 237.4L232.4 239.2L230.7 240.5L229.5 239.6L229.0 242.7L229.0 244.9L228.7 248.7L229.3 251.3L229.0 255.1L228.7 258.4L227.8 260.3L225.0 262.9L222.7 264.9L220.7 268.8L219.3 272.7L217.6 276.0L214.8 279.4L211.3 282.7L209.1 284.1L207.4 287.4L205.9 290.8L202.2 294.2L201.1 296.3L199.4 299.0L197.1 300.8L192.9 303.0L189.7 301.8L185.7 302.6L182.3 301.1L180.1 299.4L176.4 299.5L174.4 297.7L173.2 295.6L172.4 297.0L172.7 299.0L173.5 300.4L177.8 302.8L180.1 306.0L179.2 310.2L182.6 312.6L182.9 316.5L180.6 320.8L178.3 324.4L171.5 328.8L164.1 331.0L155.6 331.7L151.0 330.2L152.2 335.4L151.0 342.8L148.2 346.6L141.4 345.0L135.7 345.0L135.1 350.3L136.2 355.7L141.4 355.7L143.6 358.8L139.7 361.1L135.7 360.3L135.7 364.2L134.0 369.7L131.7 377.7L124.3 380.1L121.5 385.8L121.5 389.9L127.1 394.1L131.1 395.7L130.6 400.8L124.3 407.6L120.9 413.7L115.8 421.6L112.9 427.9L111.8 434.2L116.3 440.7L110.1 442.6L102.7 445.4L101.5 454.9L95.9 453.0L87.3 447.3L81.6 437.9L78.8 424.3L75.9 411.1L75.9 398.3L75.4 391.6L81.6 385.8L84.5 373.7L88.5 365.8L90.2 356.4L85.6 350.3L86.2 339.1L87.9 335.4L86.8 322.3L89.0 317.3L91.9 306.7L95.9 299.7L98.1 289.5L98.7 282.7L97.6 272.7L99.3 268.8L98.7 259.7L102.1 250.0L103.8 240.5L105.0 228.6L103.8 225.5L106.1 218.7L106.4 207.8L105.5 197.5L102.1 193.3L98.7 190.3L91.9 186.2L84.5 182.6L77.7 178.5L72.0 172.0L70.8 169.7L68.6 162.1L66.6 159.2L63.4 153.4L60.6 147.6L58.3 142.4L56.0 136.6L52.1 131.5L50.3 128.0L45.2 125.2L43.5 122.3L44.1 118.9L43.0 116.0L45.2 112.6L48.6 109.8L50.9 107.5L50.9 104.1L48.6 105.2L45.2 103.5L45.8 98.9L45.2 96.4L48.1 93.2L49.8 90.4L49.8 85.8L52.6 84.7L56.6 83.0L57.2 80.2L58.9 76.2L63.4 75.6L66.3 69.9L66.8 68.2L64.6 65.9L65.7 59.1L64.6 55.1L65.1 51.6L62.3 49.3L60.6 44.7L58.9 41.9L53.2 39.0L51.5 41.3L48.1 43.0L50.3 47.6L48.1 49.0L45.2 49.3L44.7 45.9L40.7 44.7L37.8 43.0L33.8 44.5L33.3 42.4L29.3 41.9L29.9 39.6L24.2 36.1L22.5 33.2L21.3 35.5L17.4 32.1L17.4 27.4L13.4 23.4L8.2 17.6L6.5 15.8L5.4 14.6L0.3 14.6L-5.4 12.9L-9.4 10.5L-14.5 10.0L-19.1 7.0L-23.6 1.7L-29.3 -2.4L-35.0 -3.0L-43.5 -0.1L-52.1 -3.0L-63.4 -7.8L-86.2 -19.7L-86.2 -101.9L-48.1 -101.9L-47.5 -72.4L-49.8 -59.7L-50.9 -39.8L-47.5 -30.0L-41.2 -20.9L-35.0 -17.3L-31.6 -14.6L-23.6 -16.1L-17.9 -17.6L-13.9 -19.1L-9.4 -24.9L-8.8 -31.8L-4.3 -33.7L4.8 -35.5L10.0 -34.9L11.7 -32.4L8.2 -27.0L7.7 -21.5L6.0 -15.5L4.3 -16.7L3.1 -11.3L1.4 -3.6L-0.3 -1.2L3.7 -0.1L7.1 -0.9L13.4 -0.6L19.1 -1.2L24.7 -0.6L28.7 2.3L32.1 4.7L30.4 12.9L29.9 18.7L29.3 24.0L29.9 28.0L33.3 33.2L35.6 35.5L37.8 39.0L41.8 40.1L45.8 39.6L50.9 37.3L56.0 36.1L61.7 37.3ZM22.5 -37.3L27.6 -42.3L33.3 -44.1L36.7 -45.0L43.5 -44.7L50.3 -43.5L56.0 -40.4L61.7 -39.8L67.4 -35.5L73.1 -32.4L78.8 -30.0L83.6 -27.3L78.8 -25.2L73.1 -25.5L63.4 -24.9L66.3 -28.8L61.7 -30.0L58.9 -31.8L53.2 -36.1L47.5 -38.3L40.1 -39.2L39.0 -40.4L34.4 -42.3L31.0 -39.2L27.6 -37.3ZM59.4 -15.5L64.6 -16.7L71.4 -14.6L72.0 -13.1L66.3 -11.9L60.6 -13.7ZM81.6 -16.1L87.9 -17.0L91.3 -16.7L93.6 -17.3L91.3 -20.3L87.9 -23.9L91.3 -25.5L97.6 -24.6L102.7 -25.2L107.8 -23.9L111.8 -21.5L114.6 -19.4L116.6 -17.3L114.6 -14.9L107.8 -16.1L104.4 -14.9L101.0 -14.3L99.3 -11.3L97.0 -13.7L94.2 -14.9L90.2 -14.9L85.6 -14.0ZM123.2 -16.7L132.3 -16.1L131.7 -13.7L123.2 -13.4ZM153.3 29.2L159.0 28.6L158.4 32.6L153.3 32.9ZM30.4 -101.9L34.4 -79.5L35.0 -74.3L38.4 -68.6L40.1 -62.9L44.1 -57.2L48.1 -57.8L49.8 -61.6L50.3 -67.9L46.9 -78.2L43.5 -88.6L44.7 -101.9ZM60.0 -57.2L62.9 -56.6L64.0 -51.6L60.6 -52.2ZM218.2 91.5L223.9 91.0L230.1 92.1L229.0 97.2L223.3 99.5L217.6 99.5L216.5 95.5ZM115.2 444.4L117.5 450.1L124.3 458.8L134.5 463.7L127.1 467.6L115.2 466.6L104.4 468.6L95.9 461.7L101.5 456.8L105.0 447.3L110.1 444.4ZM83.3 364.2L84.5 354.1L87.3 353.4L87.3 364.2ZM408.7 -25.8L405.9 5.8L409.9 15.8L410.5 19.9L417.3 26.3L421.3 29.8L427.5 36.1L430.4 41.9L434.3 48.2L440.0 51.6L448.6 56.2L459.9 65.3L477.0 61.9L505.5 61.9L505.5 -25.8Z"/></clipPath><linearGradient id="lgd" x1="0" y1="0" x2="1" y2="0"><stop offset="0" stop-color="#cfd0ec"/><stop offset=".45" stop-color="#8f90e4"/><stop offset="1" stop-color="#1c1cdb"/></linearGradient></defs><path d="M65.1 40.7L68.6 44.7L68.0 41.3L71.4 39.0L74.8 36.1L75.9 29.8L79.9 26.9L83.3 25.7L90.2 24.5L94.7 21.6L97.6 19.0L101.0 21.0L99.6 22.8L96.1 24.0L98.1 27.7L101.5 26.9L105.5 25.1L106.1 23.7L105.5 21.6L107.8 20.5L108.4 24.0L111.2 24.5L116.3 26.3L117.5 29.8L124.3 29.8L129.4 29.8L135.1 32.6L139.7 31.5L142.5 29.5L148.8 29.2L153.3 29.2L149.3 31.5L151.0 33.8L155.0 34.4L159.6 37.3L164.1 41.9L165.3 43.0L172.7 48.8L174.4 51.6L180.1 56.2L186.9 56.8L192.0 56.8L198.3 57.3L203.9 59.1L207.9 62.5L211.3 65.9L214.8 68.2L217.0 77.9L221.0 80.7L221.6 84.7L218.7 89.3L215.3 91.0L213.6 96.1L217.6 100.4L223.3 100.4L228.4 98.4L229.5 98.9L232.4 94.4L238.1 94.4L243.8 96.7L249.5 98.9L251.7 101.8L253.4 105.2L258.0 104.1L266.5 106.3L272.2 106.9L277.9 106.6L283.6 109.8L286.4 111.5L292.1 116.6L295.0 118.6L300.7 119.5L304.6 120.6L305.2 123.5L306.3 127.5L307.5 130.9L307.2 136.1L305.2 141.8L302.4 145.8L298.4 150.5L295.0 153.4L292.7 156.8L289.3 162.7L286.4 165.0L283.6 167.9L283.6 175.5L284.2 181.4L283.0 185.6L282.5 192.7L279.6 196.9L279.6 204.1L276.8 208.4L273.4 212.6L272.2 216.3L272.2 218.7L267.7 221.8L266.5 224.9L260.3 224.6L257.4 225.2L255.1 224.9L252.9 224.9L251.2 226.1L251.7 227.1L249.5 228.0L247.2 229.9L244.3 229.9L242.1 231.1L239.2 233.0L236.9 234.9L233.5 237.4L232.4 239.2L230.7 240.5L229.5 239.6L229.0 242.7L229.0 244.9L228.7 248.7L229.3 251.3L229.0 255.1L228.7 258.4L227.8 260.3L225.0 262.9L222.7 264.9L220.7 268.8L219.3 272.7L217.6 276.0L214.8 279.4L211.3 282.7L209.1 284.1L207.4 287.4L205.9 290.8L202.2 294.2L201.1 296.3L199.4 299.0L197.1 300.8L192.9 303.0L189.7 301.8L185.7 302.6L182.3 301.1L180.1 299.4L176.4 299.5L174.4 297.7L173.2 295.6L172.4 297.0L172.7 299.0L173.5 300.4L177.8 302.8L180.1 306.0L179.2 310.2L182.6 312.6L182.9 316.5L180.6 320.8L178.3 324.4L171.5 328.8L164.1 331.0L155.6 331.7L151.0 330.2L152.2 335.4L151.0 342.8L148.2 346.6L141.4 345.0L135.7 345.0L135.1 350.3L136.2 355.7L141.4 355.7L143.6 358.8L139.7 361.1L135.7 360.3L135.7 364.2L134.0 369.7L131.7 377.7L124.3 380.1L121.5 385.8L121.5 389.9L127.1 394.1L131.1 395.7L130.6 400.8L124.3 407.6L120.9 413.7L115.8 421.6L112.9 427.9L111.8 434.2L116.3 440.7L110.1 442.6L102.7 445.4L101.5 454.9L95.9 453.0L87.3 447.3L81.6 437.9L78.8 424.3L75.9 411.1L75.9 398.3L75.4 391.6L81.6 385.8L84.5 373.7L88.5 365.8L90.2 356.4L85.6 350.3L86.2 339.1L87.9 335.4L86.8 322.3L89.0 317.3L91.9 306.7L95.9 299.7L98.1 289.5L98.7 282.7L97.6 272.7L99.3 268.8L98.7 259.7L102.1 250.0L103.8 240.5L105.0 228.6L103.8 225.5L106.1 218.7L106.4 207.8L105.5 197.5L102.1 193.3L98.7 190.3L91.9 186.2L84.5 182.6L77.7 178.5L72.0 172.0L70.8 169.7L68.6 162.1L66.6 159.2L63.4 153.4L60.6 147.6L58.3 142.4L56.0 136.6L52.1 131.5L50.3 128.0L45.2 125.2L43.5 122.3L44.1 118.9L43.0 116.0L45.2 112.6L48.6 109.8L50.9 107.5L50.9 104.1L48.6 105.2L45.2 103.5L45.8 98.9L45.2 96.4L48.1 93.2L49.8 90.4L49.8 85.8L52.6 84.7L56.6 83.0L57.2 80.2L58.9 76.2L63.4 75.6L66.3 69.9L66.8 68.2L64.6 65.9L65.7 59.1L64.6 55.1L65.1 51.6L62.3 49.3L60.6 44.7L58.9 41.9L53.2 39.0L51.5 41.3L48.1 43.0L50.3 47.6L48.1 49.0L45.2 49.3L44.7 45.9L40.7 44.7L37.8 43.0L33.8 44.5L33.3 42.4L29.3 41.9L29.9 39.6L24.2 36.1L22.5 33.2L21.3 35.5L17.4 32.1L17.4 27.4L13.4 23.4L8.2 17.6L6.5 15.8L5.4 14.6L0.3 14.6L-5.4 12.9L-9.4 10.5L-14.5 10.0L-19.1 7.0L-23.6 1.7L-29.3 -2.4L-35.0 -3.0L-43.5 -0.1L-52.1 -3.0L-63.4 -7.8L-86.2 -19.7L-86.2 -101.9L-48.1 -101.9L-47.5 -72.4L-49.8 -59.7L-50.9 -39.8L-47.5 -30.0L-41.2 -20.9L-35.0 -17.3L-31.6 -14.6L-23.6 -16.1L-17.9 -17.6L-13.9 -19.1L-9.4 -24.9L-8.8 -31.8L-4.3 -33.7L4.8 -35.5L10.0 -34.9L11.7 -32.4L8.2 -27.0L7.7 -21.5L6.0 -15.5L4.3 -16.7L3.1 -11.3L1.4 -3.6L-0.3 -1.2L3.7 -0.1L7.1 -0.9L13.4 -0.6L19.1 -1.2L24.7 -0.6L28.7 2.3L32.1 4.7L30.4 12.9L29.9 18.7L29.3 24.0L29.9 28.0L33.3 33.2L35.6 35.5L37.8 39.0L41.8 40.1L45.8 39.6L50.9 37.3L56.0 36.1L61.7 37.3ZM22.5 -37.3L27.6 -42.3L33.3 -44.1L36.7 -45.0L43.5 -44.7L50.3 -43.5L56.0 -40.4L61.7 -39.8L67.4 -35.5L73.1 -32.4L78.8 -30.0L83.6 -27.3L78.8 -25.2L73.1 -25.5L63.4 -24.9L66.3 -28.8L61.7 -30.0L58.9 -31.8L53.2 -36.1L47.5 -38.3L40.1 -39.2L39.0 -40.4L34.4 -42.3L31.0 -39.2L27.6 -37.3ZM59.4 -15.5L64.6 -16.7L71.4 -14.6L72.0 -13.1L66.3 -11.9L60.6 -13.7ZM81.6 -16.1L87.9 -17.0L91.3 -16.7L93.6 -17.3L91.3 -20.3L87.9 -23.9L91.3 -25.5L97.6 -24.6L102.7 -25.2L107.8 -23.9L111.8 -21.5L114.6 -19.4L116.6 -17.3L114.6 -14.9L107.8 -16.1L104.4 -14.9L101.0 -14.3L99.3 -11.3L97.0 -13.7L94.2 -14.9L90.2 -14.9L85.6 -14.0ZM123.2 -16.7L132.3 -16.1L131.7 -13.7L123.2 -13.4ZM153.3 29.2L159.0 28.6L158.4 32.6L153.3 32.9ZM30.4 -101.9L34.4 -79.5L35.0 -74.3L38.4 -68.6L40.1 -62.9L44.1 -57.2L48.1 -57.8L49.8 -61.6L50.3 -67.9L46.9 -78.2L43.5 -88.6L44.7 -101.9ZM60.0 -57.2L62.9 -56.6L64.0 -51.6L60.6 -52.2ZM218.2 91.5L223.9 91.0L230.1 92.1L229.0 97.2L223.3 99.5L217.6 99.5L216.5 95.5ZM115.2 444.4L117.5 450.1L124.3 458.8L134.5 463.7L127.1 467.6L115.2 466.6L104.4 468.6L95.9 461.7L101.5 456.8L105.0 447.3L110.1 444.4ZM83.3 364.2L84.5 354.1L87.3 353.4L87.3 364.2ZM408.7 -25.8L405.9 5.8L409.9 15.8L410.5 19.9L417.3 26.3L421.3 29.8L427.5 36.1L430.4 41.9L434.3 48.2L440.0 51.6L448.6 56.2L459.9 65.3L477.0 61.9L505.5 61.9L505.5 -25.8Z" fill="none" stroke="#c6dcff" stroke-width="9" filter="url(#blur3)"/><g clip-path="url(#land2)"><rect x="-20" y="-20" width="500" height="600" fill="#c2dcad"/><ellipse cx="272.2" cy="141.8" rx="52" ry="50" fill="#dde9c4" fill-opacity="0.95" filter="url(#blur12)" transform="rotate(0 272.2 141.8)"/><ellipse cx="243.8" cy="188.6" rx="50" ry="50" fill="#d5e6bb" fill-opacity="0.8" filter="url(#blur12)" transform="rotate(0 243.8 188.6)"/><ellipse cx="221.0" cy="237.4" rx="40" ry="35" fill="#d2e4b8" fill-opacity="0.7" filter="url(#blur12)" transform="rotate(0 221.0 237.4)"/><ellipse cx="198.3" cy="272.7" rx="32" ry="30" fill="#d9e7c0" fill-opacity="0.9" filter="url(#blur12)" transform="rotate(0 198.3 272.7)"/><ellipse cx="130.0" cy="47.6" rx="45" ry="16" fill="#d6e6bc" fill-opacity="0.9" filter="url(#blur12)" transform="rotate(0 130.0 47.6)"/><ellipse cx="158.4" cy="209.6" rx="35" ry="28" fill="#d3e4b6" fill-opacity="0.85" filter="url(#blur12)" transform="rotate(0 158.4 209.6)"/><ellipse cx="147.1" cy="282.7" rx="46" ry="52" fill="#dee9c3" fill-opacity="1" filter="url(#blur12)" transform="rotate(0 147.1 282.7)"/><path d="M121.5 256.4L118.6 282.7L115.8 310.2" fill="none" stroke="#e8e8cf" stroke-width="10" stroke-opacity="0.9" stroke-linecap="round" stroke-linejoin="round" filter="url(#blur6)"/><path d="M118.6 317.3L119.8 331.7L121.5 346.6L115.8 369.7L112.9 394.1L107.2 419.8L110.1 442.6" fill="none" stroke="#ece8d0" stroke-width="34" stroke-opacity="1" stroke-linecap="round" stroke-linejoin="round" filter="url(#blur6)"/><path d="M90.2 39.0L75.9 59.1L67.4 81.9L58.3 98.9L57.2 116.0L62.9 136.1L73.1 153.4L87.3 170.8L104.4 182.6L117.5 197.5L121.5 218.7L117.5 243.7L110.1 269.4L107.2 296.3L102.7 324.4L98.7 354.1L95.9 385.8L91.3 419.8L95.9 447.3" fill="none" stroke="#e4e6cc" stroke-width="13" stroke-opacity="0.95" stroke-linecap="round" stroke-linejoin="round" filter="url(#blur3)"/><path d="M47.5 118.9L56.0 136.1L67.4 159.2L75.9 175.5L95.9 187.4L106.1 197.5L107.8 218.7L106.1 243.7L102.1 266.2" fill="none" stroke="#efe9d2" stroke-width="8" stroke-opacity="1" stroke-linecap="round" stroke-linejoin="round" filter="url(#blur3)"/><path d="M87.3 354.1L84.5 385.8L82.8 419.8L90.2 447.3" fill="none" stroke="#b4d3a4" stroke-width="9" stroke-opacity="1" stroke-linecap="round" stroke-linejoin="round" filter="url(#blur3)"/><path d="M87.9 394.1L87.9 413.7L89.0 428.8" fill="none" stroke="#fafafa" stroke-width="2.5" stroke-opacity="0.9" stroke-linecap="round" stroke-linejoin="round" filter="url(#blur1)"/><path d="M-17.9 1.1L-0.9 5.8L13.4 11.1L21.9 21.6L27.6 33.2L36.1 40.1" fill="none" stroke="#dfe9c9" stroke-width="7" stroke-opacity="0.95" stroke-linecap="round" stroke-linejoin="round" filter="url(#blur3)"/><path d="M-52.1 -25.8L-46.4 -10.7L-23.6 -4.8" fill="none" stroke="#e3e8cc" stroke-width="9" stroke-opacity="0.9" stroke-linecap="round" stroke-linejoin="round" filter="url(#blur3)"/><path d="M124.3 31.5L141.4 33.2" fill="none" stroke="#dde8c6" stroke-width="4" stroke-opacity="0.9" stroke-linecap="round" stroke-linejoin="round" filter="url(#blur3)"/><ellipse cx="56.0" cy="-37.9" rx="18" ry="4" fill="#d3e5bb" fill-opacity="0.8" filter="url(#blur3)" transform="rotate(-18 56.0 -37.9)"/><ellipse cx="104.4" cy="-19.7" rx="8" ry="3" fill="#d9e7c3" fill-opacity="0.8" filter="url(#blur3)" transform="rotate(0 104.4 -19.7)"/></g><path d="M99.6 22.8L95.9 26.9L93.0 30.3L90.2 37.3L91.3 38.4L93.6 42.4L93.0 47.6L95.9 50.5L103.3 49.9L110.6 55.6L121.5 55.1L119.8 60.2L119.8 65.9L122.6 71.0L119.8 74.5L123.2 77.3L125.2 83.6M57.2 82.4L61.7 85.3L65.1 88.1L71.4 88.1L77.1 91.0L82.2 93.2L86.8 97.8L90.7 104.1L97.0 102.9L105.5 104.6L107.2 105.8L103.3 112.0L107.5 114.3M48.6 109.8L48.6 113.2L48.1 115.7L52.6 115.7L56.0 118.9L59.4 112.0L60.6 109.8L62.9 107.5L69.7 105.2L75.4 99.2L77.1 95.5L77.1 91.0M109.5 153.1L114.6 162.1L113.5 164.4L112.9 169.1L113.5 172.0L110.6 175.5L111.8 178.5L110.1 179.7L112.9 183.8L109.5 190.3L110.1 191.5M110.1 191.5L105.0 196.6M110.1 191.5L112.9 195.1L113.5 200.5L115.8 202.9L114.6 207.2L115.8 212.0L117.5 215.7L119.2 223.7L123.2 223.7M123.2 223.7L128.3 217.5L134.5 219.4L139.7 223.7L141.9 218.7L148.2 218.7L149.0 220.3M149.0 220.3L151.2 212.9L151.2 210.0L154.2 204.3L164.1 202.3L169.2 202.6L174.4 205.4L174.6 207.5M149.0 220.3L158.4 229.9L169.8 234.2L177.2 239.2L177.8 241.1L173.8 248.7L172.1 251.9L177.8 252.6L183.5 252.9L187.4 252.3L192.0 249.4L194.3 243.7L194.8 241.1M177.8 270.8L176.4 276.0L174.9 282.7L174.4 289.5L173.2 295.6M123.2 223.7L124.3 224.9L122.6 231.1L116.9 234.2L115.8 238.6L116.3 244.9L116.9 249.4L112.4 254.5L108.9 259.7L107.2 264.9L107.8 270.8L104.4 276.7L105.5 282.1L107.2 289.5L108.4 295.6L105.5 301.8L105.0 306.7L101.5 313.7L101.0 320.8L102.1 328.8L99.3 331.7L97.6 336.1L97.0 342.8L96.4 350.3L97.3 355.7L95.3 361.9L97.6 368.1L100.4 373.7L98.1 380.9L97.0 389.9L94.2 398.3L93.0 406.8L87.9 415.4L90.2 426.1L94.2 426.1L93.6 434.2L95.9 437.9L107.2 437.9L116.3 441.2M164.1 41.9L160.1 47.6L162.4 50.5L157.9 52.2L156.2 56.5L160.1 60.8M180.1 56.2L179.5 61.9L176.1 67.6L175.5 70.5L179.5 71.6L184.0 79.3M198.3 57.3L195.7 61.9L197.1 68.8L198.3 70.5L194.8 77.3M35.6 35.5L33.8 44.5M65.1 40.7L62.3 49.3M29.3 28.0L17.9 26.9M32.1 4.4L23.0 5.3L17.4 10.5L12.2 11.1L8.8 15.8M6.0 13.5L2.0 10.0L-2.8 7.6M-2.8 7.6L-0.3 2.3L3.7 -0.1M-2.8 7.6L-7.1 11.4M-19.1 7.0L-19.1 2.3L-16.2 -2.4L-8.8 -2.4L-8.8 -4.2L-14.5 -9.3L-12.2 -9.3L-12.2 -12.5L-1.7 -12.5M-1.7 -12.5L-2.0 -1.2L-0.3 -1.2M-1.7 -12.5L3.1 -16.7M97.3 -23.9L97.6 -13.7" fill="none" stroke="#8f8f8f" stroke-width="0.9" stroke-linejoin="round" stroke-opacity="1"/><ellipse cx="110.6" cy="181.4" rx="2.200" ry="1.500" fill="#a9c8f5" transform="rotate(-40 110.6 181.4)"/><ellipse cx="149.3" cy="273.4" rx="2.600" ry="2" fill="#a9c8f5"/><ellipse cx="98.7" cy="34.4" rx="3" ry="4" fill="#b3d1ff"/><path d="M0 90.600H437" stroke="#b096cf" stroke-width="1.600" stroke-dasharray="4.500 3"/><path d="M211.3 65.9L209.6 68.8L206.2 76.2L201.1 77.3L194.8 77.3L187.4 79.0L186.9 79.9L184.0 79.3L179.5 79.0L175.5 81.9L170.4 83.6L165.8 80.2L164.7 76.7L166.4 71.0L165.3 69.9L167.0 67.6L164.1 64.8L164.1 61.9L160.1 60.8L156.2 64.8L152.7 67.1L148.2 67.6L147.1 69.3L141.4 67.1L138.0 67.1L140.2 71.6L141.4 76.2L144.8 77.9L141.4 79.6L138.5 83.0L132.8 85.8L128.3 86.1L125.2 83.6L123.7 80.7L119.2 80.4L112.9 80.7L108.4 80.7L108.1 84.3L111.8 84.7L112.4 86.7L107.0 87.3L107.0 91.5L110.6 96.1L110.6 98.4L107.5 114.3L103.3 114.3L90.7 119.5L89.0 124.6L86.2 129.7L84.5 132.6L86.2 135.5L90.2 141.8L94.7 147.6L101.5 147.6L103.8 144.7L103.8 153.4L109.5 153.1L115.2 153.9L126.0 147.0L133.4 145.8L134.0 152.8L134.0 157.4L139.1 161.5L147.1 162.7L152.7 166.8L158.4 167.9L161.8 169.7L163.0 183.8L173.2 184.4L173.8 190.3L177.2 193.3L178.3 195.7L176.6 200.5L174.6 207.5L176.4 211.4L176.1 219.4L182.3 220.3L188.6 220.6L190.3 231.1L196.6 231.4L194.8 241.1L199.1 241.5L200.2 245.2L199.4 251.0L194.8 253.2L188.0 259.0L185.2 262.9L177.8 270.8L182.3 270.1L186.9 274.7L189.2 275.4L197.7 282.1L202.2 286.8L203.4 288.1L201.1 290.5L202.2 294.2L205.9 290.8L207.4 287.4L209.1 284.1L211.3 282.7L214.8 279.4L217.6 276.0L219.3 272.7L220.7 268.8L222.7 264.9L225.0 262.9L227.8 260.3L228.7 258.4L229.0 255.1L229.3 251.3L228.7 248.7L229.0 244.9L229.0 242.7L229.5 239.6L230.7 240.5L232.4 239.2L233.5 237.4L236.9 234.9L239.2 233.0L242.1 231.1L244.3 229.9L247.2 229.9L249.5 228.0L251.7 227.1L251.2 226.1L252.9 224.9L255.1 224.9L257.4 225.2L260.3 224.6L266.5 224.9L267.7 221.8L272.2 218.7L272.2 216.3L272.5 214.5L273.4 212.6L276.8 208.4L279.6 204.1L279.6 196.9L282.5 192.7L283.0 185.6L284.2 181.4L283.6 175.5L283.6 167.9L286.4 165.0L289.3 162.7L292.7 156.8L295.0 153.4L298.4 150.5L302.4 145.8L305.2 141.8L307.2 136.1L307.4 133.5L307.5 130.9L306.3 127.5L305.2 123.5L304.6 120.6L300.7 119.5L295.0 118.6L292.1 116.6L286.4 111.5L283.6 109.8L277.9 106.6L272.2 106.9L266.5 106.3L258.0 104.1L253.4 105.2L251.7 101.8L249.5 98.9L243.8 96.7L238.1 94.4L232.4 94.4L229.5 98.9L228.4 98.4L223.3 100.4L217.6 100.4L213.6 96.1L215.3 91.0L218.7 89.3L221.6 84.7L221.0 80.7L217.0 77.9L214.8 68.2Z" fill="#c1c4e0" fill-opacity=".92" stroke="#dfe1ee" stroke-width="1"/><path d="M202.2 294.2L205.9 290.8L207.4 287.4L209.1 284.1L211.3 282.7L214.8 279.4L217.6 276.0L219.3 272.7L220.7 268.8L222.7 264.9L202.2 294.2L201.1 290.5L203.4 288.1L202.2 286.8L197.7 282.1L189.2 275.4L186.9 274.7L182.3 270.1L177.8 270.8L185.2 262.9L188.0 259.0L194.8 253.2L199.4 251.0L206.8 251.3L212.5 253.2L217.0 257.7L221.6 259.7L221.0 262.3L222.7 264.9Z" fill="#b9bcdf" fill-opacity="0.95"/><path d="M222.7 264.9L225.0 262.9L227.8 260.3L228.7 258.4L229.0 255.1L229.3 251.3L228.7 248.7L229.0 244.9L229.0 242.7L222.7 264.9L221.0 262.3L221.6 259.7L217.0 257.7L212.5 253.2L206.8 251.3L199.4 251.0L200.2 245.2L203.9 245.2L212.5 247.5L214.2 245.6L219.3 244.0L225.0 244.9L229.0 242.7Z" fill="#bfc2e1" fill-opacity="0.95"/><path d="M229.0 242.7L229.5 239.6L230.7 240.5L232.4 239.2L229.0 242.7L225.0 244.9L219.3 244.0L214.2 245.6L212.5 247.5L203.9 245.2L200.2 245.2L199.1 241.5L194.8 241.1L196.6 231.4L200.0 227.4L203.4 222.1L210.2 222.4L216.5 224.3L221.6 224.9L223.3 230.5L225.0 235.5L229.0 235.5L232.4 239.2Z" fill="#b7badf" fill-opacity="0.95"/><path d="M232.4 239.2L233.5 237.4L236.9 234.9L239.2 233.0L242.1 231.1L244.3 229.9L247.2 229.9L249.5 228.0L251.7 227.1L232.4 239.2L229.0 235.5L225.0 235.5L223.3 230.5L221.6 224.9L216.5 224.3L210.2 222.4L203.4 222.1L209.1 216.3L211.9 212.0L215.3 206.6L219.3 205.7L226.7 206.6L233.0 206.6L236.9 209.6L239.8 215.1L241.5 221.8L245.5 222.4L250.6 221.2L254.0 222.4L251.7 227.1Z" fill="#2a31d9" fill-opacity="1"/><path d="M251.7 227.1L251.2 226.1L252.9 224.9L255.1 224.9L257.4 225.2L260.3 224.6L266.5 224.9L267.7 221.8L272.2 218.7L272.2 216.3L272.5 214.5L251.7 227.1L254.0 222.4L250.6 221.2L254.0 220.3L259.1 218.7L264.8 216.9L267.1 211.1L268.8 212.6L272.5 214.5Z" fill="#bdc0e0" fill-opacity="0.95"/><path d="M272.5 214.5L273.4 212.6L276.8 208.4L279.6 204.1L279.6 196.9L272.5 214.5L268.8 212.6L267.1 211.1L267.7 207.8L272.2 203.5L271.1 200.5L272.8 195.7L276.2 194.5L279.6 196.9Z" fill="#c6c9e3" fill-opacity="0.95"/><path d="M276.2 194.5L276.8 188.0L274.5 181.4L269.9 180.9L266.5 176.1L260.8 175.0L254.0 172.6L249.5 176.1L243.8 177.9L238.6 182.0L236.4 185.6L235.8 191.5L235.8 195.7L230.7 196.9L225.0 198.1L221.0 200.5L215.3 203.5L215.3 206.6L219.3 205.7L226.7 206.6L233.0 206.6L236.9 209.6L239.8 215.1L241.5 221.8L245.5 222.4L250.6 221.2L254.0 220.3L259.1 218.7L264.8 216.9L267.1 211.1L267.7 207.8L272.2 203.5L271.1 200.5L272.8 195.7L276.2 194.5Z" fill="#a3a5dc" fill-opacity="0.95"/><path d="M279.6 196.9L282.5 192.7L283.0 185.6L284.2 181.4L283.6 175.5L283.6 167.9L286.4 165.0L289.3 162.7L292.7 156.8L279.6 196.9L276.2 194.5L276.8 188.0L274.5 181.4L269.9 180.9L266.5 176.1L260.8 175.0L254.0 172.6L249.5 176.1L243.8 177.9L243.8 173.2L243.2 166.8L242.1 164.4L242.1 156.8L244.3 149.3L248.3 152.2L255.1 150.5L257.4 144.1L263.7 144.7L269.4 143.5L274.5 141.2L277.9 142.4L283.6 140.1L289.3 143.5L289.3 144.7L288.1 149.3L289.3 153.4L292.7 156.8Z" fill="#b9bcdf" fill-opacity="0.95"/><path d="M243.8 177.9L243.8 173.2L243.2 166.8L242.1 164.4L235.2 166.8L229.0 166.2L224.4 165.0L219.3 163.8L217.6 165.0L215.3 170.8L211.3 179.7L207.4 183.8L203.9 188.0L202.8 192.7L203.4 194.5L205.1 196.9L209.6 199.9L215.3 203.5L221.0 200.5L225.0 198.1L230.7 196.9L235.8 195.7L235.8 191.5L236.4 185.6L238.6 182.0L243.8 177.9Z" fill="#bcbfe0" fill-opacity="0.95"/><path d="M203.4 194.5L199.4 191.5L193.7 192.1L188.0 190.9L182.3 190.3L177.2 193.3L178.3 195.7L176.6 200.5L174.6 207.5L176.4 211.4L176.1 219.4L182.3 220.3L188.6 220.6L190.3 231.1L196.6 231.4L200.0 227.4L203.4 222.1L209.1 216.3L211.9 212.0L215.3 206.6L215.3 203.5L209.6 199.9L205.1 196.9L203.4 194.5Z" fill="#c5c8e2" fill-opacity="0.95"/><path d="M219.9 146.7L182.3 144.1L181.2 140.7L174.9 132.3L173.8 140.7L155.0 140.7L155.6 145.8L155.6 152.8L164.7 153.9L164.1 159.2L165.3 165.0L161.8 169.7L163.0 183.8L173.2 184.4L173.8 190.3L177.2 193.3L182.3 190.3L188.0 190.9L193.7 192.1L199.4 191.5L203.4 194.5L202.8 192.7L203.9 188.0L207.4 183.8L211.3 179.7L215.3 170.8L217.6 165.0L217.6 156.3L219.9 146.7Z" fill="#c0c3e0" fill-opacity="0.95"/><path d="M230.1 120.0L235.8 127.5L235.8 133.2L238.1 136.6L240.9 140.1L243.8 144.7L244.3 148.7L244.3 149.3L242.1 156.8L242.1 164.4L235.2 166.8L229.0 166.2L224.4 165.0L219.3 163.8L217.6 165.0L217.6 156.3L219.9 146.7L225.0 138.9L225.6 133.2L229.0 125.7L230.1 120.0Z" fill="#cbcee6" fill-opacity="0.95"/><path d="M243.8 96.7L249.5 98.9L251.7 101.8L253.4 105.2L258.0 104.1L266.5 106.3L263.7 110.3L261.4 116.6L262.0 120.6L260.8 125.7L257.4 129.2L251.2 132.6L246.6 136.1L244.3 141.8L244.3 148.7L243.8 144.7L240.9 140.1L238.1 136.6L235.8 133.2L235.8 127.5L230.1 120.0L233.5 116.6L238.1 111.5L240.9 104.6L243.8 96.7Z" fill="#cfd2e8" fill-opacity="0.95"/><path d="M266.5 106.3L272.2 106.9L271.1 113.2L272.8 118.9L274.5 124.6L275.6 130.3L274.5 132.6L272.2 137.8L274.5 141.2L269.4 143.5L263.7 144.7L257.4 144.1L255.1 150.5L248.3 152.2L244.3 149.3L244.3 148.7L244.3 141.8L246.6 136.1L251.2 132.6L257.4 129.2L260.8 125.7L262.0 120.6L261.4 116.6L263.7 110.3L266.5 106.3Z" fill="#d2d5ea" fill-opacity="0.95"/><path d="M272.2 106.9L277.9 106.6L283.6 109.8L286.4 111.5L292.1 116.6L289.3 122.9L286.4 126.9L285.9 131.5L285.3 133.8L280.7 133.2L274.5 132.6L275.6 130.3L274.5 124.6L272.8 118.9L271.1 113.2L272.2 106.9Z" fill="#cdd0e7" fill-opacity="0.95"/><path d="M292.1 116.6L295.0 118.6L300.7 119.5L304.6 120.6L305.2 123.5L306.3 127.5L307.5 130.9L307.4 133.5L307.2 136.1L305.2 141.8L302.4 145.8L298.4 150.5L295.0 153.4L292.7 156.8L289.3 153.4L288.1 149.3L289.3 144.7L289.3 143.5L283.6 140.1L277.9 142.4L274.5 141.2L272.2 137.8L274.5 132.6L280.7 133.2L285.3 133.8L285.9 131.5L286.4 126.9L289.3 122.9L292.1 116.6Z" fill="#d0d3e9" fill-opacity="0.95"/><path d="M289.3 144.7L289.3 143.5M298.4 150.5L293.8 147.0L289.3 144.7M126.0 147.0L84.5 132.6M174.9 132.3L173.8 140.7L155.0 140.7M155.0 140.7L152.7 140.7L147.1 136.1L135.7 144.1L126.0 147.0M213.6 96.1L210.2 96.9L206.8 94.4L204.5 89.8L202.2 85.8L196.6 80.7L194.8 77.3M285.3 133.8L285.9 131.5L286.4 126.9M274.5 132.6L280.7 133.2L285.3 133.8M286.4 126.9L289.3 122.9L292.1 116.6M276.2 194.5L279.6 196.9M267.1 211.1L267.7 207.8L272.2 203.5L271.1 200.5L272.8 195.7L276.2 194.5M243.8 177.9L243.8 173.2L243.2 166.8L242.1 164.4M215.3 203.5L209.6 199.9L205.1 196.9L203.4 194.5M217.6 165.0L215.3 170.8L211.3 179.7L207.4 183.8L203.9 188.0L202.8 192.7L203.4 194.5M242.1 164.4L235.2 166.8L229.0 166.2L224.4 165.0L219.3 163.8L217.6 165.0M266.5 106.3L263.7 110.3L261.4 116.6L262.0 120.6L260.8 125.7L257.4 129.2L251.2 132.6L246.6 136.1L244.3 141.8L244.3 148.7M276.2 194.5L276.8 188.0L274.5 181.4L269.9 180.9L266.5 176.1L260.8 175.0L254.0 172.6L249.5 176.1L243.8 177.9M243.8 177.9L238.6 182.0L236.4 185.6L235.8 191.5L235.8 195.7L230.7 196.9L225.0 198.1L221.0 200.5L215.3 203.5M215.3 203.5L215.3 206.6M203.4 194.5L199.4 191.5L193.7 192.1L188.0 190.9L182.3 190.3L177.2 193.3M170.4 83.6L173.8 90.4L181.2 98.9L184.6 102.9L174.9 132.3M243.8 96.7L240.9 104.6L238.1 111.5L233.5 116.6L230.1 120.0M174.9 132.3L181.2 140.7L182.3 144.1L219.9 146.7M170.4 83.6L170.4 83.6M285.3 133.8L293.8 134.3L300.7 134.9L307.4 133.5M305.2 141.8L300.7 141.8L295.0 141.8L289.3 143.5M289.3 143.5L283.6 140.1L277.9 142.4L274.5 141.2M244.3 149.3L248.3 152.2L255.1 150.5L257.4 144.1L263.7 144.7L269.4 143.5L274.5 141.2M274.5 132.6L275.6 130.3L274.5 124.6L272.8 118.9L271.1 113.2L272.2 106.9M274.5 141.2L272.2 137.8L274.5 132.6M203.4 222.1L200.0 227.4L196.6 231.4M232.4 239.2L229.0 235.5L225.0 235.5L223.3 230.5L221.6 224.9L216.5 224.3L210.2 222.4L203.4 222.1M267.1 211.1L268.8 212.6L272.5 214.5M250.6 221.2L254.0 220.3L259.1 218.7L264.8 216.9L267.1 211.1M286.4 126.9L295.0 128.0L300.7 127.5L306.3 127.5M155.0 140.7L155.6 145.8L155.6 152.8L164.7 153.9L164.1 159.2L165.3 165.0L161.8 169.7M144.8 77.9L148.8 83.6L152.7 90.4L155.0 96.1L155.6 98.4L161.8 94.4L167.0 88.7L170.4 83.6M222.7 264.9L221.0 262.3L221.6 259.7L217.0 257.7L212.5 253.2L206.8 251.3L199.4 251.0M229.0 242.7L225.0 244.9L219.3 244.0L214.2 245.6L212.5 247.5L203.9 245.2L200.2 245.2M292.7 156.8L289.3 153.4L288.1 149.3L289.3 144.7M215.3 206.6L219.3 205.7L226.7 206.6L233.0 206.6L236.9 209.6L239.8 215.1L241.5 221.8L245.5 222.4L250.6 221.2M203.4 222.1L209.1 216.3L211.9 212.0L215.3 206.6M250.6 221.2L254.0 222.4L251.7 227.1M244.3 149.3L242.1 156.8L242.1 164.4M230.1 120.0L235.8 127.5L235.8 133.2L238.1 136.6L240.9 140.1L243.8 144.7L244.3 148.7M217.6 165.0L217.6 156.3L219.9 146.7M219.9 146.7L225.0 138.9L225.6 133.2L229.0 125.7L230.1 120.0M244.3 148.7L244.3 149.3" fill="none" stroke="#dcdeee" stroke-width=".9" stroke-linejoin="round"/><path d="M232.4 239.2L233.5 237.4L236.9 234.9L239.2 233.0L242.1 231.1L244.3 229.9L247.2 229.9L249.5 228.0L251.7 227.1L232.4 239.2L229.0 235.5L225.0 235.5L223.3 230.5L221.6 224.9L216.5 224.3L210.2 222.4L203.4 222.1L209.1 216.3L211.9 212.0L215.3 206.6L219.3 205.7L226.7 206.6L233.0 206.6L236.9 209.6L239.8 215.1L241.5 221.8L245.5 222.4L250.6 221.2L254.0 222.4L251.7 227.1Z" fill="#2a31d9"/><text x="158.3" y="84.8" font-size="8" text-anchor="middle" fill="#a3a5c2">RR</text><text x="212.2" y="85.5" font-size="8" text-anchor="middle" fill="#a3a5c2">AP</text><text x="139.4" y="121.4" font-size="8" text-anchor="middle" fill="#a3a5c2">AM</text><text x="208.9" y="125.6" font-size="8" text-anchor="middle" fill="#a3a5c2">PA</text><text x="250.4" y="121.4" font-size="8" text-anchor="middle" fill="#a3a5c2">MA</text><text x="282.3" y="121.4" font-size="8" text-anchor="middle" fill="#a3a5c2">CE</text><text x="264.4" y="137.7" font-size="8" text-anchor="middle" fill="#a3a5c2">PI</text><text x="104.1" y="144.6" font-size="8" text-anchor="middle" fill="#a3a5c2">AC</text><text x="148.5" y="156.6" font-size="8" text-anchor="middle" fill="#a3a5c2">RO</text><text x="232.4" y="153.4" font-size="8" text-anchor="middle" fill="#a3a5c2">TO</text><text x="270.9" y="166.4" font-size="8" text-anchor="middle" fill="#a3a5c2">BA</text><text x="189.0" y="167.4" font-size="8" text-anchor="middle" fill="#a3a5c2">MT</text><text x="224.3" y="181.8" font-size="8" text-anchor="middle" fill="#a3a5c2">GO</text><text x="253.6" y="202.3" font-size="8" text-anchor="middle" fill="#a3a5c2">MG</text><text x="189.0" y="212.8" font-size="8" text-anchor="middle" fill="#a3a5c2">MS</text><text x="210.5" y="239.9" font-size="8" text-anchor="middle" fill="#a3a5c2">PR</text><text x="190.0" y="138.0" font-size="13" font-weight="normal" text-anchor="middle" stroke="#8a8fc0" stroke-width=".3" fill="#8a8fc0">Brasil</text><text x="190.0" y="147.8" font-size="9.5" font-weight="normal" text-anchor="middle"  fill="#9094c2">(Brazil)</text><text x="231.4" y="230.1" font-size="8" text-anchor="middle" fill="#2327a5">SP</text><text x="220" y="250.500" font-size="8" text-anchor="middle" fill="#a3a5c2">SC</text><text x="200" y="264.500" font-size="8" text-anchor="middle" fill="#a3a5c2">RS</text><text x="308.5" y="106.4" font-size="8" font-weight="normal" text-anchor="middle"  fill="none" stroke="#fff" stroke-width="1.8" stroke-linejoin="round" stroke-opacity="0.8">RN</text><text x="308.5" y="106.4" font-size="8" font-weight="normal" text-anchor="middle"  fill="#333">RN</text><text x="328.7" y="127.3" font-size="8" font-weight="normal" text-anchor="middle"  fill="none" stroke="#fff" stroke-width="1.8" stroke-linejoin="round" stroke-opacity="0.8">PB</text><text x="328.7" y="127.3" font-size="8" font-weight="normal" text-anchor="middle"  fill="#333">PB</text><text x="325.4" y="140.3" font-size="8" font-weight="normal" text-anchor="middle"  fill="none" stroke="#fff" stroke-width="1.8" stroke-linejoin="round" stroke-opacity="0.8">PE</text><text x="325.4" y="140.3" font-size="8" font-weight="normal" text-anchor="middle"  fill="#333">PE</text><text x="323.8" y="156.3" font-size="8" font-weight="normal" text-anchor="middle"  fill="none" stroke="#fff" stroke-width="1.8" stroke-linejoin="round" stroke-opacity="0.8">AL</text><text x="323.8" y="156.3" font-size="8" font-weight="normal" text-anchor="middle"  fill="#333">AL</text><text x="315.0" y="171.0" font-size="8" font-weight="normal" text-anchor="middle"  fill="none" stroke="#fff" stroke-width="1.8" stroke-linejoin="round" stroke-opacity="0.8">SE</text><text x="315.0" y="171.0" font-size="8" font-weight="normal" text-anchor="middle"  fill="#333">SE</text><text x="291.8" y="222.2" font-size="8" font-weight="normal" text-anchor="middle"  fill="none" stroke="#fff" stroke-width="1.8" stroke-linejoin="round" stroke-opacity="0.8">ES</text><text x="291.8" y="222.2" font-size="8" font-weight="normal" text-anchor="middle"  fill="#333">ES</text><text x="264.1" y="240.2" font-size="8" font-weight="normal" text-anchor="middle"  fill="none" stroke="#fff" stroke-width="1.8" stroke-linejoin="round" stroke-opacity="0.8">RJ</text><text x="264.1" y="240.2" font-size="8" font-weight="normal" text-anchor="middle"  fill="#333">RJ</text><path d="M307.5 108.3L300.0 119.8M322.2 126.3L309.1 130.5M319.6 138.0L308.5 138.0M318.2 152.4L307.5 147.5M309.8 165.5L296.1 157.3M286.3 218.7L275.8 214.4M262.8 233.0L261.1 225.8" stroke="#555" stroke-width=".9" fill="none"/><text x="80.6" y="6.8" font-size="10.5" font-weight="normal" text-anchor="middle" font-style="italic" fill="#5b82b5">Caribbean</text><text x="80.6" y="16.0" font-size="10.5" font-weight="normal" text-anchor="middle" font-style="italic" fill="#5b82b5">Sea</text><text x="30.1" y="22.5" font-size="9.4" font-weight="normal" text-anchor="middle"  stroke="#333" stroke-width=".4" fill="none" stroke="#fff" stroke-width="2.2" stroke-linejoin="round" stroke-opacity="0.8">Nicaragua</text><text x="30.1" y="22.5" font-size="9.4" font-weight="normal" text-anchor="middle"  stroke="#333" stroke-width=".4" fill="#333">Nicaragua</text><text x="91.1" y="72.8" font-size="11.5" font-weight="normal" text-anchor="middle" stroke="#333" stroke-width=".3" fill="none" stroke="#fff" stroke-width="2.2" stroke-linejoin="round" stroke-opacity="0.8">Colombia</text><text x="91.1" y="72.8" font-size="11.5" font-weight="normal" text-anchor="middle" stroke="#333" stroke-width=".3" fill="#333">Colombia</text><text x="191.0" y="70.5" font-size="8.9" font-weight="normal" text-anchor="middle"  stroke="#333" stroke-width=".4" fill="none" stroke="#fff" stroke-width="2.2" stroke-linejoin="round" stroke-opacity="0.8">Suriname</text><text x="191.0" y="70.5" font-size="8.9" font-weight="normal" text-anchor="middle"  stroke="#333" stroke-width=".4" fill="#333">Suriname</text><text x="175.3" y="56.8" font-size="8.9" font-weight="normal" text-anchor="middle"  stroke="#333" stroke-width=".4" fill="none" stroke="#fff" stroke-width="2.2" stroke-linejoin="round" stroke-opacity="0.8">Guyana</text><text x="175.3" y="56.8" font-size="8.9" font-weight="normal" text-anchor="middle"  stroke="#333" stroke-width=".4" fill="#333">Guyana</text><text x="168.8" y="40.5" font-size="11.5" font-weight="normal" text-anchor="middle" stroke="#333" stroke-width=".3" fill="none" stroke="#fff" stroke-width="2.2" stroke-linejoin="round" stroke-opacity="0.8">Venezuela</text><text x="168.8" y="40.5" font-size="11.5" font-weight="normal" text-anchor="middle" stroke="#333" stroke-width=".3" fill="#333">Venezuela</text><text x="58.5" y="101.8" font-size="9.4" font-weight="normal" text-anchor="middle"  stroke="#333" stroke-width=".4" fill="none" stroke="#fff" stroke-width="2.2" stroke-linejoin="round" stroke-opacity="0.8">Ecuador</text><text x="58.5" y="101.8" font-size="9.4" font-weight="normal" text-anchor="middle"  stroke="#333" stroke-width=".4" fill="#333">Ecuador</text><text x="86.5" y="158.6" font-size="11.5" font-weight="normal" text-anchor="middle" stroke="#333" stroke-width=".25" fill="none" stroke="#fff" stroke-width="2.2" stroke-linejoin="round" stroke-opacity="0.8">Perú</text><text x="86.5" y="158.6" font-size="11.5" font-weight="normal" text-anchor="middle" stroke="#333" stroke-width=".25" fill="#333">Perú</text><text x="86.5" y="167.4" font-size="9" font-weight="normal" text-anchor="middle"  fill="none" stroke="#fff" stroke-width="2.2" stroke-linejoin="round" stroke-opacity="0.8">(Peru)</text><text x="86.5" y="167.4" font-size="9" font-weight="normal" text-anchor="middle"  fill="#444">(Peru)</text><text x="139.4" y="191.2" font-size="11.5" font-weight="normal" text-anchor="middle" stroke="#333" stroke-width=".25" fill="none" stroke="#fff" stroke-width="2.2" stroke-linejoin="round" stroke-opacity="0.8">Bolivia</text><text x="139.4" y="191.2" font-size="11.5" font-weight="normal" text-anchor="middle" stroke="#333" stroke-width=".25" fill="#333">Bolivia</text><text x="172.7" y="231.1" font-size="11.5" font-weight="normal" text-anchor="middle" stroke="#333" stroke-width=".25" fill="none" stroke="#fff" stroke-width="2.2" stroke-linejoin="round" stroke-opacity="0.8">Paraguay</text><text x="172.7" y="231.1" font-size="11.5" font-weight="normal" text-anchor="middle" stroke="#333" stroke-width=".25" fill="#333">Paraguay</text><text x="106.8" y="252.3" font-size="11.5" font-weight="normal" text-anchor="middle" stroke="#333" stroke-width=".25" fill="none" stroke="#fff" stroke-width="2.2" stroke-linejoin="round" stroke-opacity="0.8">Chile</text><text x="106.8" y="252.3" font-size="11.5" font-weight="normal" text-anchor="middle" stroke="#333" stroke-width=".25" fill="#333">Chile</text><text x="136.8" y="308.4" font-size="11.5" font-weight="normal" text-anchor="middle" stroke="#333" stroke-width=".25" fill="none" stroke="#fff" stroke-width="2.2" stroke-linejoin="round" stroke-opacity="0.8">Argentina</text><text x="136.8" y="308.4" font-size="11.5" font-weight="normal" text-anchor="middle" stroke="#333" stroke-width=".25" fill="#333">Argentina</text><text x="187.7" y="291.8" font-size="9.5" font-weight="normal" text-anchor="middle" stroke="#333" stroke-width=".1" fill="none" stroke="#fff" stroke-width="2.2" stroke-linejoin="round" stroke-opacity="0.8">Uruguay</text><text x="187.7" y="291.8" font-size="9.5" font-weight="normal" text-anchor="middle" stroke="#333" stroke-width=".1" fill="#333">Uruguay</text><text x="420.1" y="252.6" font-size="10.5" font-weight="normal" text-anchor="middle" font-style="italic" fill="#5b82b5">S o u t</text><text x="416.2" y="265.7" font-size="10.5" font-weight="normal" text-anchor="middle" font-style="italic" fill="#5b82b5">A t l a n t</text><text x="418.4" y="278.7" font-size="10.5" font-weight="normal" text-anchor="middle" font-style="italic" fill="#5b82b5">O c e a</text><text x="433.8" y="29.0" font-size="9.4" font-weight="normal" text-anchor="middle"  stroke="#333" stroke-width=".4" fill="none" stroke="#fff" stroke-width="2.2" stroke-linejoin="round" stroke-opacity="0.8">G</text><text x="433.8" y="29.0" font-size="9.4" font-weight="normal" text-anchor="middle"  stroke="#333" stroke-width=".4" fill="#333">G</text><text x="432.5" y="38.8" font-size="9.4" font-weight="normal" text-anchor="middle"  stroke="#333" stroke-width=".4" fill="none" stroke="#fff" stroke-width="2.2" stroke-linejoin="round" stroke-opacity="0.8">(G</text><text x="432.5" y="38.8" font-size="9.4" font-weight="normal" text-anchor="middle"  stroke="#333" stroke-width=".4" fill="#333">(G</text></svg><div id="lg"><span style="left:11px">3.850,90</span><svg width="38" height="17" style="position:absolute;left:62.500px;top:13px"><rect width="38" height="17" fill="url(#lgd)"/></svg><span style="left:103px">32.927.699,84</span></div><div style="position:absolute;left:13px;top:7px;width:16.500px;height:33px;background:#fff;border-radius:2px;box-shadow:0 1px 3px rgba(0,0,0,.45)"><svg width="17" height="33" viewBox="0 0 17 33" style="position:absolute;left:0;top:0"><defs><radialGradient id="pgh" cx=".4" cy=".35" r=".7"><stop offset="0" stop-color="#ffd34d"/><stop offset="1" stop-color="#f5a000"/></radialGradient></defs><path d="M2.600 12.100q0-1.500 1.500-1.500h8.500q1.500 0 1.500 1.500v7.900q0 1.100-1.100 1.100h-1.500v8q0 .9-.9.900H6.100q-.9 0-.9-.9v-8H3.700q-1.100 0-1.100-1.100z" fill="#f9b30f" stroke="#d18a06" stroke-width=".7"/><path d="M5.300 10.800h6L8.300 14.200z" fill="#ee5a48"/><circle cx="8.300" cy="7.100" r="3.800" fill="url(#pgh)" stroke="#d18a06" stroke-width=".7"/><path d="M6 15v14M10.600 15v14" stroke="#e39c08" stroke-width=".6" opacity=".6"/></svg></div><div style="position:absolute;left:13px;top:52px;width:16.500px;height:33px;background:#fff;border-radius:2px;box-shadow:0 1px 3px rgba(0,0,0,.4)"><svg width="17" height="33"><path d="M4.200 8.200h8.200M8.300 4.100v8.200" stroke="#666" stroke-width="1.600"/><path d="M4.200 25h8.200" stroke="#666" stroke-width="1.600"/><path d="M2 16.500h12.500" stroke="#e2e2e2" stroke-width="1"/></svg></div><div class="mtype" style="left:339.3px;width:42px"><b>Mapa</b></div><div class="mtype" style="left:380.5px;width:51.500px;border-left:0">Satélite</div><div class="attr" style="right:79.500px">Dados cartográficos ©2014 Google, INEGI</div><div class="attr" style="right:0;width:79px;border-left:1px solid #ccc">Termos de Uso</div><svg style="position:absolute;left:4px;top:311px" width="70" height="34" viewBox="0 0 70 34"><text x="2.500" y="23.500" font-family="Liberation Serif,serif" font-size="20.500" fill="#fff" stroke="rgba(90,100,110,.55)" stroke-width="1.800" stroke-linejoin="round" paint-order="stroke" letter-spacing="-.6">Google</text></svg></div></div>
<div class="panel sel" id="p3"><div class="ptitle">Vendas por Estado (Há 2 minutos)</div><svg style="position:absolute;left:446px;top:7.500px" width="14" height="14" viewBox="-7 -7 14 14"><g stroke="#444" stroke-width="1.700"><path d="M0-6V6M-6 0H6M-4.200-4.200L4.200 4.200M-4.200 4.200L4.200-4.200"/></g><circle r="4.100" fill="#444"/><circle r="2.500" fill="#fff"/></svg><div class="map" id="m3"><svg width="0" height="0" style="position:absolute"><defs><filter id="blur1" filterUnits="userSpaceOnUse" x="-200" y="-200" width="1000" height="1000"><feGaussianBlur stdDeviation="1.600"/></filter><filter id="blur3" filterUnits="userSpaceOnUse" x="-200" y="-200" width="1000" height="1000"><feGaussianBlur stdDeviation="3"/></filter><filter id="blur6" filterUnits="userSpaceOnUse" x="-200" y="-200" width="1000" height="1000"><feGaussianBlur stdDeviation="6"/></filter><filter id="blur12" filterUnits="userSpaceOnUse" x="-200" y="-200" width="1000" height="1000"><feGaussianBlur stdDeviation="12"/></filter></defs></svg><svg width="451" height="523" viewBox="0 0 451 523" font-family="Liberation Sans,sans-serif"><defs><clipPath id="land3"><path d="M110.9 120.3L114.3 124.3L113.8 120.9L117.2 118.6L120.6 115.7L121.7 109.4L125.7 106.5L129.1 105.3L136.0 104.1L140.5 101.2L143.4 98.6L146.8 100.6L145.4 102.4L141.9 103.6L143.9 107.3L147.3 106.5L151.3 104.7L151.9 103.3L151.3 101.2L153.6 100.1L154.2 103.6L157.0 104.1L162.1 105.9L163.3 109.4L170.1 109.4L175.2 109.4L180.9 112.2L185.5 111.1L188.3 109.1L194.6 108.8L199.1 108.8L195.1 111.1L196.8 113.4L200.8 114.0L205.4 116.9L209.9 121.5L211.1 122.6L218.5 128.4L220.2 131.2L225.8 135.8L232.7 136.4L237.8 136.4L244.1 136.9L249.7 138.7L253.7 142.1L257.1 145.5L260.6 147.8L262.8 157.5L266.8 160.3L267.4 164.3L264.5 168.9L261.1 170.6L259.4 175.7L263.4 180.0L269.1 180.0L274.2 178.0L275.3 178.5L278.2 174.0L283.9 174.0L289.6 176.3L295.3 178.5L297.5 181.4L299.2 184.8L303.8 183.7L312.3 185.9L318.0 186.5L323.7 186.2L329.4 189.4L332.2 191.1L337.9 196.2L340.8 198.2L346.5 199.1L350.4 200.2L351.0 203.1L352.1 207.1L353.3 210.5L353.0 215.7L351.0 221.4L348.2 225.4L344.2 230.1L340.8 233.0L338.5 236.4L335.1 242.3L332.2 244.6L329.4 247.5L329.4 255.1L330.0 261.0L328.8 265.2L328.2 272.3L325.4 276.5L325.4 283.7L322.6 288.0L319.1 292.2L318.0 295.9L318.0 298.3L313.5 301.4L312.3 304.5L306.1 304.2L303.2 304.8L300.9 304.5L298.7 304.5L297.0 305.7L297.5 306.7L295.3 307.6L293.0 309.5L290.1 309.5L287.9 310.7L285.0 312.6L282.7 314.5L279.3 317.0L278.2 318.8L276.5 320.1L275.3 319.2L274.8 322.3L274.8 324.5L274.5 328.3L275.1 330.9L274.8 334.7L274.5 338.0L273.6 339.9L270.8 342.5L268.5 344.5L266.5 348.4L265.1 352.3L263.4 355.6L260.6 359.0L257.1 362.3L254.9 363.7L253.2 367.0L251.7 370.4L248.0 373.8L246.9 375.9L245.2 378.6L242.9 380.4L238.6 382.6L235.5 381.4L231.5 382.2L228.1 380.7L225.8 379.0L222.2 379.1L220.2 377.3L219.0 375.2L218.2 376.6L218.5 378.6L219.3 380.0L223.6 382.4L225.8 385.6L225.0 389.8L228.4 392.2L228.7 396.1L226.4 400.4L224.1 404.0L217.3 408.4L209.9 410.6L201.4 411.3L196.8 409.8L198.0 415.0L196.8 422.4L194.0 426.2L187.2 424.6L181.5 424.6L180.9 429.9L182.0 435.3L187.2 435.3L189.4 438.4L185.5 440.7L181.5 439.9L181.5 443.8L179.8 449.3L177.5 457.3L170.1 459.7L167.3 465.4L167.3 469.5L172.9 473.7L176.9 475.3L176.4 480.4L170.1 487.2L166.7 493.3L161.6 501.2L158.7 507.5L157.6 513.8L162.1 520.3L155.9 522.2L148.5 525.0L147.3 534.5L141.7 532.6L133.1 526.9L127.4 517.5L124.6 503.9L121.7 490.7L121.7 477.9L121.2 471.2L127.4 465.4L130.3 453.3L134.3 445.4L136.0 436.0L131.4 429.9L132.0 418.7L133.7 415.0L132.6 401.9L134.8 396.9L137.7 386.3L141.7 379.3L143.9 369.1L144.5 362.3L143.4 352.3L145.1 348.4L144.5 339.3L147.9 329.6L149.6 320.1L150.8 308.2L149.6 305.1L151.9 298.3L152.2 287.4L151.3 277.1L147.9 272.9L144.5 269.9L137.7 265.8L130.3 262.2L123.4 258.1L117.8 251.6L116.6 249.3L114.3 241.7L112.4 238.8L109.2 233.0L106.4 227.2L104.1 222.0L101.8 216.2L97.8 211.1L96.1 207.6L91.0 204.8L89.3 201.9L89.9 198.5L88.7 195.6L91.0 192.2L94.4 189.4L96.7 187.1L96.7 183.7L94.4 184.8L91.0 183.1L91.6 178.5L91.0 176.0L93.9 172.8L95.6 170.0L95.6 165.4L98.4 164.3L102.4 162.6L103.0 159.8L104.7 155.8L109.2 155.2L112.1 149.5L112.6 147.8L110.4 145.5L111.5 138.7L110.4 134.7L110.9 131.2L108.1 128.9L106.4 124.3L104.7 121.5L99.0 118.6L97.3 120.9L93.9 122.6L96.1 127.2L93.9 128.6L91.0 128.9L90.5 125.5L86.5 124.3L83.6 122.6L79.6 124.1L79.1 122.0L75.1 121.5L75.7 119.2L70.0 115.7L68.3 112.8L67.1 115.1L63.1 111.7L63.1 107.0L59.2 103.0L54.0 97.2L52.3 95.4L51.2 94.2L46.1 94.2L40.4 92.5L36.4 90.1L31.3 89.6L26.7 86.6L22.2 81.3L16.5 77.2L10.8 76.6L2.3 79.5L-6.3 76.6L-17.6 71.8L-40.4 59.9L-40.4 -22.3L-2.3 -22.3L-1.7 7.2L-4.0 19.9L-5.1 39.8L-1.7 49.6L4.6 58.7L10.8 62.3L14.2 65.0L22.2 63.5L27.9 62.0L31.9 60.5L36.4 54.7L37.0 47.8L41.5 45.9L50.6 44.1L55.8 44.7L57.5 47.2L54.0 52.6L53.5 58.1L51.8 64.1L50.1 62.9L48.9 68.3L47.2 76.0L45.5 78.4L49.5 79.5L52.9 78.7L59.2 79.0L64.9 78.4L70.5 79.0L74.5 81.9L77.9 84.3L76.2 92.5L75.7 98.3L75.1 103.6L75.7 107.6L79.1 112.8L81.4 115.1L83.6 118.6L87.6 119.7L91.6 119.2L96.7 116.9L101.8 115.7L107.5 116.9ZM68.3 42.3L73.4 37.3L79.1 35.5L82.5 34.6L89.3 34.9L96.1 36.1L101.8 39.2L107.5 39.8L113.2 44.1L118.9 47.2L124.6 49.6L129.4 52.3L124.6 54.4L118.9 54.1L109.2 54.7L112.1 50.8L107.5 49.6L104.7 47.8L99.0 43.5L93.3 41.3L85.9 40.4L84.8 39.2L80.2 37.3L76.8 40.4L73.4 42.3ZM105.2 64.1L110.4 62.9L117.2 65.0L117.8 66.5L112.1 67.7L106.4 65.9ZM127.4 63.5L133.7 62.6L137.1 62.9L139.4 62.3L137.1 59.3L133.7 55.7L137.1 54.1L143.4 55.0L148.5 54.4L153.6 55.7L157.6 58.1L160.4 60.2L162.4 62.3L160.4 64.7L153.6 63.5L150.2 64.7L146.8 65.3L145.1 68.3L142.8 65.9L139.9 64.7L136.0 64.7L131.4 65.6ZM169.0 62.9L178.1 63.5L177.5 65.9L169.0 66.2ZM199.1 108.8L204.8 108.2L204.2 112.2L199.1 112.5ZM76.2 -22.3L80.2 0.1L80.8 5.3L84.2 11.0L85.9 16.7L89.9 22.4L93.9 21.8L95.6 18.0L96.1 11.7L92.7 1.4L89.3 -9.0L90.5 -22.3ZM105.8 22.4L108.7 23.0L109.8 28.0L106.4 27.4ZM264.0 171.1L269.7 170.6L275.9 171.7L274.8 176.8L269.1 179.1L263.4 179.1L262.3 175.1ZM161.0 524.0L163.3 529.7L170.1 538.4L180.3 543.3L172.9 547.2L161.0 546.2L150.2 548.2L141.7 541.3L147.3 536.4L150.8 526.9L155.9 524.0ZM129.1 443.8L130.3 433.7L133.1 433.0L133.1 443.8Z"/></clipPath><linearGradient id="ping" x1="0" y1="0" x2="0" y2="1"><stop offset="0" stop-color="#ff7d70"/><stop offset=".6" stop-color="#f7564a"/><stop offset="1" stop-color="#e8392e"/></linearGradient></defs><path d="M110.9 120.3L114.3 124.3L113.8 120.9L117.2 118.6L120.6 115.7L121.7 109.4L125.7 106.5L129.1 105.3L136.0 104.1L140.5 101.2L143.4 98.6L146.8 100.6L145.4 102.4L141.9 103.6L143.9 107.3L147.3 106.5L151.3 104.7L151.9 103.3L151.3 101.2L153.6 100.1L154.2 103.6L157.0 104.1L162.1 105.9L163.3 109.4L170.1 109.4L175.2 109.4L180.9 112.2L185.5 111.1L188.3 109.1L194.6 108.8L199.1 108.8L195.1 111.1L196.8 113.4L200.8 114.0L205.4 116.9L209.9 121.5L211.1 122.6L218.5 128.4L220.2 131.2L225.8 135.8L232.7 136.4L237.8 136.4L244.1 136.9L249.7 138.7L253.7 142.1L257.1 145.5L260.6 147.8L262.8 157.5L266.8 160.3L267.4 164.3L264.5 168.9L261.1 170.6L259.4 175.7L263.4 180.0L269.1 180.0L274.2 178.0L275.3 178.5L278.2 174.0L283.9 174.0L289.6 176.3L295.3 178.5L297.5 181.4L299.2 184.8L303.8 183.7L312.3 185.9L318.0 186.5L323.7 186.2L329.4 189.4L332.2 191.1L337.9 196.2L340.8 198.2L346.5 199.1L350.4 200.2L351.0 203.1L352.1 207.1L353.3 210.5L353.0 215.7L351.0 221.4L348.2 225.4L344.2 230.1L340.8 233.0L338.5 236.4L335.1 242.3L332.2 244.6L329.4 247.5L329.4 255.1L330.0 261.0L328.8 265.2L328.2 272.3L325.4 276.5L325.4 283.7L322.6 288.0L319.1 292.2L318.0 295.9L318.0 298.3L313.5 301.4L312.3 304.5L306.1 304.2L303.2 304.8L300.9 304.5L298.7 304.5L297.0 305.7L297.5 306.7L295.3 307.6L293.0 309.5L290.1 309.5L287.9 310.7L285.0 312.6L282.7 314.5L279.3 317.0L278.2 318.8L276.5 320.1L275.3 319.2L274.8 322.3L274.8 324.5L274.5 328.3L275.1 330.9L274.8 334.7L274.5 338.0L273.6 339.9L270.8 342.5L268.5 344.5L266.5 348.4L265.1 352.3L263.4 355.6L260.6 359.0L257.1 362.3L254.9 363.7L253.2 367.0L251.7 370.4L248.0 373.8L246.9 375.9L245.2 378.6L242.9 380.4L238.6 382.6L235.5 381.4L231.5 382.2L228.1 380.7L225.8 379.0L222.2 379.1L220.2 377.3L219.0 375.2L218.2 376.6L218.5 378.6L219.3 380.0L223.6 382.4L225.8 385.6L225.0 389.8L228.4 392.2L228.7 396.1L226.4 400.4L224.1 404.0L217.3 408.4L209.9 410.6L201.4 411.3L196.8 409.8L198.0 415.0L196.8 422.4L194.0 426.2L187.2 424.6L181.5 424.6L180.9 429.9L182.0 435.3L187.2 435.3L189.4 438.4L185.5 440.7L181.5 439.9L181.5 443.8L179.8 449.3L177.5 457.3L170.1 459.7L167.3 465.4L167.3 469.5L172.9 473.7L176.9 475.3L176.4 480.4L170.1 487.2L166.7 493.3L161.6 501.2L158.7 507.5L157.6 513.8L162.1 520.3L155.9 522.2L148.5 525.0L147.3 534.5L141.7 532.6L133.1 526.9L127.4 517.5L124.6 503.9L121.7 490.7L121.7 477.9L121.2 471.2L127.4 465.4L130.3 453.3L134.3 445.4L136.0 436.0L131.4 429.9L132.0 418.7L133.7 415.0L132.6 401.9L134.8 396.9L137.7 386.3L141.7 379.3L143.9 369.1L144.5 362.3L143.4 352.3L145.1 348.4L144.5 339.3L147.9 329.6L149.6 320.1L150.8 308.2L149.6 305.1L151.9 298.3L152.2 287.4L151.3 277.1L147.9 272.9L144.5 269.9L137.7 265.8L130.3 262.2L123.4 258.1L117.8 251.6L116.6 249.3L114.3 241.7L112.4 238.8L109.2 233.0L106.4 227.2L104.1 222.0L101.8 216.2L97.8 211.1L96.1 207.6L91.0 204.8L89.3 201.9L89.9 198.5L88.7 195.6L91.0 192.2L94.4 189.4L96.7 187.1L96.7 183.7L94.4 184.8L91.0 183.1L91.6 178.5L91.0 176.0L93.9 172.8L95.6 170.0L95.6 165.4L98.4 164.3L102.4 162.6L103.0 159.8L104.7 155.8L109.2 155.2L112.1 149.5L112.6 147.8L110.4 145.5L111.5 138.7L110.4 134.7L110.9 131.2L108.1 128.9L106.4 124.3L104.7 121.5L99.0 118.6L97.3 120.9L93.9 122.6L96.1 127.2L93.9 128.6L91.0 128.9L90.5 125.5L86.5 124.3L83.6 122.6L79.6 124.1L79.1 122.0L75.1 121.5L75.7 119.2L70.0 115.7L68.3 112.8L67.1 115.1L63.1 111.7L63.1 107.0L59.2 103.0L54.0 97.2L52.3 95.4L51.2 94.2L46.1 94.2L40.4 92.5L36.4 90.1L31.3 89.6L26.7 86.6L22.2 81.3L16.5 77.2L10.8 76.6L2.3 79.5L-6.3 76.6L-17.6 71.8L-40.4 59.9L-40.4 -22.3L-2.3 -22.3L-1.7 7.2L-4.0 19.9L-5.1 39.8L-1.7 49.6L4.6 58.7L10.8 62.3L14.2 65.0L22.2 63.5L27.9 62.0L31.9 60.5L36.4 54.7L37.0 47.8L41.5 45.9L50.6 44.1L55.8 44.7L57.5 47.2L54.0 52.6L53.5 58.1L51.8 64.1L50.1 62.9L48.9 68.3L47.2 76.0L45.5 78.4L49.5 79.5L52.9 78.7L59.2 79.0L64.9 78.4L70.5 79.0L74.5 81.9L77.9 84.3L76.2 92.5L75.7 98.3L75.1 103.6L75.7 107.6L79.1 112.8L81.4 115.1L83.6 118.6L87.6 119.7L91.6 119.2L96.7 116.9L101.8 115.7L107.5 116.9ZM68.3 42.3L73.4 37.3L79.1 35.5L82.5 34.6L89.3 34.9L96.1 36.1L101.8 39.2L107.5 39.8L113.2 44.1L118.9 47.2L124.6 49.6L129.4 52.3L124.6 54.4L118.9 54.1L109.2 54.7L112.1 50.8L107.5 49.6L104.7 47.8L99.0 43.5L93.3 41.3L85.9 40.4L84.8 39.2L80.2 37.3L76.8 40.4L73.4 42.3ZM105.2 64.1L110.4 62.9L117.2 65.0L117.8 66.5L112.1 67.7L106.4 65.9ZM127.4 63.5L133.7 62.6L137.1 62.9L139.4 62.3L137.1 59.3L133.7 55.7L137.1 54.1L143.4 55.0L148.5 54.4L153.6 55.7L157.6 58.1L160.4 60.2L162.4 62.3L160.4 64.7L153.6 63.5L150.2 64.7L146.8 65.3L145.1 68.3L142.8 65.9L139.9 64.7L136.0 64.7L131.4 65.6ZM169.0 62.9L178.1 63.5L177.5 65.9L169.0 66.2ZM199.1 108.8L204.8 108.2L204.2 112.2L199.1 112.5ZM76.2 -22.3L80.2 0.1L80.8 5.3L84.2 11.0L85.9 16.7L89.9 22.4L93.9 21.8L95.6 18.0L96.1 11.7L92.7 1.4L89.3 -9.0L90.5 -22.3ZM105.8 22.4L108.7 23.0L109.8 28.0L106.4 27.4ZM264.0 171.1L269.7 170.6L275.9 171.7L274.8 176.8L269.1 179.1L263.4 179.1L262.3 175.1ZM161.0 524.0L163.3 529.7L170.1 538.4L180.3 543.3L172.9 547.2L161.0 546.2L150.2 548.2L141.7 541.3L147.3 536.4L150.8 526.9L155.9 524.0ZM129.1 443.8L130.3 433.7L133.1 433.0L133.1 443.8Z" fill="none" stroke="#c6dcff" stroke-width="9" filter="url(#blur3)"/><g clip-path="url(#land3)"><rect x="-20" y="-20" width="500" height="600" fill="#bedaa9"/><ellipse cx="318.0" cy="221.4" rx="52" ry="50" fill="#dde9c4" fill-opacity="0.95" filter="url(#blur12)" transform="rotate(0 318.0 221.4)"/><ellipse cx="289.6" cy="268.2" rx="50" ry="50" fill="#d5e6bb" fill-opacity="0.8" filter="url(#blur12)" transform="rotate(0 289.6 268.2)"/><ellipse cx="266.8" cy="317.0" rx="40" ry="35" fill="#d2e4b8" fill-opacity="0.7" filter="url(#blur12)" transform="rotate(0 266.8 317.0)"/><ellipse cx="244.1" cy="352.3" rx="32" ry="30" fill="#d9e7c0" fill-opacity="0.9" filter="url(#blur12)" transform="rotate(0 244.1 352.3)"/><ellipse cx="175.8" cy="127.2" rx="45" ry="16" fill="#d6e6bc" fill-opacity="0.9" filter="url(#blur12)" transform="rotate(0 175.8 127.2)"/><ellipse cx="204.2" cy="289.2" rx="35" ry="28" fill="#d3e4b6" fill-opacity="0.85" filter="url(#blur12)" transform="rotate(0 204.2 289.2)"/><ellipse cx="192.9" cy="362.3" rx="46" ry="52" fill="#dee9c3" fill-opacity="1" filter="url(#blur12)" transform="rotate(0 192.9 362.3)"/><path d="M167.3 336.0L164.4 362.3L161.6 389.8" fill="none" stroke="#e8e8cf" stroke-width="10" stroke-opacity="0.9" stroke-linecap="round" stroke-linejoin="round" filter="url(#blur6)"/><path d="M164.4 396.9L165.5 411.3L167.3 426.2L161.6 449.3L158.7 473.7L153.0 499.4L155.9 522.2" fill="none" stroke="#ece8d0" stroke-width="34" stroke-opacity="1" stroke-linecap="round" stroke-linejoin="round" filter="url(#blur6)"/><path d="M136.0 118.6L121.7 138.7L113.2 161.5L104.1 178.5L103.0 195.6L108.7 215.7L118.9 233.0L133.1 250.4L150.2 262.2L163.3 277.1L167.3 298.3L163.3 323.3L155.9 349.0L153.0 375.9L148.5 404.0L144.5 433.7L141.7 465.4L137.1 499.4L141.7 526.9" fill="none" stroke="#e4e6cc" stroke-width="13" stroke-opacity="0.95" stroke-linecap="round" stroke-linejoin="round" filter="url(#blur3)"/><path d="M93.3 198.5L101.8 215.7L113.2 238.8L121.7 255.1L141.7 267.0L151.9 277.1L153.6 298.3L151.9 323.3L147.9 345.8" fill="none" stroke="#efe9d2" stroke-width="8" stroke-opacity="1" stroke-linecap="round" stroke-linejoin="round" filter="url(#blur3)"/><path d="M133.1 433.7L130.3 465.4L128.6 499.4L136.0 526.9" fill="none" stroke="#b4d3a4" stroke-width="9" stroke-opacity="1" stroke-linecap="round" stroke-linejoin="round" filter="url(#blur3)"/><path d="M133.7 473.7L133.7 493.3L134.8 508.4" fill="none" stroke="#fafafa" stroke-width="2.5" stroke-opacity="0.9" stroke-linecap="round" stroke-linejoin="round" filter="url(#blur1)"/><path d="M27.9 80.7L44.9 85.4L59.2 90.7L67.7 101.2L73.4 112.8L81.9 119.7" fill="none" stroke="#dfe9c9" stroke-width="7" stroke-opacity="0.95" stroke-linecap="round" stroke-linejoin="round" filter="url(#blur3)"/><path d="M-6.3 53.8L-0.6 68.9L22.2 74.8" fill="none" stroke="#e3e8cc" stroke-width="9" stroke-opacity="0.9" stroke-linecap="round" stroke-linejoin="round" filter="url(#blur3)"/><path d="M170.1 111.1L187.2 112.8" fill="none" stroke="#dde8c6" stroke-width="4" stroke-opacity="0.9" stroke-linecap="round" stroke-linejoin="round" filter="url(#blur3)"/><ellipse cx="101.8" cy="41.7" rx="18" ry="4" fill="#d3e5bb" fill-opacity="0.8" filter="url(#blur3)" transform="rotate(-18 101.8 41.7)"/><ellipse cx="150.2" cy="59.9" rx="8" ry="3" fill="#d9e7c3" fill-opacity="0.8" filter="url(#blur3)" transform="rotate(0 150.2 59.9)"/></g><path d="M145.4 102.4L141.7 106.5L138.8 109.9L136.0 116.9L137.1 118.0L139.4 122.0L138.8 127.2L141.7 130.1L149.0 129.5L156.4 135.2L167.3 134.7L165.5 139.8L165.5 145.5L168.4 150.6L165.5 154.1L169.0 156.9L171.0 163.2M103.0 162.0L107.5 164.9L110.9 167.7L117.2 167.7L122.9 170.6L128.0 172.8L132.6 177.4L136.5 183.7L142.8 182.5L151.3 184.2L153.0 185.4L149.0 191.6L153.3 193.9M94.4 189.4L94.4 192.8L93.9 195.3L98.4 195.3L101.8 198.5L105.2 191.6L106.4 189.4L108.7 187.1L115.5 184.8L121.2 178.8L122.9 175.1L122.9 170.6M155.3 232.7L160.4 241.7L159.3 244.0L158.7 248.7L159.3 251.6L156.4 255.1L157.6 258.1L155.9 259.3L158.7 263.4L155.3 269.9L155.9 271.1M155.9 271.1L150.8 276.2M155.9 271.1L158.7 274.7L159.3 280.1L161.6 282.5L160.4 286.8L161.6 291.6L163.3 295.3L165.0 303.3L169.0 303.3M169.0 303.3L174.1 297.1L180.3 299.0L185.5 303.3L187.7 298.3L194.0 298.3L194.8 299.9M194.8 299.9L197.0 292.5L197.0 289.6L200.0 283.9L209.9 281.9L215.0 282.2L220.2 285.0L220.4 287.1M194.8 299.9L204.2 309.5L215.6 313.8L223.0 318.8L223.6 320.7L219.6 328.3L217.9 331.5L223.6 332.2L229.3 332.5L233.2 331.9L237.8 329.0L240.1 323.3L240.6 320.7M223.6 350.4L222.2 355.6L220.7 362.3L220.2 369.1L219.0 375.2M169.0 303.3L170.1 304.5L168.4 310.7L162.7 313.8L161.6 318.2L162.1 324.5L162.7 329.0L158.2 334.1L154.7 339.3L153.0 344.5L153.6 350.4L150.2 356.3L151.3 361.7L153.0 369.1L154.2 375.2L151.3 381.4L150.8 386.3L147.3 393.3L146.8 400.4L147.9 408.4L145.1 411.3L143.4 415.7L142.8 422.4L142.2 429.9L143.1 435.3L141.1 441.5L143.4 447.7L146.2 453.3L143.9 460.5L142.8 469.5L139.9 477.9L138.8 486.4L133.7 495.0L136.0 505.7L139.9 505.7L139.4 513.8L141.7 517.5L153.0 517.5L162.1 520.8M209.9 121.5L205.9 127.2L208.2 130.1L203.7 131.8L202.0 136.1L205.9 140.4M225.8 135.8L225.3 141.5L221.9 147.2L221.3 150.1L225.3 151.2L229.8 158.9M244.1 136.9L241.5 141.5L242.9 148.4L244.1 150.1L240.6 156.9M81.4 115.1L79.6 124.1M110.9 120.3L108.1 128.9M75.1 107.6L63.7 106.5M77.9 84.0L68.8 84.9L63.1 90.1L58.0 90.7L54.6 95.4M51.8 93.1L47.8 89.6L43.0 87.2M43.0 87.2L45.5 81.9L49.5 79.5M43.0 87.2L38.7 91.0M26.7 86.6L26.7 81.9L29.6 77.2L37.0 77.2L37.0 75.4L31.3 70.3L33.6 70.3L33.6 67.1L44.1 67.1M44.1 67.1L43.8 78.4L45.5 78.4M44.1 67.1L48.9 62.9M143.1 55.7L143.4 65.9M257.1 145.5L255.4 148.4L252.0 155.8L246.9 156.9L240.6 156.9L233.2 158.6L232.7 159.5L229.8 158.9L225.3 158.6L221.3 161.5L216.2 163.2L211.6 159.8L210.5 156.3L212.2 150.6L211.1 149.5L212.8 147.2L209.9 144.4L209.9 141.5L205.9 140.4L202.0 144.4L198.5 146.7L194.0 147.2L192.9 148.9L187.2 146.7L183.8 146.7L186.0 151.2L187.2 155.8L190.6 157.5L187.2 159.2L184.3 162.6L178.6 165.4L174.1 165.7L171.0 163.2L169.5 160.3L165.0 160.0L158.7 160.3L154.2 160.3L153.9 163.9L157.6 164.3L158.2 166.3L152.7 166.9L152.7 171.1L156.4 175.7L156.4 178.0L153.3 193.9L149.0 193.9L136.5 199.1L134.8 204.2L132.0 209.3L130.3 212.2L132.0 215.1L136.0 221.4L140.5 227.2L147.3 227.2L149.6 224.3L149.6 233.0L155.3 232.7L161.0 233.5L171.8 226.6L179.2 225.4L179.8 232.4L179.8 237.0L184.9 241.1L192.9 242.3L198.5 246.4L204.2 247.5L207.6 249.3L208.8 263.4L219.0 264.0L219.6 269.9L223.0 272.9L224.1 275.3L222.4 280.1L220.4 287.1L222.2 291.0L221.9 299.0L228.1 299.9L234.4 300.2L236.1 310.7L242.3 311.0L240.6 320.7L244.9 321.1L246.0 324.8L245.2 330.6L240.6 332.8L233.8 338.6L231.0 342.5L223.6 350.4L228.1 349.7L232.7 354.3L235.0 355.0L243.5 361.7L248.0 366.4L249.2 367.7L246.9 370.1L248.0 373.8" fill="none" stroke="#8f8f8f" stroke-width="0.9" stroke-linejoin="round" stroke-opacity="1"/><ellipse cx="156.4" cy="261.0" rx="2.200" ry="1.500" fill="#a9c8f5" transform="rotate(-40 156.4 261.0)"/><ellipse cx="195.1" cy="353.0" rx="2.600" ry="2" fill="#a9c8f5"/><ellipse cx="144.5" cy="114.0" rx="3" ry="4" fill="#b3d1ff"/><path d="M0 170H451" stroke="#b096cf" stroke-width="1.600" stroke-dasharray="4.500 3"/><text x="39.0" y="19.0" font-size="10.5" font-weight="normal" text-anchor="middle" font-style="italic" fill="#5b82b5">Gulf of</text><text x="39.0" y="31.0" font-size="10.5" font-weight="normal" text-anchor="middle" font-style="italic" fill="#5b82b5">Mexico</text><text x="124.0" y="86.0" font-size="10.5" font-weight="normal" text-anchor="middle" font-style="italic" fill="#5b82b5">Caribbean</text><text x="124.0" y="98.0" font-size="10.5" font-weight="normal" text-anchor="middle" font-style="italic" fill="#5b82b5">Sea</text><text x="88.0" y="9.5" font-size="8" font-weight="normal" text-anchor="middle"  fill="none" stroke="#fff" stroke-width="2.2" stroke-linejoin="round" stroke-opacity="0.8">FL</text><text x="88.0" y="9.5" font-size="8" font-weight="normal" text-anchor="middle"  fill="#444">FL</text><text x="101.0" y="47.5" font-size="9.4" font-weight="normal" text-anchor="middle"  stroke="#333" stroke-width=".4" fill="none" stroke="#fff" stroke-width="2.2" stroke-linejoin="round" stroke-opacity="0.8">Cuba</text><text x="101.0" y="47.5" font-size="9.4" font-weight="normal" text-anchor="middle"  stroke="#333" stroke-width=".4" fill="#333">Cuba</text><text x="172.4" y="52.0" font-size="9.4" font-weight="normal" text-anchor="middle"  stroke="#333" stroke-width=".4" fill="none" stroke="#fff" stroke-width="2.2" stroke-linejoin="round" stroke-opacity="0.8">Puerto</text><text x="172.4" y="52.0" font-size="9.4" font-weight="normal" text-anchor="middle"  stroke="#333" stroke-width=".4" fill="#333">Puerto</text><text x="172.4" y="61.0" font-size="9.4" font-weight="normal" text-anchor="middle"  stroke="#333" stroke-width=".4" fill="none" stroke="#fff" stroke-width="2.2" stroke-linejoin="round" stroke-opacity="0.8">Rico</text><text x="172.4" y="61.0" font-size="9.4" font-weight="normal" text-anchor="middle"  stroke="#333" stroke-width=".4" fill="#333">Rico</text><text x="37.0" y="80.5" font-size="9.4" font-weight="normal" text-anchor="middle"  stroke="#333" stroke-width=".4" fill="none" stroke="#fff" stroke-width="2.2" stroke-linejoin="round" stroke-opacity="0.8">Guatemala</text><text x="37.0" y="80.5" font-size="9.4" font-weight="normal" text-anchor="middle"  stroke="#333" stroke-width=".4" fill="#333">Guatemala</text><text x="75.0" y="102.5" font-size="9.4" font-weight="normal" text-anchor="middle"  stroke="#333" stroke-width=".4" fill="none" stroke="#fff" stroke-width="2.2" stroke-linejoin="round" stroke-opacity="0.8">Nicaragua</text><text x="75.0" y="102.5" font-size="9.4" font-weight="normal" text-anchor="middle"  stroke="#333" stroke-width=".4" fill="#333">Nicaragua</text><text x="136.0" y="151.0" font-size="11.5" font-weight="normal" text-anchor="middle" stroke="#333" stroke-width=".35" fill="none" stroke="#fff" stroke-width="2.2" stroke-linejoin="round" stroke-opacity="0.8">Colombia</text><text x="136.0" y="151.0" font-size="11.5" font-weight="normal" text-anchor="middle" stroke="#333" stroke-width=".35" fill="#333">Colombia</text><text x="103.0" y="181.5" font-size="9.4" font-weight="normal" text-anchor="middle"  stroke="#333" stroke-width=".4" fill="none" stroke="#fff" stroke-width="2.2" stroke-linejoin="round" stroke-opacity="0.8">Ecuador</text><text x="103.0" y="181.5" font-size="9.4" font-weight="normal" text-anchor="middle"  stroke="#333" stroke-width=".4" fill="#333">Ecuador</text><text x="130.4" y="238.0" font-size="11.5" font-weight="normal" text-anchor="middle" stroke="#333" stroke-width=".22" fill="none" stroke="#fff" stroke-width="2.2" stroke-linejoin="round" stroke-opacity="0.8">Perú</text><text x="130.4" y="238.0" font-size="11.5" font-weight="normal" text-anchor="middle" stroke="#333" stroke-width=".22" fill="#333">Perú</text><text x="130.4" y="247.5" font-size="9" font-weight="normal" text-anchor="middle"  fill="none" stroke="#fff" stroke-width="2.2" stroke-linejoin="round" stroke-opacity="0.8">(Peru)</text><text x="130.4" y="247.5" font-size="9" font-weight="normal" text-anchor="middle"  fill="#444">(Peru)</text><text x="183.4" y="271.0" font-size="11.5" font-weight="normal" text-anchor="middle" stroke="#333" stroke-width=".22" fill="none" stroke="#fff" stroke-width="2.2" stroke-linejoin="round" stroke-opacity="0.8">Bolivia</text><text x="183.4" y="271.0" font-size="11.5" font-weight="normal" text-anchor="middle" stroke="#333" stroke-width=".22" fill="#333">Bolivia</text><text x="218.4" y="310.0" font-size="11.5" font-weight="normal" text-anchor="middle" stroke="#333" stroke-width=".22" fill="none" stroke="#fff" stroke-width="2.2" stroke-linejoin="round" stroke-opacity="0.8">Paraguay</text><text x="218.4" y="310.0" font-size="11.5" font-weight="normal" text-anchor="middle" stroke="#333" stroke-width=".22" fill="#333">Paraguay</text><text x="151.0" y="332.0" font-size="11.5" font-weight="normal" text-anchor="middle" stroke="#333" stroke-width=".22" fill="none" stroke="#fff" stroke-width="2.2" stroke-linejoin="round" stroke-opacity="0.8">Chile</text><text x="151.0" y="332.0" font-size="11.5" font-weight="normal" text-anchor="middle" stroke="#333" stroke-width=".22" fill="#333">Chile</text><text x="181.0" y="388.0" font-size="11.5" font-weight="normal" text-anchor="middle" stroke="#333" stroke-width=".22" fill="none" stroke="#fff" stroke-width="2.2" stroke-linejoin="round" stroke-opacity="0.8">Argentina</text><text x="181.0" y="388.0" font-size="11.5" font-weight="normal" text-anchor="middle" stroke="#333" stroke-width=".22" fill="#333">Argentina</text><text x="232.0" y="371.5" font-size="9.5" font-weight="normal" text-anchor="middle" stroke="#333" stroke-width=".12" fill="none" stroke="#fff" stroke-width="2.2" stroke-linejoin="round" stroke-opacity="0.8">Uruguay</text><text x="232.0" y="371.5" font-size="9.5" font-weight="normal" text-anchor="middle" stroke="#333" stroke-width=".12" fill="#333">Uruguay</text><text x="231.0" y="221.5" font-size="13" font-weight="normal" text-anchor="middle" stroke="#444" stroke-width=".3" fill="none" stroke="#fff" stroke-width="2.2" stroke-linejoin="round" stroke-opacity="0.8">Brasil</text><text x="231.0" y="221.5" font-size="13" font-weight="normal" text-anchor="middle" stroke="#444" stroke-width=".3" fill="#444">Brasil</text><text x="231.0" y="232.0" font-size="9.5" font-weight="normal" text-anchor="middle"  fill="none" stroke="#fff" stroke-width="2.2" stroke-linejoin="round" stroke-opacity="0.8">(Brazil)</text><text x="231.0" y="232.0" font-size="9.5" font-weight="normal" text-anchor="middle"  fill="#555">(Brazil)</text><text x="450.0" y="331.0" font-size="10" font-weight="normal" text-anchor="middle" font-style="italic" fill="#4f71a3">S</text><text x="446.5" y="345.0" font-size="10" font-weight="normal" text-anchor="middle" font-style="italic" fill="#4f71a3">A t</text><text x="450.0" y="358.5" font-size="10" font-weight="normal" text-anchor="middle" font-style="italic" fill="#4f71a3">O</text><text x="148.4" y="224.0" font-size="8" font-weight="normal" text-anchor="middle"  fill="none" stroke="#fff" stroke-width="1.6" stroke-linejoin="round" stroke-opacity="0.7">AC</text><text x="148.4" y="224.0" font-size="8" font-weight="normal" text-anchor="middle"  fill="#222">AC</text><text x="193.0" y="236.0" font-size="8" font-weight="normal" text-anchor="middle"  fill="none" stroke="#fff" stroke-width="1.6" stroke-linejoin="round" stroke-opacity="0.7">RO</text><text x="193.0" y="236.0" font-size="8" font-weight="normal" text-anchor="middle"  fill="#222">RO</text><text x="233.0" y="247.0" font-size="8" font-weight="normal" text-anchor="middle"  fill="none" stroke="#fff" stroke-width="1.6" stroke-linejoin="round" stroke-opacity="0.7">MT</text><text x="233.0" y="247.0" font-size="8" font-weight="normal" text-anchor="middle"  fill="#222">MT</text><text x="233.0" y="292.0" font-size="8" font-weight="normal" text-anchor="middle"  fill="none" stroke="#fff" stroke-width="1.6" stroke-linejoin="round" stroke-opacity="0.7">MS</text><text x="233.0" y="292.0" font-size="8" font-weight="normal" text-anchor="middle"  fill="#222">MS</text><text x="183.4" y="201.0" font-size="8" font-weight="normal" text-anchor="middle"  fill="none" stroke="#fff" stroke-width="1.6" stroke-linejoin="round" stroke-opacity="0.7">AM</text><text x="183.4" y="201.0" font-size="8" font-weight="normal" text-anchor="middle"  fill="#222">AM</text><text x="251.5" y="206.0" font-size="8" font-weight="normal" text-anchor="middle"  fill="none" stroke="#fff" stroke-width="1.6" stroke-linejoin="round" stroke-opacity="0.7">PA</text><text x="251.5" y="206.0" font-size="8" font-weight="normal" text-anchor="middle"  fill="#222">PA</text><text x="292.4" y="201.0" font-size="8" font-weight="normal" text-anchor="middle"  fill="none" stroke="#fff" stroke-width="1.6" stroke-linejoin="round" stroke-opacity="0.7">MA</text><text x="292.4" y="201.0" font-size="8" font-weight="normal" text-anchor="middle"  fill="#222">MA</text><text x="268.5" y="261.0" font-size="8" font-weight="normal" text-anchor="middle"  fill="none" stroke="#fff" stroke-width="1.6" stroke-linejoin="round" stroke-opacity="0.7">GO</text><text x="268.5" y="261.0" font-size="8" font-weight="normal" text-anchor="middle"  fill="#222">GO</text><text x="264.4" y="335.0" font-size="8" font-weight="normal" text-anchor="middle"  fill="none" stroke="#fff" stroke-width="1.6" stroke-linejoin="round" stroke-opacity="0.7">SC</text><text x="264.4" y="335.0" font-size="8" font-weight="normal" text-anchor="middle"  fill="#222">SC</text><text x="244.4" y="349.0" font-size="8" font-weight="normal" text-anchor="middle"  fill="none" stroke="#fff" stroke-width="1.6" stroke-linejoin="round" stroke-opacity="0.7">RS</text><text x="244.4" y="349.0" font-size="8" font-weight="normal" text-anchor="middle"  fill="#222">RS</text><text x="308.0" y="320.0" font-size="8" font-weight="normal" text-anchor="middle"  fill="none" stroke="#fff" stroke-width="1.6" stroke-linejoin="round" stroke-opacity="0.7">RJ</text><text x="308.0" y="320.0" font-size="8" font-weight="normal" text-anchor="middle"  fill="#222">RJ</text><text x="336.0" y="301.0" font-size="8" font-weight="normal" text-anchor="middle"  fill="none" stroke="#fff" stroke-width="1.6" stroke-linejoin="round" stroke-opacity="0.7">ES</text><text x="336.0" y="301.0" font-size="8" font-weight="normal" text-anchor="middle"  fill="#222">ES</text><text x="316.0" y="245.0" font-size="8" font-weight="normal" text-anchor="middle"  fill="none" stroke="#fff" stroke-width="1.6" stroke-linejoin="round" stroke-opacity="0.7">BA</text><text x="316.0" y="245.0" font-size="8" font-weight="normal" text-anchor="middle"  fill="#222">BA</text><text x="305.5" y="218.0" font-size="8" font-weight="normal" text-anchor="middle"  fill="none" stroke="#fff" stroke-width="1.6" stroke-linejoin="round" stroke-opacity="0.7">PI</text><text x="305.5" y="218.0" font-size="8" font-weight="normal" text-anchor="middle"  fill="#222">PI</text><text x="326.0" y="201.0" font-size="8" font-weight="normal" text-anchor="middle"  fill="none" stroke="#fff" stroke-width="1.6" stroke-linejoin="round" stroke-opacity="0.7">CE</text><text x="326.0" y="201.0" font-size="8" font-weight="normal" text-anchor="middle"  fill="#222">CE</text><text x="293.5" y="282.0" font-size="8" font-weight="normal" text-anchor="middle"  fill="none" stroke="#fff" stroke-width="1.6" stroke-linejoin="round" stroke-opacity="0.7">MG</text><text x="293.5" y="282.0" font-size="8" font-weight="normal" text-anchor="middle"  fill="#222">MG</text><text x="262.0" y="318.0" font-size="8" font-weight="normal" text-anchor="middle"  fill="none" stroke="#fff" stroke-width="1.6" stroke-linejoin="round" stroke-opacity="0.7">PR</text><text x="262.0" y="318.0" font-size="8" font-weight="normal" text-anchor="middle"  fill="#222">PR</text><text x="274.0" y="238.0" font-size="8" font-weight="normal" text-anchor="middle"  fill="none" stroke="#fff" stroke-width="1.6" stroke-linejoin="round" stroke-opacity="0.7">TO</text><text x="274.0" y="238.0" font-size="8" font-weight="normal" text-anchor="middle"  fill="#222">TO</text><text x="351.5" y="185.5" font-size="8" font-weight="normal" text-anchor="middle"  fill="none" stroke="#fff" stroke-width="1.6" stroke-linejoin="round" stroke-opacity="0.7">RN</text><text x="351.5" y="185.5" font-size="8" font-weight="normal" text-anchor="middle"  fill="#222">RN</text><text x="373.6" y="207.0" font-size="8" font-weight="normal" text-anchor="middle"  fill="none" stroke="#fff" stroke-width="1.6" stroke-linejoin="round" stroke-opacity="0.7">PB</text><text x="373.6" y="207.0" font-size="8" font-weight="normal" text-anchor="middle"  fill="#222">PB</text><text x="369.4" y="220.0" font-size="8" font-weight="normal" text-anchor="middle"  fill="none" stroke="#fff" stroke-width="1.6" stroke-linejoin="round" stroke-opacity="0.7">PE</text><text x="369.4" y="220.0" font-size="8" font-weight="normal" text-anchor="middle"  fill="#222">PE</text><text x="368.0" y="236.0" font-size="8" font-weight="normal" text-anchor="middle"  fill="none" stroke="#fff" stroke-width="1.6" stroke-linejoin="round" stroke-opacity="0.7">AL</text><text x="368.0" y="236.0" font-size="8" font-weight="normal" text-anchor="middle"  fill="#222">AL</text><text x="359.0" y="251.0" font-size="8" font-weight="normal" text-anchor="middle"  fill="none" stroke="#fff" stroke-width="1.6" stroke-linejoin="round" stroke-opacity="0.7">SE</text><text x="359.0" y="251.0" font-size="8" font-weight="normal" text-anchor="middle"  fill="#222">SE</text><path d="M366.300 205.900L352.300 210.200M363.200 217.100L351 217.400M362.900 230L351.500 226.100M354.200 244.800L340.600 236.700M329 296L322 293.500M306.500 311.500L305.500 305M349 186l-6 6" stroke="#555" stroke-width=".9" fill="none"/><g transform="translate(175.7 187.4)"><path d="M0 0C-.6-8.500-10.200-14-10.200-24.300a10.200 10.200 0 1 1 20.400 0C10.200-14 .6-8.500 0 0z" fill="url(#ping)" stroke="#c53a30" stroke-width=".9"/><circle cy="-24.300" r="3.300" fill="#561712"/></g><g transform="translate(333.6 190.5)"><path d="M0 0C-.6-8.500-10.200-14-10.200-24.300a10.200 10.200 0 1 1 20.400 0C10.200-14 .6-8.500 0 0z" fill="url(#ping)" stroke="#c53a30" stroke-width=".9"/><circle cy="-24.300" r="3.300" fill="#561712"/></g><g transform="translate(291.7 195.3)"><path d="M0 0C-.6-8.500-10.200-14-10.200-24.300a10.200 10.200 0 1 1 20.400 0C10.200-14 .6-8.500 0 0z" fill="url(#ping)" stroke="#c53a30" stroke-width=".9"/><circle cy="-24.300" r="3.300" fill="#561712"/></g><g transform="translate(327.0 195.3)"><path d="M0 0C-.6-8.500-10.200-14-10.200-24.300a10.200 10.200 0 1 1 20.400 0C10.200-14 .6-8.500 0 0z" fill="url(#ping)" stroke="#c53a30" stroke-width=".9"/><circle cy="-24.300" r="3.300" fill="#561712"/></g><g transform="translate(341.0 197.0)"><path d="M0 0C-.6-8.500-10.200-14-10.200-24.300a10.200 10.200 0 1 1 20.400 0C10.200-14 .6-8.500 0 0z" fill="url(#ping)" stroke="#c53a30" stroke-width=".9"/><circle cy="-24.300" r="3.300" fill="#561712"/></g><g transform="translate(251.0 199.7)"><path d="M0 0C-.6-8.500-10.200-14-10.200-24.300a10.200 10.200 0 1 1 20.400 0C10.200-14 .6-8.500 0 0z" fill="url(#ping)" stroke="#c53a30" stroke-width=".9"/><circle cy="-24.300" r="3.300" fill="#561712"/></g><g transform="translate(341.9 206.4)"><path d="M0 0C-.6-8.500-10.200-14-10.200-24.300a10.200 10.200 0 1 1 20.400 0C10.200-14 .6-8.500 0 0z" fill="url(#ping)" stroke="#c53a30" stroke-width=".9"/><circle cy="-24.300" r="3.300" fill="#561712"/></g><g transform="translate(342.2 213.4)"><path d="M0 0C-.6-8.500-10.200-14-10.200-24.300a10.200 10.200 0 1 1 20.400 0C10.200-14 .6-8.500 0 0z" fill="url(#ping)" stroke="#c53a30" stroke-width=".9"/><circle cy="-24.300" r="3.300" fill="#561712"/></g><g transform="translate(304.9 214.2)"><path d="M0 0C-.6-8.500-10.200-14-10.200-24.300a10.200 10.200 0 1 1 20.400 0C10.200-14 .6-8.500 0 0z" fill="url(#ping)" stroke="#c53a30" stroke-width=".9"/><circle cy="-24.300" r="3.300" fill="#561712"/></g><g transform="translate(148.0 217.4)"><path d="M0 0C-.6-8.500-10.200-14-10.200-24.300a10.200 10.200 0 1 1 20.400 0C10.200-14 .6-8.500 0 0z" fill="url(#ping)" stroke="#c53a30" stroke-width=".9"/><circle cy="-24.300" r="3.300" fill="#561712"/></g><g transform="translate(343.0 219.7)"><path d="M0 0C-.6-8.500-10.200-14-10.200-24.300a10.200 10.200 0 1 1 20.400 0C10.200-14 .6-8.500 0 0z" fill="url(#ping)" stroke="#c53a30" stroke-width=".9"/><circle cy="-24.300" r="3.300" fill="#561712"/></g><g transform="translate(338.0 229.2)"><path d="M0 0C-.6-8.500-10.200-14-10.200-24.300a10.200 10.200 0 1 1 20.400 0C10.200-14 .6-8.500 0 0z" fill="url(#ping)" stroke="#c53a30" stroke-width=".9"/><circle cy="-24.300" r="3.300" fill="#561712"/></g><g transform="translate(274.1 231.3)"><path d="M0 0C-.6-8.500-10.200-14-10.200-24.300a10.200 10.200 0 1 1 20.400 0C10.200-14 .6-8.500 0 0z" fill="url(#ping)" stroke="#c53a30" stroke-width=".9"/><circle cy="-24.300" r="3.300" fill="#561712"/></g><g transform="translate(189.0 232.0)"><path d="M0 0C-.6-8.500-10.200-14-10.200-24.300a10.200 10.200 0 1 1 20.400 0C10.200-14 .6-8.500 0 0z" fill="url(#ping)" stroke="#c53a30" stroke-width=".9"/><circle cy="-24.300" r="3.300" fill="#561712"/></g><g transform="translate(315.8 232.9)"><path d="M0 0C-.6-8.500-10.200-14-10.200-24.300a10.200 10.200 0 1 1 20.400 0C10.200-14 .6-8.500 0 0z" fill="url(#ping)" stroke="#c53a30" stroke-width=".9"/><circle cy="-24.300" r="3.300" fill="#561712"/></g><g transform="translate(227.0 240.8)"><path d="M0 0C-.6-8.500-10.200-14-10.200-24.300a10.200 10.200 0 1 1 20.400 0C10.200-14 .6-8.500 0 0z" fill="url(#ping)" stroke="#c53a30" stroke-width=".9"/><circle cy="-24.300" r="3.300" fill="#561712"/></g><g transform="translate(268.3 256.0)"><path d="M0 0C-.6-8.500-10.200-14-10.200-24.300a10.200 10.200 0 1 1 20.400 0C10.200-14 .6-8.500 0 0z" fill="url(#ping)" stroke="#c53a30" stroke-width=".9"/><circle cy="-24.300" r="3.300" fill="#561712"/></g><g transform="translate(278.0 257.3)"><path d="M0 0C-.6-8.500-10.200-14-10.200-24.300a10.200 10.200 0 1 1 20.400 0C10.200-14 .6-8.500 0 0z" fill="url(#ping)" stroke="#c53a30" stroke-width=".9"/><circle cy="-24.300" r="3.300" fill="#561712"/></g><g transform="translate(301.8 270.5)"><path d="M0 0C-.6-8.500-10.200-14-10.200-24.300a10.200 10.200 0 1 1 20.400 0C10.200-14 .6-8.500 0 0z" fill="url(#ping)" stroke="#c53a30" stroke-width=".9"/><circle cy="-24.300" r="3.300" fill="#561712"/></g><g transform="translate(322.0 277.2)"><path d="M0 0C-.6-8.500-10.200-14-10.200-24.300a10.200 10.200 0 1 1 20.400 0C10.200-14 .6-8.500 0 0z" fill="url(#ping)" stroke="#c53a30" stroke-width=".9"/><circle cy="-24.300" r="3.300" fill="#561712"/></g><g transform="translate(239.0 287.4)"><path d="M0 0C-.6-8.500-10.200-14-10.200-24.300a10.200 10.200 0 1 1 20.400 0C10.200-14 .6-8.500 0 0z" fill="url(#ping)" stroke="#c53a30" stroke-width=".9"/><circle cy="-24.300" r="3.300" fill="#561712"/></g><g transform="translate(269.9 294.3)"><path d="M0 0C-.6-8.500-10.200-14-10.200-24.300a10.200 10.200 0 1 1 20.400 0C10.200-14 .6-8.500 0 0z" fill="url(#ping)" stroke="#c53a30" stroke-width=".9"/><circle cy="-24.300" r="3.300" fill="#561712"/></g><g transform="translate(304.9 300.0)"><path d="M0 0C-.6-8.500-10.200-14-10.200-24.300a10.200 10.200 0 1 1 20.400 0C10.200-14 .6-8.500 0 0z" fill="url(#ping)" stroke="#c53a30" stroke-width=".9"/><circle cy="-24.300" r="3.300" fill="#561712"/></g><g transform="translate(255.0 314.0)"><path d="M0 0C-.6-8.500-10.200-14-10.200-24.300a10.200 10.200 0 1 1 20.400 0C10.200-14 .6-8.500 0 0z" fill="url(#ping)" stroke="#c53a30" stroke-width=".9"/><circle cy="-24.300" r="3.300" fill="#561712"/></g><g transform="translate(269.7 326.3)"><path d="M0 0C-.6-8.500-10.200-14-10.200-24.300a10.200 10.200 0 1 1 20.400 0C10.200-14 .6-8.500 0 0z" fill="url(#ping)" stroke="#c53a30" stroke-width=".9"/><circle cy="-24.300" r="3.300" fill="#561712"/></g><g transform="translate(247.0 342.0)"><path d="M0 0C-.6-8.500-10.200-14-10.200-24.300a10.200 10.200 0 1 1 20.400 0C10.200-14 .6-8.500 0 0z" fill="url(#ping)" stroke="#c53a30" stroke-width=".9"/><circle cy="-24.300" r="3.300" fill="#561712"/></g></svg><div id="iw"><div id="iwc">MT,BRASIL<br><br>Valor pedido&nbsp; :<br>&nbsp;1.910.019,96<br>Quantidade pedida&nbsp; :&nbsp; 7405</div><svg width="11" height="11" style="position:absolute;left:183.500px;top:13px"><path d="M1.500 1.500l8 8M9.500 1.500l-8 8" stroke="#8d8d8d" stroke-width="1.700"/></svg></div>
<svg style="position:absolute;left:215px;top:177.500px" width="26" height="26" viewBox="0 0 26 26"><path d="M4.500 0L13 22.500 21.500 0z" fill="#fff"/><path d="M4.500 1L13 22.500 21.500 1" fill="none" stroke="rgba(0,0,0,.22)" stroke-width="1"/></svg><svg style="position:absolute;left:16px;top:16px" width="56" height="58" viewBox="-28 -28 56 58"><circle r="25" cy="1.200" fill="rgba(0,0,0,.22)" filter="url(#blur1)"/><circle r="25" fill="#fff"/><g fill="none" stroke="#777" stroke-width="2.800"><path d="M-5.500 -11l5.500-5.500 5.500 5.500"/><path d="M-5.500 11l5.500 5.500 5.500-5.500"/><path d="M-11 -5.500l-5.500 5.500 5.500 5.500"/><path d="M11 -5.500l5.500 5.500-5.500 5.500"/></g></svg><div style="position:absolute;left:36px;top:92.5px;width:16.500px;height:33px;background:#fff;border-radius:2px;box-shadow:0 1px 3px rgba(0,0,0,.45)"><svg width="17" height="33" viewBox="0 0 17 33" style="position:absolute;left:0;top:0"><defs><radialGradient id="pgh" cx=".4" cy=".35" r=".7"><stop offset="0" stop-color="#ffd34d"/><stop offset="1" stop-color="#f5a000"/></radialGradient></defs><path d="M2.600 12.100q0-1.500 1.500-1.500h8.500q1.500 0 1.500 1.500v7.900q0 1.100-1.100 1.100h-1.500v8q0 .9-.9.900H6.100q-.9 0-.9-.9v-8H3.700q-1.100 0-1.100-1.100z" fill="#f9b30f" stroke="#d18a06" stroke-width=".7"/><path d="M5.300 10.800h6L8.300 14.200z" fill="#ee5a48"/><circle cx="8.300" cy="7.100" r="3.800" fill="url(#pgh)" stroke="#d18a06" stroke-width=".7"/><path d="M6 15v14M10.600 15v14" stroke="#e39c08" stroke-width=".6" opacity=".6"/></svg></div><div style="position:absolute;left:43px;top:153.5px;width:2.400px;height:181.5px;background:#fff;border-left:1px solid #b5b5b5;border-right:1px solid #b5b5b5;box-sizing:content-box;margin-left:-.2px"></div><div class="zb" style="left:36px;top:137.5px"><svg width="17" height="17"><path d="M4.500 8.500h8M8.500 4.500v8" stroke="#666" stroke-width="1.800"/></svg></div><div class="zb" style="left:36px;top:334.0px"><svg width="17" height="17"><path d="M4.500 8.500h8" stroke="#666" stroke-width="2"/></svg></div><div class="zb" style="left:36px;top:300.0px;height:8px"><svg width="17" height="8"><path d="M4.500 4h8" stroke="#777" stroke-width="1.200"/></svg></div><div class="mtype" style="left:353.3px;width:42px"><b>Mapa</b></div><div class="mtype" style="left:394.5px;width:51.500px;border-left:0">Satélite</div><div class="attr" style="right:79.500px">Dados cartográficos ©2014 Google, INEGI</div><div class="attr" style="right:0;width:79px;border-left:1px solid #ccc">Termos de Uso</div><svg style="position:absolute;left:4px;top:487px" width="70" height="34" viewBox="0 0 70 34"><text x="2.500" y="23.500" font-family="Liberation Serif,serif" font-size="20.500" fill="#fff" stroke="rgba(90,100,110,.55)" stroke-width="1.800" stroke-linejoin="round" paint-order="stroke" letter-spacing="-.6">Google</text></svg></div></div>
<div class="panel" id="p4"><div class="ptitle">Gráfico Status Pedido Venda Tarefas Aguardando (Atual) (Há 5 minutos)</div><div id="chart" style="left:9.9px;top:24.3px"><div id="chd"><span style="left:0;width:99.500px">Tarefa</span><span style="left:99.500px;width:318px">Quantidade</span><svg width="8" height="22" style="position:absolute;left:95px;top:0"><path d="M6.500 2.500H3.500L2 4v11.500l4.500 4" fill="none" stroke="#a9a9a9" stroke-width="1"/></svg></div><div id="crows"><div class="crow" style="top:0px"><span>Ag. Entrega</span></div><div class="crow" style="top:21px"><span>Entregue</span></div><div class="crow" style="top:42px"><span>Ag. Embarque</span></div><div class="crow" style="top:63px"><span>Cancelado</span></div><div class="crow" style="top:84px"><span>Ag. Logística</span></div><div class="crow" style="top:105px"><span>Fat. Parcial</span></div><div class="crow" style="top:126px"><span>Aguardando rec...</span></div><div class="crow" style="top:147px"><span>Ag. Aprovação ...</span></div><div class="crow" style="top:168px"><span></span></div><div class="crow" style="top:189px"><span>Ag. Conf. Pagam...</span></div><div class="crow" style="top:210px"><span>Aguardando apr...</span></div><div class="cbar" style="top:2.4px;width:316px"></div><div class="cbar" style="top:23.4px;width:131.3px"></div><div class="cbar" style="top:44.4px;width:27.7px"></div><div class="cbar" style="top:65.4px;width:10.7px"></div><div class="cbar" style="top:86.4px;width:9.6px"></div></div><div id="cax"></div><i style="left:101.9px"></i><i style="left:121.8px"></i><i style="left:141.8px"></i><i style="left:161.7px"></i><i style="left:181.7px"></i><i style="left:201.6px"></i><i style="left:221.6px"></i><i style="left:241.5px"></i><i style="left:261.5px"></i><i style="left:281.4px"></i><i style="left:301.4px"></i><i style="left:321.3px"></i><i style="left:341.3px"></i><i style="left:361.2px"></i><i style="left:381.2px"></i><i style="left:401.1px"></i><span class="xl0" style="left:100.1px">0,0</span><span class="xl" style="left:141.9px">3,0k</span><span class="xl" style="left:181.6px">5,9k</span><span class="xl" style="left:222.4px">8,8k</span><span class="xl" style="left:261.6px">12,0l</span><span class="xl" style="left:301.4px">14,5l</span><span class="xl" style="left:341.6px">17,5l</span><span class="xl" style="left:381.2px">20,5l</span><div id="csb"><div class="sbb" style="top:0"><svg width="15" height="15"><path d="M3.500 9.500h8l-4-4.500z" fill="#000"/></svg></div><div class="sbt"></div><div class="sbb" style="top:233.500px"><svg width="15" height="15"><path d="M3.500 5.500h8l-4 4.500z" fill="#000"/></svg></div></div></div></div>
<div id="footer"><svg width="16" height="16" viewBox="0 0 16 16"><path d="M8 .5c2 0 3.400 1.600 3.400 3.900 0 1.800-.7 3.300-1.700 4.200v.9c0 .9 2.300 1.400 4.300 2.300 1.200.5 1.800 1.200 1.900 3.700H.1c.1-2.500.7-3.200 1.900-3.700 2-.9 4.300-1.400 4.300-2.300v-.9C5.300 7.700 4.600 6.200 4.600 4.400 4.600 2.100 6 .5 8 .5z" fill="#fff"/></svg><span>MILLENNIUM</span></div>
</body></html>
